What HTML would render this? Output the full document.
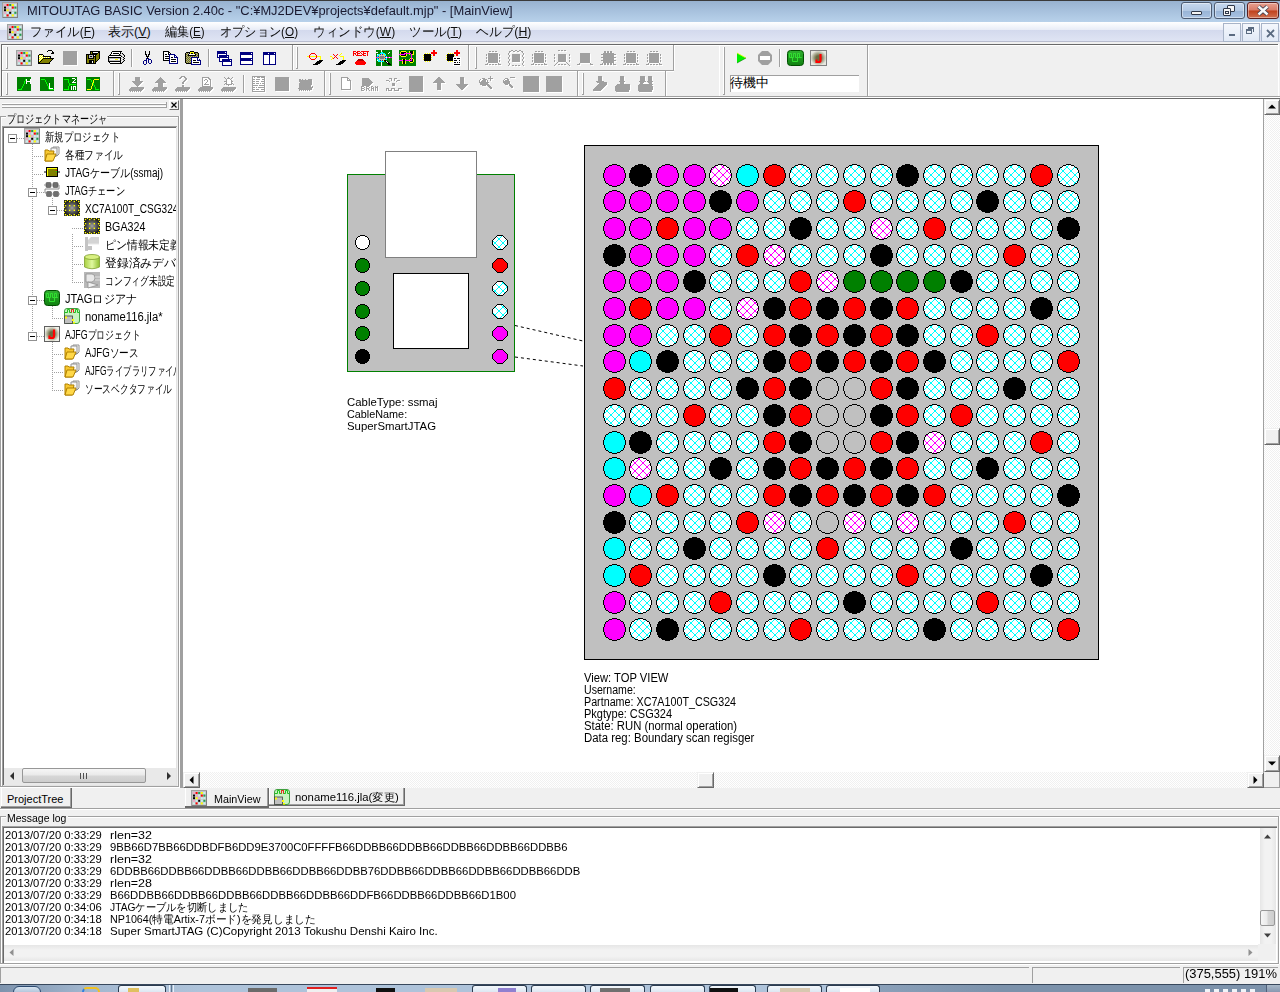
<!DOCTYPE html>
<html><head><meta charset="utf-8">
<style>
*{box-sizing:border-box}
html,body{margin:0;padding:0}
body{width:1280px;height:992px;overflow:hidden;position:relative;background:#f0f0f0;font-family:"Liberation Sans",sans-serif;font-size:12px;color:#000}
.a{position:absolute}
.t{position:absolute;white-space:nowrap}
svg{overflow:visible}
</style></head><body>
<div class="a" style="left:0px;top:0px;width:1280px;height:22px;background:linear-gradient(#96b0ce,#a6c0dc 45%,#b8d1ea)"></div>
<div class="a" style="left:0px;top:0px;width:1280px;height:1px;background:#3a3a3a"></div>
<svg class="a" style="left:2px;top:2px" width="16" height="16" viewBox="0 0 16 16"><rect x="0" y="0" width="16" height="16" fill="#c4c4c4"/><path d="M15.5 0V16M0 15.5H16" stroke="#808080"/><path d="M0.5 0V16M0 0.5H16" stroke="#a0a0a0"/><rect x="2.0" y="2.0" width="2" height="2" fill="#f0a8c8"/><rect x="4.6" y="2.0" width="2" height="2" fill="#ff0000"/><rect x="7.2" y="2.0" width="2" height="2" fill="#20a050"/><rect x="9.8" y="2.0" width="2" height="2" fill="#ffff00"/><rect x="12.4" y="2.0" width="2" height="2" fill="#c8f0f0"/><rect x="2.0" y="4.6" width="2" height="2" fill="#000"/><rect x="4.6" y="4.6" width="2" height="2" fill="#f0a8c8"/><rect x="7.2" y="4.6" width="2" height="2" fill="#c8f0f0"/><rect x="9.8" y="4.6" width="2" height="2" fill="#ff0000"/><rect x="12.4" y="4.6" width="2" height="2" fill="#20a050"/><rect x="2.0" y="7.2" width="2" height="2" fill="#000"/><rect x="4.6" y="7.2" width="2" height="2" fill="#ffff00"/><rect x="7.2" y="7.2" width="2" height="2" fill="#f0a8c8"/><rect x="9.8" y="7.2" width="2" height="2" fill="#c8f0f0"/><rect x="12.4" y="7.2" width="2" height="2" fill="#c8f0f0"/><rect x="2.0" y="9.8" width="2" height="2" fill="#f0a8c8"/><rect x="4.6" y="9.8" width="2" height="2" fill="#c8f0f0"/><rect x="7.2" y="9.8" width="2" height="2" fill="#000"/><rect x="9.8" y="9.8" width="2" height="2" fill="#c8f0f0"/><rect x="12.4" y="9.8" width="2" height="2" fill="#20a050"/><rect x="2.0" y="12.4" width="2" height="2" fill="#c8f0f0"/><rect x="4.6" y="12.4" width="2" height="2" fill="#ff0000"/><rect x="7.2" y="12.4" width="2" height="2" fill="#c8f0f0"/><rect x="9.8" y="12.4" width="2" height="2" fill="#ffff00"/><rect x="12.4" y="12.4" width="2" height="2" fill="#c8f0f0"/></svg>
<div class="t" style="left:27px;top:4.00px;font-size:13px;line-height:13px;color:#1a1a30;transform:scaleX(0.9918);transform-origin:0 0;"><span class="m" id="m0">MITOUJTAG BASIC Version 2.40c - &quot;C:¥MJ2DEV¥projects¥default.mjp&quot; - [MainView]</span></div>
<div class="a" style="left:1181px;top:2px;width:31px;height:17px;border:1px solid #4c5a70;border-radius:3px;background:linear-gradient(#c6d8ee,#b3c9e4 50%,#98b4d6 52%,#a9c2e2);box-shadow:inset 0 0 0 1px rgba(255,255,255,.45)"></div><div class="a" style="left:1191px;top:11px;width:11px;height:4px;background:#f4f4f4;border:1px solid #303848;border-radius:1px"></div>
<div class="a" style="left:1214px;top:2px;width:31px;height:17px;border:1px solid #4c5a70;border-radius:3px;background:linear-gradient(#c6d8ee,#b3c9e4 50%,#98b4d6 52%,#a9c2e2);box-shadow:inset 0 0 0 1px rgba(255,255,255,.45)"></div><div class="a" style="left:1227px;top:5px;width:8px;height:7px;background:#f4f4f4;border:1.5px solid #303848;border-radius:1px"></div><div class="a" style="left:1223px;top:8px;width:8px;height:8px;background:#f4f4f4;border:1.5px solid #303848;border-radius:1px"></div><div class="a" style="left:1225px;top:11px;width:4px;height:3px;border:1px solid #303848"></div>
<div class="a" style="left:1247px;top:2px;width:32px;height:17px;border:1px solid #5a1f1f;border-radius:3px;background:linear-gradient(#e8a090,#d87a66 48%,#c0401c 52%,#d07050);box-shadow:inset 0 0 0 1px rgba(255,255,255,.4)"></div>
<svg class="a" style="left:1256px;top:5px" width="14" height="11" viewBox="0 0 14 11"><path d="M2.5 1.5L11.5 9.5M11.5 1.5L2.5 9.5" stroke="#3a3f50" stroke-width="4.2"/><path d="M2.5 1.5L11.5 9.5M11.5 1.5L2.5 9.5" stroke="#f8f8f8" stroke-width="2.4"/></svg>
<div class="a" style="left:0px;top:22px;width:1280px;height:20px;background:linear-gradient(#ffffff 0%,#e9edf7 38%,#d3d9ed 40%,#e0e5f4 100%)"></div>
<div class="a" style="left:0px;top:41px;width:1280px;height:1px;background:#b9bdcf"></div>
<svg class="a" style="left:7px;top:24px" width="16" height="16" viewBox="0 0 16 16"><rect x="0" y="0" width="16" height="16" fill="#c4c4c4"/><path d="M15.5 0V16M0 15.5H16" stroke="#808080"/><path d="M0.5 0V16M0 0.5H16" stroke="#a0a0a0"/><rect x="2.0" y="2.0" width="2" height="2" fill="#f0a8c8"/><rect x="4.6" y="2.0" width="2" height="2" fill="#ff0000"/><rect x="7.2" y="2.0" width="2" height="2" fill="#20a050"/><rect x="9.8" y="2.0" width="2" height="2" fill="#ffff00"/><rect x="12.4" y="2.0" width="2" height="2" fill="#c8f0f0"/><rect x="2.0" y="4.6" width="2" height="2" fill="#000"/><rect x="4.6" y="4.6" width="2" height="2" fill="#f0a8c8"/><rect x="7.2" y="4.6" width="2" height="2" fill="#c8f0f0"/><rect x="9.8" y="4.6" width="2" height="2" fill="#ff0000"/><rect x="12.4" y="4.6" width="2" height="2" fill="#20a050"/><rect x="2.0" y="7.2" width="2" height="2" fill="#000"/><rect x="4.6" y="7.2" width="2" height="2" fill="#ffff00"/><rect x="7.2" y="7.2" width="2" height="2" fill="#f0a8c8"/><rect x="9.8" y="7.2" width="2" height="2" fill="#c8f0f0"/><rect x="12.4" y="7.2" width="2" height="2" fill="#c8f0f0"/><rect x="2.0" y="9.8" width="2" height="2" fill="#f0a8c8"/><rect x="4.6" y="9.8" width="2" height="2" fill="#c8f0f0"/><rect x="7.2" y="9.8" width="2" height="2" fill="#000"/><rect x="9.8" y="9.8" width="2" height="2" fill="#c8f0f0"/><rect x="12.4" y="9.8" width="2" height="2" fill="#20a050"/><rect x="2.0" y="12.4" width="2" height="2" fill="#c8f0f0"/><rect x="4.6" y="12.4" width="2" height="2" fill="#ff0000"/><rect x="7.2" y="12.4" width="2" height="2" fill="#c8f0f0"/><rect x="9.8" y="12.4" width="2" height="2" fill="#ffff00"/><rect x="12.4" y="12.4" width="2" height="2" fill="#c8f0f0"/></svg>
<div class="t" style="left:30px;top:26.42px;font-size:12.5px;line-height:12.5px;color:#101010;transform:scaleX(0.9559);transform-origin:0 0;"><span class="m" id="m1">ファイル(<u style="text-underline-offset:1px">F</u>)</span></div>
<div class="t" style="left:108px;top:26.42px;font-size:12.5px;line-height:12.5px;color:#101010;transform:scaleX(1.0000);transform-origin:0 0;"><span class="m" id="m2">表示(<u style="text-underline-offset:1px">V</u>)</span></div>
<div class="t" style="left:165px;top:26.42px;font-size:12.5px;line-height:12.5px;color:#101010;transform:scaleX(0.9302);transform-origin:0 0;"><span class="m" id="m3">編集(<u style="text-underline-offset:1px">E</u>)</span></div>
<div class="t" style="left:220px;top:26.42px;font-size:12.5px;line-height:12.5px;color:#101010;transform:scaleX(0.9398);transform-origin:0 0;"><span class="m" id="m4">オプション(<u style="text-underline-offset:1px">O</u>)</span></div>
<div class="t" style="left:313px;top:26.42px;font-size:12.5px;line-height:12.5px;color:#101010;transform:scaleX(0.9647);transform-origin:0 0;"><span class="m" id="m5">ウィンドウ(<u style="text-underline-offset:1px">W</u>)</span></div>
<div class="t" style="left:409px;top:26.42px;font-size:12.5px;line-height:12.5px;color:#101010;transform:scaleX(0.9636);transform-origin:0 0;"><span class="m" id="m6">ツール(<u style="text-underline-offset:1px">T</u>)</span></div>
<div class="t" style="left:476px;top:26.42px;font-size:12.5px;line-height:12.5px;color:#101010;transform:scaleX(0.9821);transform-origin:0 0;"><span class="m" id="m7">ヘルプ(<u style="text-underline-offset:1px">H</u>)</span></div>
<div class="a" style="left:1223px;top:23px;width:18px;height:19px;border:1px solid #a8b4c8;background:linear-gradient(#f4f7fc,#e1e9f6)"></div><div class="a" style="left:1229px;top:34px;width:6px;height:2px;background:#5a6a80"></div>
<div class="a" style="left:1242px;top:23px;width:18px;height:19px;border:1px solid #a8b4c8;background:linear-gradient(#f4f7fc,#e1e9f6)"></div><div class="a" style="left:1246px;top:29px;width:6px;height:5px;border:1px solid #5a6a80;border-top-width:2px"></div><div class="a" style="left:1248px;top:27px;width:6px;height:5px;border-top:2px solid #5a6a80;border-right:1px solid #5a6a80"></div>
<div class="a" style="left:1261px;top:23px;width:18px;height:19px;border:1px solid #a8b4c8;background:linear-gradient(#f4f7fc,#e1e9f6)"></div><svg class="a" style="left:1266px;top:29px" width="9" height="9"><path d="M1 1L8 8M8 1L1 8" stroke="#5a6a80" stroke-width="1.8"/></svg>
<div class="a" style="left:0;top:42px;width:1280px;height:57px;background:#f0f0f0"></div>
<div class="a" style="left:1px;top:44px;width:1277px;height:1px;background:#696969"></div>
<div class="a" style="left:1px;top:44px;width:1px;height:55px;background:#696969"></div>
<div class="a" style="left:2px;top:45px;width:1276px;height:1px;background:#fff"></div>
<div class="a" style="left:2px;top:45px;width:1px;height:52px;background:#fff"></div>
<div class="a" style="left:1278px;top:44px;width:1px;height:54px;background:#fff"></div>
<div class="a" style="left:2px;top:70px;width:672px;height:1px;background:#a0a0a0"></div>
<div class="a" style="left:2px;top:71px;width:672px;height:1px;background:#fff"></div>
<div class="a" style="left:0px;top:96px;width:1280px;height:1px;background:#a0a0a0"></div>
<div class="a" style="left:0px;top:97px;width:1280px;height:1px;background:#fff"></div>
<div class="a" style="left:0px;top:98px;width:1280px;height:1px;background:#696969"></div>
<div class="a" style="left:292px;top:45px;width:1px;height:25px;background:#a0a0a0"></div>
<div class="a" style="left:293px;top:45px;width:1px;height:25px;background:#fff"></div>
<div class="a" style="left:468px;top:45px;width:1px;height:25px;background:#a0a0a0"></div>
<div class="a" style="left:469px;top:45px;width:1px;height:25px;background:#fff"></div>
<div class="a" style="left:673px;top:45px;width:1px;height:25px;background:#a0a0a0"></div>
<div class="a" style="left:674px;top:45px;width:1px;height:25px;background:#fff"></div>
<div class="a" style="left:113px;top:71px;width:1px;height:25px;background:#a0a0a0"></div>
<div class="a" style="left:114px;top:71px;width:1px;height:25px;background:#fff"></div>
<div class="a" style="left:324px;top:71px;width:1px;height:25px;background:#a0a0a0"></div>
<div class="a" style="left:325px;top:71px;width:1px;height:25px;background:#fff"></div>
<div class="a" style="left:577px;top:71px;width:1px;height:25px;background:#a0a0a0"></div>
<div class="a" style="left:578px;top:71px;width:1px;height:25px;background:#fff"></div>
<div class="a" style="left:665px;top:71px;width:1px;height:25px;background:#a0a0a0"></div>
<div class="a" style="left:666px;top:71px;width:1px;height:25px;background:#fff"></div>
<div class="a" style="left:719px;top:45px;width:1px;height:51px;background:#fff"></div>
<div class="a" style="left:867px;top:45px;width:1px;height:51px;background:#a0a0a0"></div>
<div class="a" style="left:868px;top:45px;width:1px;height:51px;background:#fff"></div>
<div class="a" style="left:6px;top:47px;width:1px;height:22px;background:#fff"></div><div class="a" style="left:7px;top:47px;width:1px;height:22px;background:#a0a0a0"></div><div class="a" style="left:6px;top:68px;width:2px;height:1px;background:#a0a0a0"></div>
<div class="a" style="left:296px;top:47px;width:1px;height:22px;background:#fff"></div><div class="a" style="left:297px;top:47px;width:1px;height:22px;background:#a0a0a0"></div><div class="a" style="left:296px;top:68px;width:2px;height:1px;background:#a0a0a0"></div>
<div class="a" style="left:475px;top:47px;width:1px;height:22px;background:#fff"></div><div class="a" style="left:476px;top:47px;width:1px;height:22px;background:#a0a0a0"></div><div class="a" style="left:475px;top:68px;width:2px;height:1px;background:#a0a0a0"></div>
<div class="a" style="left:6px;top:73px;width:1px;height:22px;background:#fff"></div><div class="a" style="left:7px;top:73px;width:1px;height:22px;background:#a0a0a0"></div><div class="a" style="left:6px;top:94px;width:2px;height:1px;background:#a0a0a0"></div>
<div class="a" style="left:118px;top:73px;width:1px;height:22px;background:#fff"></div><div class="a" style="left:119px;top:73px;width:1px;height:22px;background:#a0a0a0"></div><div class="a" style="left:118px;top:94px;width:2px;height:1px;background:#a0a0a0"></div>
<div class="a" style="left:329px;top:73px;width:1px;height:22px;background:#fff"></div><div class="a" style="left:330px;top:73px;width:1px;height:22px;background:#a0a0a0"></div><div class="a" style="left:329px;top:94px;width:2px;height:1px;background:#a0a0a0"></div>
<div class="a" style="left:582px;top:73px;width:1px;height:22px;background:#fff"></div><div class="a" style="left:583px;top:73px;width:1px;height:22px;background:#a0a0a0"></div><div class="a" style="left:582px;top:94px;width:2px;height:1px;background:#a0a0a0"></div>
<div class="a" style="left:723px;top:47px;width:1px;height:48px;background:#fff"></div><div class="a" style="left:724px;top:47px;width:1px;height:48px;background:#a0a0a0"></div><div class="a" style="left:723px;top:94px;width:2px;height:1px;background:#a0a0a0"></div>
<div class="a" style="left:131px;top:49px;width:1px;height:18px;background:#a0a0a0"></div><div class="a" style="left:132px;top:49px;width:1px;height:18px;background:#fff"></div>
<div class="a" style="left:208px;top:49px;width:1px;height:18px;background:#a0a0a0"></div><div class="a" style="left:209px;top:49px;width:1px;height:18px;background:#fff"></div>
<div class="a" style="left:243px;top:75px;width:1px;height:18px;background:#a0a0a0"></div><div class="a" style="left:244px;top:75px;width:1px;height:18px;background:#fff"></div>
<div class="a" style="left:779px;top:49px;width:1px;height:18px;background:#a0a0a0"></div><div class="a" style="left:780px;top:49px;width:1px;height:18px;background:#fff"></div>
<svg class="a" style="left:16px;top:50px" width="16" height="16" viewBox="0 0 16 16"><rect x="0" y="0" width="16" height="16" fill="#c4c4c4"/><path d="M15.5 0V16M0 15.5H16" stroke="#808080"/><path d="M0.5 0V16M0 0.5H16" stroke="#a0a0a0"/><rect x="2.0" y="2.0" width="2" height="2" fill="#f0a8c8"/><rect x="4.6" y="2.0" width="2" height="2" fill="#ff0000"/><rect x="7.2" y="2.0" width="2" height="2" fill="#20a050"/><rect x="9.8" y="2.0" width="2" height="2" fill="#ffff00"/><rect x="12.4" y="2.0" width="2" height="2" fill="#c8f0f0"/><rect x="2.0" y="4.6" width="2" height="2" fill="#000"/><rect x="4.6" y="4.6" width="2" height="2" fill="#f0a8c8"/><rect x="7.2" y="4.6" width="2" height="2" fill="#c8f0f0"/><rect x="9.8" y="4.6" width="2" height="2" fill="#ff0000"/><rect x="12.4" y="4.6" width="2" height="2" fill="#20a050"/><rect x="2.0" y="7.2" width="2" height="2" fill="#000"/><rect x="4.6" y="7.2" width="2" height="2" fill="#ffff00"/><rect x="7.2" y="7.2" width="2" height="2" fill="#f0a8c8"/><rect x="9.8" y="7.2" width="2" height="2" fill="#c8f0f0"/><rect x="12.4" y="7.2" width="2" height="2" fill="#c8f0f0"/><rect x="2.0" y="9.8" width="2" height="2" fill="#f0a8c8"/><rect x="4.6" y="9.8" width="2" height="2" fill="#c8f0f0"/><rect x="7.2" y="9.8" width="2" height="2" fill="#000"/><rect x="9.8" y="9.8" width="2" height="2" fill="#c8f0f0"/><rect x="12.4" y="9.8" width="2" height="2" fill="#20a050"/><rect x="2.0" y="12.4" width="2" height="2" fill="#c8f0f0"/><rect x="4.6" y="12.4" width="2" height="2" fill="#ff0000"/><rect x="7.2" y="12.4" width="2" height="2" fill="#c8f0f0"/><rect x="9.8" y="12.4" width="2" height="2" fill="#ffff00"/><rect x="12.4" y="12.4" width="2" height="2" fill="#c8f0f0"/></svg>
<svg class="a" style="left:732px;top:50px" width="16" height="16" viewBox="0 0 16 16"><path d="M5 3L14 8L5 13Z" fill="#00f000"/><path d="M5 3L14 8" stroke="#e8ff00" stroke-width="0.8"/><path d="M5 13L14 8" stroke="#008000" stroke-width="0.6"/></svg>
<svg class="a" style="left:757px;top:50px" width="16" height="16" viewBox="0 0 16 16"><path d="M5 1H11L15 5V11L11 15H5L1 11V5Z" fill="#a0a0a0"/><rect x="3" y="6" width="10" height="4" fill="#fff"/></svg>
<svg class="a" style="left:787px;top:50px" width="16" height="16" viewBox="0 0 16 16"><defs><linearGradient id="lag" x1="0" y1="0" x2="0" y2="1"><stop offset="0" stop-color="#30b030"/><stop offset="1" stop-color="#108010"/></linearGradient></defs><rect x="0.5" y="0.5" width="16" height="15" rx="3" fill="url(#lag)" stroke="#005000"/><path d="M2.5 7.5V3.5H4.5V7.5H6.5V3.5H8.5V7.5H10.5V3.5H12.5V7.5H14.5M2.5 7.5H5.5V11.5H10.5V7.5H14.5" stroke="#30e030" fill="none" stroke-width="1"/></svg>
<svg class="a" style="left:810px;top:50px" width="16" height="16" viewBox="0 0 16 16"><defs><radialGradient id="jjg"><stop offset="0.3" stop-color="#6a6a40"/><stop offset="1" stop-color="#e8e8e0"/></radialGradient></defs><rect x="0.5" y="0.5" width="16" height="15" fill="url(#jjg)" stroke="#808080"/><path d="M10.5 4V10.5Q10.5 12 8.5 12H6.5V9.5" stroke="#f00" stroke-width="2.2" fill="none"/></svg>
<svg class="a" style="left:140px;top:49px" width="16" height="16" shape-rendering="crispEdges"><rect x="5" y="2" width="1" height="1" fill="#000000"/><rect x="9" y="2" width="1" height="1" fill="#000000"/><rect x="5" y="3" width="1" height="1" fill="#000000"/><rect x="9" y="3" width="1" height="1" fill="#000000"/><rect x="5" y="4" width="1" height="1" fill="#000000"/><rect x="9" y="4" width="1" height="1" fill="#000000"/><rect x="5" y="5" width="2" height="1" fill="#000000"/><rect x="8" y="5" width="2" height="1" fill="#000000"/><rect x="6" y="6" width="1" height="1" fill="#000000"/><rect x="8" y="6" width="1" height="1" fill="#000000"/><rect x="6" y="7" width="3" height="1" fill="#000000"/><rect x="7" y="8" width="1" height="1" fill="#000000"/><rect x="6" y="9" width="1" height="1" fill="#000080"/><rect x="7" y="9" width="1" height="1" fill="#000000"/><rect x="8" y="9" width="1" height="1" fill="#000080"/><rect x="6" y="10" width="1" height="1" fill="#000080"/><rect x="8" y="10" width="3" height="1" fill="#000080"/><rect x="4" y="11" width="3" height="1" fill="#000080"/><rect x="8" y="11" width="1" height="1" fill="#000080"/><rect x="11" y="11" width="1" height="1" fill="#000080"/><rect x="3" y="12" width="1" height="1" fill="#000080"/><rect x="6" y="12" width="1" height="1" fill="#000080"/><rect x="8" y="12" width="1" height="1" fill="#000080"/><rect x="11" y="12" width="1" height="1" fill="#000080"/><rect x="3" y="13" width="1" height="1" fill="#000080"/><rect x="6" y="13" width="1" height="1" fill="#000080"/><rect x="8" y="13" width="1" height="1" fill="#000080"/><rect x="11" y="13" width="1" height="1" fill="#000080"/><rect x="3" y="14" width="1" height="1" fill="#000080"/><rect x="6" y="14" width="1" height="1" fill="#000080"/><rect x="9" y="14" width="2" height="1" fill="#000080"/><rect x="4" y="15" width="2" height="1" fill="#000080"/></svg>
<svg class="a" style="left:161px;top:51px" width="17" height="13" shape-rendering="crispEdges"><rect x="2" y="0" width="6" height="1" fill="#000000"/><rect x="2" y="1" width="1" height="1" fill="#000000"/><rect x="3" y="1" width="4" height="1" fill="#ffffff"/><rect x="7" y="1" width="2" height="1" fill="#000000"/><rect x="2" y="2" width="1" height="1" fill="#000000"/><rect x="3" y="2" width="4" height="1" fill="#ffffff"/><rect x="7" y="2" width="1" height="1" fill="#000000"/><rect x="8" y="2" width="1" height="1" fill="#ffffff"/><rect x="9" y="2" width="1" height="1" fill="#000000"/><rect x="2" y="3" width="1" height="1" fill="#000000"/><rect x="3" y="3" width="1" height="1" fill="#ffffff"/><rect x="4" y="3" width="2" height="1" fill="#000000"/><rect x="6" y="3" width="1" height="1" fill="#ffffff"/><rect x="7" y="3" width="1" height="1" fill="#000000"/><rect x="8" y="3" width="6" height="1" fill="#000080"/><rect x="2" y="4" width="1" height="1" fill="#000000"/><rect x="3" y="4" width="5" height="1" fill="#ffffff"/><rect x="8" y="4" width="1" height="1" fill="#000080"/><rect x="9" y="4" width="4" height="1" fill="#ffffff"/><rect x="13" y="4" width="2" height="1" fill="#000080"/><rect x="2" y="5" width="1" height="1" fill="#000000"/><rect x="3" y="5" width="1" height="1" fill="#ffffff"/><rect x="4" y="5" width="4" height="1" fill="#000000"/><rect x="8" y="5" width="1" height="1" fill="#000080"/><rect x="9" y="5" width="4" height="1" fill="#ffffff"/><rect x="13" y="5" width="1" height="1" fill="#000080"/><rect x="14" y="5" width="1" height="1" fill="#ffffff"/><rect x="15" y="5" width="1" height="1" fill="#000080"/><rect x="2" y="6" width="1" height="1" fill="#000000"/><rect x="3" y="6" width="5" height="1" fill="#ffffff"/><rect x="8" y="6" width="1" height="1" fill="#000080"/><rect x="9" y="6" width="1" height="1" fill="#ffffff"/><rect x="10" y="6" width="2" height="1" fill="#000000"/><rect x="12" y="6" width="1" height="1" fill="#ffffff"/><rect x="13" y="6" width="4" height="1" fill="#000080"/><rect x="2" y="7" width="1" height="1" fill="#000000"/><rect x="3" y="7" width="1" height="1" fill="#ffffff"/><rect x="4" y="7" width="4" height="1" fill="#000000"/><rect x="8" y="7" width="1" height="1" fill="#000080"/><rect x="9" y="7" width="7" height="1" fill="#ffffff"/><rect x="16" y="7" width="1" height="1" fill="#000080"/><rect x="2" y="8" width="1" height="1" fill="#000000"/><rect x="3" y="8" width="5" height="1" fill="#ffffff"/><rect x="8" y="8" width="1" height="1" fill="#000080"/><rect x="9" y="8" width="1" height="1" fill="#ffffff"/><rect x="10" y="8" width="5" height="1" fill="#000000"/><rect x="15" y="8" width="1" height="1" fill="#ffffff"/><rect x="16" y="8" width="1" height="1" fill="#000080"/><rect x="2" y="9" width="6" height="1" fill="#000000"/><rect x="8" y="9" width="1" height="1" fill="#000080"/><rect x="9" y="9" width="7" height="1" fill="#ffffff"/><rect x="16" y="9" width="1" height="1" fill="#000080"/><rect x="8" y="10" width="1" height="1" fill="#000080"/><rect x="9" y="10" width="1" height="1" fill="#ffffff"/><rect x="10" y="10" width="5" height="1" fill="#000000"/><rect x="15" y="10" width="1" height="1" fill="#ffffff"/><rect x="16" y="10" width="1" height="1" fill="#000080"/><rect x="8" y="11" width="1" height="1" fill="#000080"/><rect x="9" y="11" width="7" height="1" fill="#ffffff"/><rect x="16" y="11" width="1" height="1" fill="#000080"/><rect x="8" y="12" width="9" height="1" fill="#000080"/></svg>
<svg class="a" style="left:183px;top:51px" width="18" height="14" shape-rendering="crispEdges"><rect x="7" y="0" width="4" height="1" fill="#000000"/><rect x="3" y="1" width="4" height="1" fill="#000000"/><rect x="7" y="1" width="4" height="1" fill="#ffff00"/><rect x="11" y="1" width="4" height="1" fill="#000000"/><rect x="2" y="2" width="1" height="1" fill="#000000"/><rect x="3" y="2" width="1" height="1" fill="#a0a0a0"/><rect x="4" y="2" width="1" height="1" fill="#808000"/><rect x="5" y="2" width="1" height="1" fill="#c0c0c0"/><rect x="6" y="2" width="1" height="1" fill="#000000"/><rect x="7" y="2" width="1" height="1" fill="#ffff00"/><rect x="8" y="2" width="2" height="1" fill="#000000"/><rect x="10" y="2" width="1" height="1" fill="#ffff00"/><rect x="11" y="2" width="1" height="1" fill="#000000"/><rect x="12" y="2" width="1" height="1" fill="#808000"/><rect x="13" y="2" width="1" height="1" fill="#a0a0a0"/><rect x="14" y="2" width="1" height="1" fill="#808000"/><rect x="15" y="2" width="1" height="1" fill="#000000"/><rect x="2" y="3" width="1" height="1" fill="#000000"/><rect x="3" y="3" width="1" height="1" fill="#808000"/><rect x="4" y="3" width="1" height="1" fill="#a0a0a0"/><rect x="5" y="3" width="1" height="1" fill="#000000"/><rect x="6" y="3" width="6" height="1" fill="#ffffff"/><rect x="12" y="3" width="1" height="1" fill="#000000"/><rect x="13" y="3" width="1" height="1" fill="#808000"/><rect x="14" y="3" width="1" height="1" fill="#a0a0a0"/><rect x="15" y="3" width="1" height="1" fill="#000000"/><rect x="2" y="4" width="1" height="1" fill="#000000"/><rect x="3" y="4" width="1" height="1" fill="#a0a0a0"/><rect x="4" y="4" width="1" height="1" fill="#808000"/><rect x="5" y="4" width="8" height="1" fill="#000000"/><rect x="13" y="4" width="1" height="1" fill="#a0a0a0"/><rect x="14" y="4" width="1" height="1" fill="#808000"/><rect x="15" y="4" width="1" height="1" fill="#000000"/><rect x="2" y="5" width="1" height="1" fill="#000000"/><rect x="3" y="5" width="1" height="1" fill="#808000"/><rect x="4" y="5" width="1" height="1" fill="#a0a0a0"/><rect x="5" y="5" width="1" height="1" fill="#808000"/><rect x="6" y="5" width="1" height="1" fill="#a0a0a0"/><rect x="7" y="5" width="1" height="1" fill="#808000"/><rect x="8" y="5" width="1" height="1" fill="#a0a0a0"/><rect x="9" y="5" width="1" height="1" fill="#808000"/><rect x="10" y="5" width="1" height="1" fill="#a0a0a0"/><rect x="11" y="5" width="1" height="1" fill="#808000"/><rect x="12" y="5" width="1" height="1" fill="#a0a0a0"/><rect x="13" y="5" width="1" height="1" fill="#808000"/><rect x="14" y="5" width="1" height="1" fill="#a0a0a0"/><rect x="15" y="5" width="1" height="1" fill="#000000"/><rect x="2" y="6" width="1" height="1" fill="#000000"/><rect x="3" y="6" width="1" height="1" fill="#a0a0a0"/><rect x="4" y="6" width="1" height="1" fill="#808000"/><rect x="5" y="6" width="1" height="1" fill="#a0a0a0"/><rect x="6" y="6" width="1" height="1" fill="#808000"/><rect x="7" y="6" width="1" height="1" fill="#a0a0a0"/><rect x="8" y="6" width="7" height="1" fill="#000080"/><rect x="15" y="6" width="1" height="1" fill="#000000"/><rect x="2" y="7" width="1" height="1" fill="#000000"/><rect x="3" y="7" width="1" height="1" fill="#808000"/><rect x="4" y="7" width="1" height="1" fill="#a0a0a0"/><rect x="5" y="7" width="1" height="1" fill="#808000"/><rect x="6" y="7" width="1" height="1" fill="#a0a0a0"/><rect x="7" y="7" width="1" height="1" fill="#808000"/><rect x="8" y="7" width="1" height="1" fill="#000080"/><rect x="9" y="7" width="5" height="1" fill="#ffffff"/><rect x="14" y="7" width="1" height="1" fill="#000080"/><rect x="15" y="7" width="1" height="1" fill="#ffffff"/><rect x="2" y="8" width="1" height="1" fill="#000000"/><rect x="3" y="8" width="1" height="1" fill="#a0a0a0"/><rect x="4" y="8" width="1" height="1" fill="#808000"/><rect x="5" y="8" width="1" height="1" fill="#a0a0a0"/><rect x="6" y="8" width="1" height="1" fill="#808000"/><rect x="7" y="8" width="1" height="1" fill="#a0a0a0"/><rect x="8" y="8" width="1" height="1" fill="#000080"/><rect x="9" y="8" width="5" height="1" fill="#ffffff"/><rect x="14" y="8" width="1" height="1" fill="#000080"/><rect x="15" y="8" width="1" height="1" fill="#ffffff"/><rect x="16" y="8" width="1" height="1" fill="#000080"/><rect x="2" y="9" width="1" height="1" fill="#000000"/><rect x="3" y="9" width="1" height="1" fill="#808000"/><rect x="4" y="9" width="1" height="1" fill="#a0a0a0"/><rect x="5" y="9" width="1" height="1" fill="#808000"/><rect x="6" y="9" width="1" height="1" fill="#a0a0a0"/><rect x="7" y="9" width="1" height="1" fill="#808000"/><rect x="8" y="9" width="1" height="1" fill="#000080"/><rect x="9" y="9" width="1" height="1" fill="#ffffff"/><rect x="10" y="9" width="3" height="1" fill="#000000"/><rect x="13" y="9" width="1" height="1" fill="#ffffff"/><rect x="14" y="9" width="4" height="1" fill="#000080"/><rect x="2" y="10" width="1" height="1" fill="#000000"/><rect x="3" y="10" width="1" height="1" fill="#a0a0a0"/><rect x="4" y="10" width="1" height="1" fill="#808000"/><rect x="5" y="10" width="1" height="1" fill="#a0a0a0"/><rect x="6" y="10" width="1" height="1" fill="#808000"/><rect x="7" y="10" width="1" height="1" fill="#a0a0a0"/><rect x="8" y="10" width="1" height="1" fill="#000080"/><rect x="9" y="10" width="8" height="1" fill="#ffffff"/><rect x="17" y="10" width="1" height="1" fill="#000080"/><rect x="2" y="11" width="1" height="1" fill="#000000"/><rect x="3" y="11" width="1" height="1" fill="#808000"/><rect x="4" y="11" width="1" height="1" fill="#a0a0a0"/><rect x="5" y="11" width="1" height="1" fill="#808000"/><rect x="6" y="11" width="1" height="1" fill="#a0a0a0"/><rect x="7" y="11" width="1" height="1" fill="#808000"/><rect x="8" y="11" width="1" height="1" fill="#000080"/><rect x="9" y="11" width="1" height="1" fill="#ffffff"/><rect x="10" y="11" width="6" height="1" fill="#000000"/><rect x="16" y="11" width="1" height="1" fill="#ffffff"/><rect x="17" y="11" width="1" height="1" fill="#000080"/><rect x="3" y="12" width="5" height="1" fill="#000000"/><rect x="8" y="12" width="1" height="1" fill="#000080"/><rect x="9" y="12" width="8" height="1" fill="#ffffff"/><rect x="17" y="12" width="1" height="1" fill="#000080"/><rect x="8" y="13" width="10" height="1" fill="#000080"/></svg>
<svg class="a" style="left:305px;top:52px" width="18" height="13" shape-rendering="crispEdges"><rect x="6" y="1" width="4" height="1" fill="#ff0000"/><rect x="5" y="2" width="1" height="1" fill="#ff0000"/><rect x="10" y="2" width="1" height="1" fill="#ff0000"/><rect x="4" y="3" width="1" height="1" fill="#ff0000"/><rect x="11" y="3" width="1" height="1" fill="#ff0000"/><rect x="2" y="4" width="2" height="1" fill="#ffff00"/><rect x="4" y="4" width="1" height="1" fill="#ff0000"/><rect x="5" y="4" width="6" height="1" fill="#ffff00"/><rect x="11" y="4" width="1" height="1" fill="#ff0000"/><rect x="12" y="4" width="4" height="1" fill="#ffff00"/><rect x="4" y="5" width="1" height="1" fill="#ff0000"/><rect x="11" y="5" width="1" height="1" fill="#ff0000"/><rect x="15" y="5" width="1" height="1" fill="#ffff00"/><rect x="5" y="6" width="1" height="1" fill="#ff0000"/><rect x="10" y="6" width="1" height="1" fill="#ff0000"/><rect x="15" y="6" width="1" height="1" fill="#ffff00"/><rect x="6" y="7" width="4" height="1" fill="#ff0000"/><rect x="15" y="7" width="1" height="1" fill="#ffff00"/><rect x="14" y="8" width="4" height="1" fill="#000000"/><rect x="12" y="9" width="5" height="1" fill="#000000"/><rect x="11" y="10" width="5" height="1" fill="#000000"/><rect x="10" y="11" width="5" height="1" fill="#000000"/><rect x="8" y="12" width="5" height="1" fill="#000000"/></svg>
<svg class="a" style="left:328px;top:52px" width="18" height="13" shape-rendering="crispEdges"><rect x="13" y="1" width="1" height="1" fill="#ffff00"/><rect x="5" y="2" width="1" height="1" fill="#ff0000"/><rect x="9" y="2" width="1" height="1" fill="#ff0000"/><rect x="12" y="2" width="1" height="1" fill="#ffff00"/><rect x="6" y="3" width="1" height="1" fill="#ff0000"/><rect x="8" y="3" width="1" height="1" fill="#ff0000"/><rect x="11" y="3" width="1" height="1" fill="#ffff00"/><rect x="2" y="4" width="2" height="1" fill="#ffff00"/><rect x="7" y="4" width="1" height="1" fill="#ff0000"/><rect x="12" y="4" width="4" height="1" fill="#ffff00"/><rect x="4" y="5" width="1" height="1" fill="#ffff00"/><rect x="6" y="5" width="1" height="1" fill="#ff0000"/><rect x="8" y="5" width="1" height="1" fill="#ff0000"/><rect x="15" y="5" width="1" height="1" fill="#ffff00"/><rect x="4" y="6" width="1" height="1" fill="#ffff00"/><rect x="5" y="6" width="1" height="1" fill="#ff0000"/><rect x="9" y="6" width="1" height="1" fill="#ff0000"/><rect x="15" y="6" width="1" height="1" fill="#ffff00"/><rect x="3" y="7" width="1" height="1" fill="#ffff00"/><rect x="15" y="7" width="1" height="1" fill="#ffff00"/><rect x="14" y="8" width="4" height="1" fill="#000000"/><rect x="12" y="9" width="5" height="1" fill="#000000"/><rect x="11" y="10" width="5" height="1" fill="#000000"/><rect x="10" y="11" width="5" height="1" fill="#000000"/><rect x="8" y="12" width="5" height="1" fill="#000000"/></svg>
<svg class="a" style="left:126px;top:72px" width="21" height="21" shape-rendering="crispEdges"><rect x="10" y="6" width="5" height="1" fill="#ffffff"/><rect x="10" y="7" width="5" height="1" fill="#ffffff"/><rect x="10" y="8" width="5" height="1" fill="#ffffff"/><rect x="10" y="9" width="5" height="1" fill="#ffffff"/><rect x="7" y="10" width="11" height="1" fill="#ffffff"/><rect x="8" y="11" width="9" height="1" fill="#ffffff"/><rect x="9" y="12" width="7" height="1" fill="#ffffff"/><rect x="10" y="13" width="5" height="1" fill="#ffffff"/><rect x="11" y="14" width="3" height="1" fill="#ffffff"/><rect x="12" y="15" width="1" height="1" fill="#ffffff"/><rect x="6" y="16" width="13" height="1" fill="#ffffff"/><rect x="5" y="17" width="14" height="1" fill="#ffffff"/><rect x="4" y="18" width="14" height="1" fill="#ffffff"/><rect x="4" y="19" width="13" height="1" fill="#ffffff"/><rect x="5" y="20" width="1" height="1" fill="#ffffff"/><rect x="7" y="20" width="1" height="1" fill="#ffffff"/><rect x="9" y="20" width="1" height="1" fill="#ffffff"/><rect x="11" y="20" width="1" height="1" fill="#ffffff"/><rect x="13" y="20" width="1" height="1" fill="#ffffff"/><rect x="15" y="20" width="1" height="1" fill="#ffffff"/><rect x="9" y="5" width="5" height="1" fill="#a0a0a0"/><rect x="9" y="6" width="5" height="1" fill="#a0a0a0"/><rect x="9" y="7" width="5" height="1" fill="#a0a0a0"/><rect x="9" y="8" width="5" height="1" fill="#a0a0a0"/><rect x="6" y="9" width="11" height="1" fill="#a0a0a0"/><rect x="7" y="10" width="9" height="1" fill="#a0a0a0"/><rect x="8" y="11" width="7" height="1" fill="#a0a0a0"/><rect x="9" y="12" width="5" height="1" fill="#a0a0a0"/><rect x="10" y="13" width="3" height="1" fill="#a0a0a0"/><rect x="11" y="14" width="1" height="1" fill="#a0a0a0"/><rect x="5" y="15" width="13" height="1" fill="#a0a0a0"/><rect x="4" y="16" width="14" height="1" fill="#a0a0a0"/><rect x="3" y="17" width="14" height="1" fill="#a0a0a0"/><rect x="3" y="18" width="13" height="1" fill="#a0a0a0"/><rect x="4" y="19" width="1" height="1" fill="#a0a0a0"/><rect x="6" y="19" width="1" height="1" fill="#a0a0a0"/><rect x="8" y="19" width="1" height="1" fill="#a0a0a0"/><rect x="10" y="19" width="1" height="1" fill="#a0a0a0"/><rect x="12" y="19" width="1" height="1" fill="#a0a0a0"/><rect x="14" y="19" width="1" height="1" fill="#a0a0a0"/></svg>
<svg class="a" style="left:149px;top:72px" width="21" height="21" shape-rendering="crispEdges"><rect x="12" y="6" width="1" height="1" fill="#ffffff"/><rect x="11" y="7" width="3" height="1" fill="#ffffff"/><rect x="10" y="8" width="5" height="1" fill="#ffffff"/><rect x="9" y="9" width="7" height="1" fill="#ffffff"/><rect x="8" y="10" width="9" height="1" fill="#ffffff"/><rect x="7" y="11" width="11" height="1" fill="#ffffff"/><rect x="10" y="12" width="5" height="1" fill="#ffffff"/><rect x="10" y="13" width="5" height="1" fill="#ffffff"/><rect x="10" y="14" width="5" height="1" fill="#ffffff"/><rect x="10" y="15" width="5" height="1" fill="#ffffff"/><rect x="6" y="16" width="13" height="1" fill="#ffffff"/><rect x="5" y="17" width="14" height="1" fill="#ffffff"/><rect x="4" y="18" width="14" height="1" fill="#ffffff"/><rect x="4" y="19" width="13" height="1" fill="#ffffff"/><rect x="5" y="20" width="1" height="1" fill="#ffffff"/><rect x="7" y="20" width="1" height="1" fill="#ffffff"/><rect x="9" y="20" width="1" height="1" fill="#ffffff"/><rect x="11" y="20" width="1" height="1" fill="#ffffff"/><rect x="13" y="20" width="1" height="1" fill="#ffffff"/><rect x="15" y="20" width="1" height="1" fill="#ffffff"/><rect x="11" y="5" width="1" height="1" fill="#a0a0a0"/><rect x="10" y="6" width="3" height="1" fill="#a0a0a0"/><rect x="9" y="7" width="5" height="1" fill="#a0a0a0"/><rect x="8" y="8" width="7" height="1" fill="#a0a0a0"/><rect x="7" y="9" width="9" height="1" fill="#a0a0a0"/><rect x="6" y="10" width="11" height="1" fill="#a0a0a0"/><rect x="9" y="11" width="5" height="1" fill="#a0a0a0"/><rect x="9" y="12" width="5" height="1" fill="#a0a0a0"/><rect x="9" y="13" width="5" height="1" fill="#a0a0a0"/><rect x="9" y="14" width="5" height="1" fill="#a0a0a0"/><rect x="5" y="15" width="13" height="1" fill="#a0a0a0"/><rect x="4" y="16" width="14" height="1" fill="#a0a0a0"/><rect x="3" y="17" width="14" height="1" fill="#a0a0a0"/><rect x="3" y="18" width="13" height="1" fill="#a0a0a0"/><rect x="4" y="19" width="1" height="1" fill="#a0a0a0"/><rect x="6" y="19" width="1" height="1" fill="#a0a0a0"/><rect x="8" y="19" width="1" height="1" fill="#a0a0a0"/><rect x="10" y="19" width="1" height="1" fill="#a0a0a0"/><rect x="12" y="19" width="1" height="1" fill="#a0a0a0"/><rect x="14" y="19" width="1" height="1" fill="#a0a0a0"/></svg>
<svg class="a" style="left:172px;top:72px" width="21" height="21" shape-rendering="crispEdges"><rect x="10" y="5" width="4" height="1" fill="#ffffff"/><rect x="9" y="6" width="2" height="1" fill="#ffffff"/><rect x="13" y="6" width="2" height="1" fill="#ffffff"/><rect x="8" y="7" width="2" height="1" fill="#ffffff"/><rect x="14" y="7" width="2" height="1" fill="#ffffff"/><rect x="14" y="8" width="2" height="1" fill="#ffffff"/><rect x="13" y="9" width="2" height="1" fill="#ffffff"/><rect x="12" y="10" width="2" height="1" fill="#ffffff"/><rect x="11" y="11" width="2" height="1" fill="#ffffff"/><rect x="11" y="12" width="2" height="1" fill="#ffffff"/><rect x="11" y="14" width="2" height="1" fill="#ffffff"/><rect x="11" y="15" width="2" height="1" fill="#ffffff"/><rect x="6" y="16" width="13" height="1" fill="#ffffff"/><rect x="5" y="17" width="14" height="1" fill="#ffffff"/><rect x="4" y="18" width="14" height="1" fill="#ffffff"/><rect x="4" y="19" width="13" height="1" fill="#ffffff"/><rect x="5" y="20" width="1" height="1" fill="#ffffff"/><rect x="7" y="20" width="1" height="1" fill="#ffffff"/><rect x="9" y="20" width="1" height="1" fill="#ffffff"/><rect x="11" y="20" width="1" height="1" fill="#ffffff"/><rect x="13" y="20" width="1" height="1" fill="#ffffff"/><rect x="15" y="20" width="1" height="1" fill="#ffffff"/><rect x="9" y="4" width="4" height="1" fill="#a0a0a0"/><rect x="8" y="5" width="2" height="1" fill="#a0a0a0"/><rect x="12" y="5" width="2" height="1" fill="#a0a0a0"/><rect x="7" y="6" width="2" height="1" fill="#a0a0a0"/><rect x="13" y="6" width="2" height="1" fill="#a0a0a0"/><rect x="13" y="7" width="2" height="1" fill="#a0a0a0"/><rect x="12" y="8" width="2" height="1" fill="#a0a0a0"/><rect x="11" y="9" width="2" height="1" fill="#a0a0a0"/><rect x="10" y="10" width="2" height="1" fill="#a0a0a0"/><rect x="10" y="11" width="2" height="1" fill="#a0a0a0"/><rect x="10" y="13" width="2" height="1" fill="#a0a0a0"/><rect x="10" y="14" width="2" height="1" fill="#a0a0a0"/><rect x="5" y="15" width="13" height="1" fill="#a0a0a0"/><rect x="4" y="16" width="14" height="1" fill="#a0a0a0"/><rect x="3" y="17" width="14" height="1" fill="#a0a0a0"/><rect x="3" y="18" width="13" height="1" fill="#a0a0a0"/><rect x="4" y="19" width="1" height="1" fill="#a0a0a0"/><rect x="6" y="19" width="1" height="1" fill="#a0a0a0"/><rect x="8" y="19" width="1" height="1" fill="#a0a0a0"/><rect x="10" y="19" width="1" height="1" fill="#a0a0a0"/><rect x="12" y="19" width="1" height="1" fill="#a0a0a0"/><rect x="14" y="19" width="1" height="1" fill="#a0a0a0"/></svg>
<svg class="a" style="left:195px;top:72px" width="21" height="21" shape-rendering="crispEdges"><rect x="8" y="6" width="7" height="1" fill="#ffffff"/><rect x="8" y="7" width="8" height="1" fill="#ffffff"/><rect x="8" y="8" width="9" height="1" fill="#ffffff"/><rect x="8" y="9" width="9" height="1" fill="#ffffff"/><rect x="8" y="10" width="9" height="1" fill="#ffffff"/><rect x="8" y="11" width="9" height="1" fill="#ffffff"/><rect x="8" y="12" width="9" height="1" fill="#ffffff"/><rect x="8" y="13" width="9" height="1" fill="#ffffff"/><rect x="8" y="14" width="9" height="1" fill="#ffffff"/><rect x="8" y="15" width="9" height="1" fill="#ffffff"/><rect x="6" y="16" width="13" height="1" fill="#ffffff"/><rect x="5" y="17" width="14" height="1" fill="#ffffff"/><rect x="4" y="18" width="14" height="1" fill="#ffffff"/><rect x="4" y="19" width="13" height="1" fill="#ffffff"/><rect x="5" y="20" width="1" height="1" fill="#ffffff"/><rect x="7" y="20" width="1" height="1" fill="#ffffff"/><rect x="9" y="20" width="1" height="1" fill="#ffffff"/><rect x="11" y="20" width="1" height="1" fill="#ffffff"/><rect x="13" y="20" width="1" height="1" fill="#ffffff"/><rect x="15" y="20" width="1" height="1" fill="#ffffff"/><rect x="7" y="5" width="7" height="1" fill="#a0a0a0"/><rect x="7" y="6" width="1" height="1" fill="#a0a0a0"/><rect x="8" y="6" width="5" height="1" fill="#ffffff"/><rect x="13" y="6" width="2" height="1" fill="#a0a0a0"/><rect x="7" y="7" width="1" height="1" fill="#a0a0a0"/><rect x="8" y="7" width="2" height="1" fill="#ffffff"/><rect x="10" y="7" width="2" height="1" fill="#a0a0a0"/><rect x="12" y="7" width="2" height="1" fill="#ffffff"/><rect x="14" y="7" width="2" height="1" fill="#a0a0a0"/><rect x="7" y="8" width="1" height="1" fill="#a0a0a0"/><rect x="8" y="8" width="1" height="1" fill="#ffffff"/><rect x="9" y="8" width="1" height="1" fill="#a0a0a0"/><rect x="10" y="8" width="2" height="1" fill="#ffffff"/><rect x="12" y="8" width="1" height="1" fill="#a0a0a0"/><rect x="13" y="8" width="2" height="1" fill="#ffffff"/><rect x="15" y="8" width="1" height="1" fill="#a0a0a0"/><rect x="7" y="9" width="1" height="1" fill="#a0a0a0"/><rect x="8" y="9" width="4" height="1" fill="#ffffff"/><rect x="12" y="9" width="1" height="1" fill="#a0a0a0"/><rect x="13" y="9" width="2" height="1" fill="#ffffff"/><rect x="15" y="9" width="1" height="1" fill="#a0a0a0"/><rect x="7" y="10" width="1" height="1" fill="#a0a0a0"/><rect x="8" y="10" width="3" height="1" fill="#ffffff"/><rect x="11" y="10" width="1" height="1" fill="#a0a0a0"/><rect x="12" y="10" width="3" height="1" fill="#ffffff"/><rect x="15" y="10" width="1" height="1" fill="#a0a0a0"/><rect x="7" y="11" width="1" height="1" fill="#a0a0a0"/><rect x="8" y="11" width="2" height="1" fill="#ffffff"/><rect x="10" y="11" width="1" height="1" fill="#a0a0a0"/><rect x="11" y="11" width="4" height="1" fill="#ffffff"/><rect x="15" y="11" width="1" height="1" fill="#a0a0a0"/><rect x="7" y="12" width="1" height="1" fill="#a0a0a0"/><rect x="8" y="12" width="1" height="1" fill="#ffffff"/><rect x="9" y="12" width="5" height="1" fill="#a0a0a0"/><rect x="14" y="12" width="1" height="1" fill="#ffffff"/><rect x="15" y="12" width="1" height="1" fill="#a0a0a0"/><rect x="7" y="13" width="1" height="1" fill="#a0a0a0"/><rect x="8" y="13" width="7" height="1" fill="#ffffff"/><rect x="15" y="13" width="1" height="1" fill="#a0a0a0"/><rect x="7" y="14" width="9" height="1" fill="#a0a0a0"/><rect x="5" y="15" width="13" height="1" fill="#a0a0a0"/><rect x="4" y="16" width="14" height="1" fill="#a0a0a0"/><rect x="3" y="17" width="14" height="1" fill="#a0a0a0"/><rect x="3" y="18" width="13" height="1" fill="#a0a0a0"/><rect x="4" y="19" width="1" height="1" fill="#a0a0a0"/><rect x="6" y="19" width="1" height="1" fill="#a0a0a0"/><rect x="8" y="19" width="1" height="1" fill="#a0a0a0"/><rect x="10" y="19" width="1" height="1" fill="#a0a0a0"/><rect x="12" y="19" width="1" height="1" fill="#a0a0a0"/><rect x="14" y="19" width="1" height="1" fill="#a0a0a0"/></svg>
<svg class="a" style="left:218px;top:72px" width="21" height="21" shape-rendering="crispEdges"><rect x="7" y="6" width="1" height="1" fill="#ffffff"/><rect x="11" y="6" width="1" height="1" fill="#ffffff"/><rect x="15" y="6" width="1" height="1" fill="#ffffff"/><rect x="8" y="7" width="1" height="1" fill="#ffffff"/><rect x="10" y="7" width="3" height="1" fill="#ffffff"/><rect x="14" y="7" width="1" height="1" fill="#ffffff"/><rect x="9" y="8" width="5" height="1" fill="#ffffff"/><rect x="9" y="9" width="6" height="1" fill="#ffffff"/><rect x="7" y="10" width="9" height="1" fill="#ffffff"/><rect x="9" y="11" width="6" height="1" fill="#ffffff"/><rect x="8" y="12" width="8" height="1" fill="#ffffff"/><rect x="7" y="13" width="1" height="1" fill="#ffffff"/><rect x="9" y="13" width="6" height="1" fill="#ffffff"/><rect x="16" y="13" width="1" height="1" fill="#ffffff"/><rect x="11" y="14" width="1" height="1" fill="#ffffff"/><rect x="6" y="16" width="13" height="1" fill="#ffffff"/><rect x="5" y="17" width="14" height="1" fill="#ffffff"/><rect x="4" y="18" width="14" height="1" fill="#ffffff"/><rect x="4" y="19" width="13" height="1" fill="#ffffff"/><rect x="5" y="20" width="1" height="1" fill="#ffffff"/><rect x="7" y="20" width="1" height="1" fill="#ffffff"/><rect x="9" y="20" width="1" height="1" fill="#ffffff"/><rect x="11" y="20" width="1" height="1" fill="#ffffff"/><rect x="13" y="20" width="1" height="1" fill="#ffffff"/><rect x="15" y="20" width="1" height="1" fill="#ffffff"/><rect x="6" y="5" width="1" height="1" fill="#a0a0a0"/><rect x="10" y="5" width="1" height="1" fill="#a0a0a0"/><rect x="14" y="5" width="1" height="1" fill="#a0a0a0"/><rect x="7" y="6" width="1" height="1" fill="#a0a0a0"/><rect x="9" y="6" width="3" height="1" fill="#a0a0a0"/><rect x="13" y="6" width="1" height="1" fill="#a0a0a0"/><rect x="8" y="7" width="1" height="1" fill="#a0a0a0"/><rect x="9" y="7" width="3" height="1" fill="#ffffff"/><rect x="12" y="7" width="1" height="1" fill="#a0a0a0"/><rect x="8" y="8" width="1" height="1" fill="#a0a0a0"/><rect x="9" y="8" width="4" height="1" fill="#ffffff"/><rect x="13" y="8" width="1" height="1" fill="#a0a0a0"/><rect x="6" y="9" width="3" height="1" fill="#a0a0a0"/><rect x="9" y="9" width="4" height="1" fill="#ffffff"/><rect x="13" y="9" width="2" height="1" fill="#a0a0a0"/><rect x="8" y="10" width="1" height="1" fill="#a0a0a0"/><rect x="9" y="10" width="4" height="1" fill="#ffffff"/><rect x="13" y="10" width="1" height="1" fill="#a0a0a0"/><rect x="7" y="11" width="2" height="1" fill="#a0a0a0"/><rect x="9" y="11" width="4" height="1" fill="#ffffff"/><rect x="13" y="11" width="2" height="1" fill="#a0a0a0"/><rect x="6" y="12" width="1" height="1" fill="#a0a0a0"/><rect x="8" y="12" width="6" height="1" fill="#a0a0a0"/><rect x="15" y="12" width="1" height="1" fill="#a0a0a0"/><rect x="10" y="13" width="1" height="1" fill="#a0a0a0"/><rect x="5" y="15" width="13" height="1" fill="#a0a0a0"/><rect x="4" y="16" width="14" height="1" fill="#a0a0a0"/><rect x="3" y="17" width="14" height="1" fill="#a0a0a0"/><rect x="3" y="18" width="13" height="1" fill="#a0a0a0"/><rect x="4" y="19" width="1" height="1" fill="#a0a0a0"/><rect x="6" y="19" width="1" height="1" fill="#a0a0a0"/><rect x="8" y="19" width="1" height="1" fill="#a0a0a0"/><rect x="10" y="19" width="1" height="1" fill="#a0a0a0"/><rect x="12" y="19" width="1" height="1" fill="#a0a0a0"/><rect x="14" y="19" width="1" height="1" fill="#a0a0a0"/></svg>
<svg class="a" style="left:252px;top:76px" width="14" height="17" shape-rendering="crispEdges"><rect x="1" y="1" width="13" height="1" fill="#ffffff"/><rect x="1" y="2" width="13" height="1" fill="#ffffff"/><rect x="1" y="3" width="13" height="1" fill="#ffffff"/><rect x="1" y="4" width="13" height="1" fill="#ffffff"/><rect x="1" y="5" width="13" height="1" fill="#ffffff"/><rect x="1" y="6" width="13" height="1" fill="#ffffff"/><rect x="1" y="7" width="13" height="1" fill="#ffffff"/><rect x="1" y="8" width="13" height="1" fill="#ffffff"/><rect x="1" y="9" width="13" height="1" fill="#ffffff"/><rect x="1" y="10" width="13" height="1" fill="#ffffff"/><rect x="1" y="11" width="13" height="1" fill="#ffffff"/><rect x="1" y="12" width="13" height="1" fill="#ffffff"/><rect x="1" y="13" width="13" height="1" fill="#ffffff"/><rect x="1" y="14" width="13" height="1" fill="#ffffff"/><rect x="1" y="15" width="13" height="1" fill="#ffffff"/><rect x="1" y="16" width="13" height="1" fill="#ffffff"/><rect x="0" y="0" width="13" height="1" fill="#a0a0a0"/><rect x="0" y="1" width="1" height="1" fill="#a0a0a0"/><rect x="1" y="1" width="1" height="1" fill="#ffffff"/><rect x="2" y="1" width="1" height="1" fill="#a0a0a0"/><rect x="3" y="1" width="2" height="1" fill="#ffffff"/><rect x="5" y="1" width="3" height="1" fill="#a0a0a0"/><rect x="8" y="1" width="1" height="1" fill="#ffffff"/><rect x="9" y="1" width="4" height="1" fill="#a0a0a0"/><rect x="0" y="2" width="1" height="1" fill="#a0a0a0"/><rect x="1" y="2" width="11" height="1" fill="#ffffff"/><rect x="12" y="2" width="1" height="1" fill="#a0a0a0"/><rect x="0" y="3" width="3" height="1" fill="#a0a0a0"/><rect x="3" y="3" width="1" height="1" fill="#ffffff"/><rect x="4" y="3" width="4" height="1" fill="#a0a0a0"/><rect x="8" y="3" width="2" height="1" fill="#ffffff"/><rect x="10" y="3" width="3" height="1" fill="#a0a0a0"/><rect x="0" y="4" width="1" height="1" fill="#a0a0a0"/><rect x="1" y="4" width="11" height="1" fill="#ffffff"/><rect x="12" y="4" width="1" height="1" fill="#a0a0a0"/><rect x="0" y="5" width="3" height="1" fill="#a0a0a0"/><rect x="3" y="5" width="1" height="1" fill="#ffffff"/><rect x="4" y="5" width="3" height="1" fill="#a0a0a0"/><rect x="7" y="5" width="2" height="1" fill="#ffffff"/><rect x="9" y="5" width="4" height="1" fill="#a0a0a0"/><rect x="0" y="6" width="1" height="1" fill="#a0a0a0"/><rect x="1" y="6" width="11" height="1" fill="#ffffff"/><rect x="12" y="6" width="1" height="1" fill="#a0a0a0"/><rect x="0" y="7" width="3" height="1" fill="#a0a0a0"/><rect x="3" y="7" width="1" height="1" fill="#ffffff"/><rect x="4" y="7" width="3" height="1" fill="#a0a0a0"/><rect x="7" y="7" width="1" height="1" fill="#ffffff"/><rect x="8" y="7" width="1" height="1" fill="#a0a0a0"/><rect x="9" y="7" width="1" height="1" fill="#ffffff"/><rect x="10" y="7" width="3" height="1" fill="#a0a0a0"/><rect x="0" y="8" width="1" height="1" fill="#a0a0a0"/><rect x="1" y="8" width="11" height="1" fill="#ffffff"/><rect x="12" y="8" width="1" height="1" fill="#a0a0a0"/><rect x="0" y="9" width="6" height="1" fill="#a0a0a0"/><rect x="6" y="9" width="1" height="1" fill="#ffffff"/><rect x="7" y="9" width="6" height="1" fill="#a0a0a0"/><rect x="0" y="10" width="1" height="1" fill="#a0a0a0"/><rect x="1" y="10" width="11" height="1" fill="#ffffff"/><rect x="12" y="10" width="1" height="1" fill="#a0a0a0"/><rect x="0" y="11" width="3" height="1" fill="#a0a0a0"/><rect x="3" y="11" width="1" height="1" fill="#ffffff"/><rect x="4" y="11" width="1" height="1" fill="#a0a0a0"/><rect x="5" y="11" width="1" height="1" fill="#ffffff"/><rect x="6" y="11" width="7" height="1" fill="#a0a0a0"/><rect x="0" y="12" width="1" height="1" fill="#a0a0a0"/><rect x="1" y="12" width="11" height="1" fill="#ffffff"/><rect x="12" y="12" width="1" height="1" fill="#a0a0a0"/><rect x="0" y="13" width="3" height="1" fill="#a0a0a0"/><rect x="3" y="13" width="1" height="1" fill="#ffffff"/><rect x="4" y="13" width="3" height="1" fill="#a0a0a0"/><rect x="7" y="13" width="2" height="1" fill="#ffffff"/><rect x="9" y="13" width="4" height="1" fill="#a0a0a0"/><rect x="0" y="14" width="1" height="1" fill="#a0a0a0"/><rect x="1" y="14" width="11" height="1" fill="#ffffff"/><rect x="12" y="14" width="1" height="1" fill="#a0a0a0"/><rect x="0" y="15" width="13" height="1" fill="#a0a0a0"/></svg>
<svg class="a" style="left:298px;top:79px" width="17" height="13" shape-rendering="crispEdges"><rect x="2" y="1" width="2" height="1" fill="#ffffff"/><rect x="5" y="1" width="1" height="1" fill="#ffffff"/><rect x="8" y="1" width="1" height="1" fill="#ffffff"/><rect x="11" y="1" width="4" height="1" fill="#ffffff"/><rect x="2" y="2" width="13" height="1" fill="#ffffff"/><rect x="2" y="3" width="13" height="1" fill="#ffffff"/><rect x="3" y="4" width="12" height="1" fill="#ffffff"/><rect x="2" y="5" width="13" height="1" fill="#ffffff"/><rect x="2" y="6" width="13" height="1" fill="#ffffff"/><rect x="2" y="7" width="12" height="1" fill="#ffffff"/><rect x="2" y="8" width="12" height="1" fill="#ffffff"/><rect x="15" y="8" width="1" height="1" fill="#ffffff"/><rect x="2" y="9" width="14" height="1" fill="#ffffff"/><rect x="1" y="10" width="14" height="1" fill="#ffffff"/><rect x="2" y="11" width="13" height="1" fill="#ffffff"/><rect x="2" y="12" width="1" height="1" fill="#ffffff"/><rect x="4" y="12" width="1" height="1" fill="#ffffff"/><rect x="6" y="12" width="1" height="1" fill="#ffffff"/><rect x="8" y="12" width="1" height="1" fill="#ffffff"/><rect x="10" y="12" width="1" height="1" fill="#ffffff"/><rect x="12" y="12" width="1" height="1" fill="#ffffff"/><rect x="1" y="0" width="2" height="1" fill="#a0a0a0"/><rect x="4" y="0" width="1" height="1" fill="#a0a0a0"/><rect x="7" y="0" width="1" height="1" fill="#a0a0a0"/><rect x="10" y="0" width="4" height="1" fill="#a0a0a0"/><rect x="1" y="1" width="13" height="1" fill="#a0a0a0"/><rect x="1" y="2" width="13" height="1" fill="#a0a0a0"/><rect x="2" y="3" width="12" height="1" fill="#a0a0a0"/><rect x="1" y="4" width="13" height="1" fill="#a0a0a0"/><rect x="1" y="5" width="13" height="1" fill="#a0a0a0"/><rect x="1" y="6" width="12" height="1" fill="#a0a0a0"/><rect x="1" y="7" width="12" height="1" fill="#a0a0a0"/><rect x="14" y="7" width="1" height="1" fill="#a0a0a0"/><rect x="1" y="8" width="14" height="1" fill="#a0a0a0"/><rect x="0" y="9" width="14" height="1" fill="#a0a0a0"/><rect x="1" y="10" width="13" height="1" fill="#a0a0a0"/><rect x="1" y="11" width="1" height="1" fill="#a0a0a0"/><rect x="3" y="11" width="1" height="1" fill="#a0a0a0"/><rect x="5" y="11" width="1" height="1" fill="#a0a0a0"/><rect x="7" y="11" width="1" height="1" fill="#a0a0a0"/><rect x="9" y="11" width="1" height="1" fill="#a0a0a0"/><rect x="11" y="11" width="1" height="1" fill="#a0a0a0"/></svg>
<svg class="a" style="left:341px;top:77px" width="12" height="14" shape-rendering="crispEdges"><rect x="1" y="1" width="7" height="1" fill="#ffffff"/><rect x="1" y="2" width="8" height="1" fill="#ffffff"/><rect x="1" y="3" width="9" height="1" fill="#ffffff"/><rect x="1" y="4" width="10" height="1" fill="#ffffff"/><rect x="1" y="5" width="10" height="1" fill="#ffffff"/><rect x="1" y="6" width="10" height="1" fill="#ffffff"/><rect x="1" y="7" width="10" height="1" fill="#ffffff"/><rect x="1" y="8" width="10" height="1" fill="#ffffff"/><rect x="1" y="9" width="10" height="1" fill="#ffffff"/><rect x="1" y="10" width="10" height="1" fill="#ffffff"/><rect x="1" y="11" width="10" height="1" fill="#ffffff"/><rect x="1" y="12" width="10" height="1" fill="#ffffff"/><rect x="1" y="13" width="10" height="1" fill="#ffffff"/><rect x="0" y="0" width="7" height="1" fill="#a0a0a0"/><rect x="0" y="1" width="1" height="1" fill="#a0a0a0"/><rect x="1" y="1" width="5" height="1" fill="#ffffff"/><rect x="6" y="1" width="2" height="1" fill="#a0a0a0"/><rect x="0" y="2" width="1" height="1" fill="#a0a0a0"/><rect x="1" y="2" width="5" height="1" fill="#ffffff"/><rect x="6" y="2" width="1" height="1" fill="#a0a0a0"/><rect x="7" y="2" width="1" height="1" fill="#ffffff"/><rect x="8" y="2" width="1" height="1" fill="#a0a0a0"/><rect x="0" y="3" width="1" height="1" fill="#a0a0a0"/><rect x="1" y="3" width="5" height="1" fill="#ffffff"/><rect x="6" y="3" width="4" height="1" fill="#a0a0a0"/><rect x="0" y="4" width="1" height="1" fill="#a0a0a0"/><rect x="1" y="4" width="8" height="1" fill="#ffffff"/><rect x="9" y="4" width="1" height="1" fill="#a0a0a0"/><rect x="0" y="5" width="1" height="1" fill="#a0a0a0"/><rect x="1" y="5" width="8" height="1" fill="#ffffff"/><rect x="9" y="5" width="1" height="1" fill="#a0a0a0"/><rect x="0" y="6" width="1" height="1" fill="#a0a0a0"/><rect x="1" y="6" width="8" height="1" fill="#ffffff"/><rect x="9" y="6" width="1" height="1" fill="#a0a0a0"/><rect x="0" y="7" width="1" height="1" fill="#a0a0a0"/><rect x="1" y="7" width="8" height="1" fill="#ffffff"/><rect x="9" y="7" width="1" height="1" fill="#a0a0a0"/><rect x="0" y="8" width="1" height="1" fill="#a0a0a0"/><rect x="1" y="8" width="8" height="1" fill="#ffffff"/><rect x="9" y="8" width="1" height="1" fill="#a0a0a0"/><rect x="0" y="9" width="1" height="1" fill="#a0a0a0"/><rect x="1" y="9" width="8" height="1" fill="#ffffff"/><rect x="9" y="9" width="1" height="1" fill="#a0a0a0"/><rect x="0" y="10" width="1" height="1" fill="#a0a0a0"/><rect x="1" y="10" width="8" height="1" fill="#ffffff"/><rect x="9" y="10" width="1" height="1" fill="#a0a0a0"/><rect x="0" y="11" width="1" height="1" fill="#a0a0a0"/><rect x="1" y="11" width="8" height="1" fill="#ffffff"/><rect x="9" y="11" width="1" height="1" fill="#a0a0a0"/><rect x="0" y="12" width="10" height="1" fill="#a0a0a0"/></svg>
<svg class="a" style="left:361px;top:78px" width="18" height="14" shape-rendering="crispEdges"><rect x="2" y="1" width="7" height="1" fill="#ffffff"/><rect x="2" y="2" width="8" height="1" fill="#ffffff"/><rect x="2" y="3" width="9" height="1" fill="#ffffff"/><rect x="2" y="4" width="10" height="1" fill="#ffffff"/><rect x="2" y="5" width="11" height="1" fill="#ffffff"/><rect x="2" y="6" width="10" height="1" fill="#ffffff"/><rect x="2" y="7" width="9" height="1" fill="#ffffff"/><rect x="2" y="8" width="8" height="1" fill="#ffffff"/><rect x="1" y="9" width="3" height="1" fill="#ffffff"/><rect x="6" y="9" width="3" height="1" fill="#ffffff"/><rect x="11" y="9" width="2" height="1" fill="#ffffff"/><rect x="15" y="9" width="1" height="1" fill="#ffffff"/><rect x="17" y="9" width="1" height="1" fill="#ffffff"/><rect x="1" y="10" width="1" height="1" fill="#ffffff"/><rect x="4" y="10" width="1" height="1" fill="#ffffff"/><rect x="6" y="10" width="1" height="1" fill="#ffffff"/><rect x="9" y="10" width="1" height="1" fill="#ffffff"/><rect x="11" y="10" width="1" height="1" fill="#ffffff"/><rect x="13" y="10" width="1" height="1" fill="#ffffff"/><rect x="15" y="10" width="3" height="1" fill="#ffffff"/><rect x="1" y="11" width="3" height="1" fill="#ffffff"/><rect x="6" y="11" width="3" height="1" fill="#ffffff"/><rect x="11" y="11" width="3" height="1" fill="#ffffff"/><rect x="15" y="11" width="1" height="1" fill="#ffffff"/><rect x="17" y="11" width="1" height="1" fill="#ffffff"/><rect x="1" y="12" width="1" height="1" fill="#ffffff"/><rect x="4" y="12" width="1" height="1" fill="#ffffff"/><rect x="6" y="12" width="1" height="1" fill="#ffffff"/><rect x="8" y="12" width="1" height="1" fill="#ffffff"/><rect x="11" y="12" width="1" height="1" fill="#ffffff"/><rect x="13" y="12" width="1" height="1" fill="#ffffff"/><rect x="15" y="12" width="1" height="1" fill="#ffffff"/><rect x="17" y="12" width="1" height="1" fill="#ffffff"/><rect x="1" y="13" width="3" height="1" fill="#ffffff"/><rect x="6" y="13" width="1" height="1" fill="#ffffff"/><rect x="9" y="13" width="1" height="1" fill="#ffffff"/><rect x="11" y="13" width="1" height="1" fill="#ffffff"/><rect x="13" y="13" width="1" height="1" fill="#ffffff"/><rect x="15" y="13" width="1" height="1" fill="#ffffff"/><rect x="17" y="13" width="1" height="1" fill="#ffffff"/><rect x="1" y="0" width="7" height="1" fill="#a0a0a0"/><rect x="1" y="1" width="8" height="1" fill="#a0a0a0"/><rect x="1" y="2" width="9" height="1" fill="#a0a0a0"/><rect x="1" y="3" width="10" height="1" fill="#a0a0a0"/><rect x="1" y="4" width="11" height="1" fill="#a0a0a0"/><rect x="1" y="5" width="10" height="1" fill="#a0a0a0"/><rect x="1" y="6" width="9" height="1" fill="#a0a0a0"/><rect x="1" y="7" width="8" height="1" fill="#a0a0a0"/><rect x="0" y="8" width="3" height="1" fill="#a0a0a0"/><rect x="5" y="8" width="3" height="1" fill="#a0a0a0"/><rect x="10" y="8" width="2" height="1" fill="#a0a0a0"/><rect x="14" y="8" width="1" height="1" fill="#a0a0a0"/><rect x="16" y="8" width="1" height="1" fill="#a0a0a0"/><rect x="0" y="9" width="1" height="1" fill="#a0a0a0"/><rect x="3" y="9" width="1" height="1" fill="#a0a0a0"/><rect x="5" y="9" width="1" height="1" fill="#a0a0a0"/><rect x="8" y="9" width="1" height="1" fill="#a0a0a0"/><rect x="10" y="9" width="1" height="1" fill="#a0a0a0"/><rect x="12" y="9" width="1" height="1" fill="#a0a0a0"/><rect x="14" y="9" width="3" height="1" fill="#a0a0a0"/><rect x="0" y="10" width="3" height="1" fill="#a0a0a0"/><rect x="5" y="10" width="3" height="1" fill="#a0a0a0"/><rect x="10" y="10" width="3" height="1" fill="#a0a0a0"/><rect x="14" y="10" width="1" height="1" fill="#a0a0a0"/><rect x="16" y="10" width="1" height="1" fill="#a0a0a0"/><rect x="0" y="11" width="1" height="1" fill="#a0a0a0"/><rect x="3" y="11" width="1" height="1" fill="#a0a0a0"/><rect x="5" y="11" width="1" height="1" fill="#a0a0a0"/><rect x="7" y="11" width="1" height="1" fill="#a0a0a0"/><rect x="10" y="11" width="1" height="1" fill="#a0a0a0"/><rect x="12" y="11" width="1" height="1" fill="#a0a0a0"/><rect x="14" y="11" width="1" height="1" fill="#a0a0a0"/><rect x="16" y="11" width="1" height="1" fill="#a0a0a0"/><rect x="0" y="12" width="3" height="1" fill="#a0a0a0"/><rect x="5" y="12" width="1" height="1" fill="#a0a0a0"/><rect x="8" y="12" width="1" height="1" fill="#a0a0a0"/><rect x="10" y="12" width="1" height="1" fill="#a0a0a0"/><rect x="12" y="12" width="1" height="1" fill="#a0a0a0"/><rect x="14" y="12" width="1" height="1" fill="#a0a0a0"/><rect x="16" y="12" width="1" height="1" fill="#a0a0a0"/></svg>
<svg class="a" style="left:386px;top:78px" width="17" height="14" shape-rendering="crispEdges"><rect x="4" y="1" width="3" height="1" fill="#ffffff"/><rect x="9" y="1" width="3" height="1" fill="#ffffff"/><rect x="6" y="2" width="1" height="1" fill="#ffffff"/><rect x="9" y="2" width="1" height="1" fill="#ffffff"/><rect x="1" y="3" width="3" height="1" fill="#ffffff"/><rect x="6" y="3" width="1" height="1" fill="#ffffff"/><rect x="9" y="3" width="1" height="1" fill="#ffffff"/><rect x="12" y="3" width="3" height="1" fill="#ffffff"/><rect x="4" y="4" width="1" height="1" fill="#ffffff"/><rect x="11" y="4" width="1" height="1" fill="#ffffff"/><rect x="7" y="6" width="3" height="1" fill="#ffffff"/><rect x="7" y="7" width="3" height="1" fill="#ffffff"/><rect x="7" y="8" width="3" height="1" fill="#ffffff"/><rect x="1" y="11" width="3" height="1" fill="#ffffff"/><rect x="6" y="11" width="4" height="1" fill="#ffffff"/><rect x="13" y="11" width="4" height="1" fill="#ffffff"/><rect x="1" y="12" width="1" height="1" fill="#ffffff"/><rect x="3" y="12" width="1" height="1" fill="#ffffff"/><rect x="6" y="12" width="1" height="1" fill="#ffffff"/><rect x="9" y="12" width="1" height="1" fill="#ffffff"/><rect x="13" y="12" width="1" height="1" fill="#ffffff"/><rect x="1" y="13" width="1" height="1" fill="#ffffff"/><rect x="3" y="13" width="4" height="1" fill="#ffffff"/><rect x="9" y="13" width="5" height="1" fill="#ffffff"/><rect x="3" y="0" width="3" height="1" fill="#a0a0a0"/><rect x="8" y="0" width="3" height="1" fill="#a0a0a0"/><rect x="5" y="1" width="1" height="1" fill="#a0a0a0"/><rect x="8" y="1" width="1" height="1" fill="#a0a0a0"/><rect x="0" y="2" width="3" height="1" fill="#a0a0a0"/><rect x="5" y="2" width="1" height="1" fill="#a0a0a0"/><rect x="8" y="2" width="1" height="1" fill="#a0a0a0"/><rect x="11" y="2" width="3" height="1" fill="#a0a0a0"/><rect x="3" y="3" width="1" height="1" fill="#a0a0a0"/><rect x="10" y="3" width="1" height="1" fill="#a0a0a0"/><rect x="6" y="5" width="3" height="1" fill="#a0a0a0"/><rect x="6" y="6" width="3" height="1" fill="#a0a0a0"/><rect x="6" y="7" width="3" height="1" fill="#a0a0a0"/><rect x="0" y="10" width="3" height="1" fill="#a0a0a0"/><rect x="5" y="10" width="4" height="1" fill="#a0a0a0"/><rect x="12" y="10" width="4" height="1" fill="#a0a0a0"/><rect x="0" y="11" width="1" height="1" fill="#a0a0a0"/><rect x="2" y="11" width="1" height="1" fill="#a0a0a0"/><rect x="5" y="11" width="1" height="1" fill="#a0a0a0"/><rect x="8" y="11" width="1" height="1" fill="#a0a0a0"/><rect x="12" y="11" width="1" height="1" fill="#a0a0a0"/><rect x="0" y="12" width="1" height="1" fill="#a0a0a0"/><rect x="2" y="12" width="4" height="1" fill="#a0a0a0"/><rect x="8" y="12" width="5" height="1" fill="#a0a0a0"/></svg>
<div class="a" style="left:409px;top:76px;width:14px;height:16px;background:#a0a0a0;box-shadow:1px 1px 0 #fff"></div>
<div class="a" style="left:523px;top:76px;width:16px;height:16px;background:#a0a0a0;box-shadow:1px 1px 0 #fff"></div>
<div class="a" style="left:546px;top:76px;width:16px;height:16px;background:#a0a0a0;box-shadow:1px 1px 0 #fff"></div>
<div class="a" style="left:63px;top:51px;width:14px;height:14px;background:#a0a0a0;box-shadow:1px 1px 0 #fff"></div>
<div class="a" style="left:275px;top:77px;width:14px;height:14px;background:#a0a0a0;box-shadow:1px 1px 0 #fff"></div>
<svg class="a" style="left:433px;top:77px" width="13" height="14" shape-rendering="crispEdges"><rect x="6" y="1" width="2" height="1" fill="#ffffff"/><rect x="5" y="2" width="4" height="1" fill="#ffffff"/><rect x="4" y="3" width="6" height="1" fill="#ffffff"/><rect x="3" y="4" width="8" height="1" fill="#ffffff"/><rect x="2" y="5" width="10" height="1" fill="#ffffff"/><rect x="1" y="6" width="12" height="1" fill="#ffffff"/><rect x="5" y="7" width="4" height="1" fill="#ffffff"/><rect x="5" y="8" width="4" height="1" fill="#ffffff"/><rect x="5" y="9" width="4" height="1" fill="#ffffff"/><rect x="5" y="10" width="4" height="1" fill="#ffffff"/><rect x="5" y="11" width="4" height="1" fill="#ffffff"/><rect x="5" y="12" width="4" height="1" fill="#ffffff"/><rect x="5" y="13" width="4" height="1" fill="#ffffff"/><rect x="5" y="0" width="2" height="1" fill="#a0a0a0"/><rect x="4" y="1" width="4" height="1" fill="#a0a0a0"/><rect x="3" y="2" width="6" height="1" fill="#a0a0a0"/><rect x="2" y="3" width="8" height="1" fill="#a0a0a0"/><rect x="1" y="4" width="10" height="1" fill="#a0a0a0"/><rect x="0" y="5" width="12" height="1" fill="#a0a0a0"/><rect x="4" y="6" width="4" height="1" fill="#a0a0a0"/><rect x="4" y="7" width="4" height="1" fill="#a0a0a0"/><rect x="4" y="8" width="4" height="1" fill="#a0a0a0"/><rect x="4" y="9" width="4" height="1" fill="#a0a0a0"/><rect x="4" y="10" width="4" height="1" fill="#a0a0a0"/><rect x="4" y="11" width="4" height="1" fill="#a0a0a0"/><rect x="4" y="12" width="4" height="1" fill="#a0a0a0"/></svg>
<svg class="a" style="left:456px;top:77px" width="13" height="14" shape-rendering="crispEdges"><rect x="5" y="1" width="4" height="1" fill="#ffffff"/><rect x="5" y="2" width="4" height="1" fill="#ffffff"/><rect x="5" y="3" width="4" height="1" fill="#ffffff"/><rect x="5" y="4" width="4" height="1" fill="#ffffff"/><rect x="5" y="5" width="4" height="1" fill="#ffffff"/><rect x="5" y="6" width="4" height="1" fill="#ffffff"/><rect x="5" y="7" width="4" height="1" fill="#ffffff"/><rect x="1" y="8" width="12" height="1" fill="#ffffff"/><rect x="2" y="9" width="10" height="1" fill="#ffffff"/><rect x="3" y="10" width="8" height="1" fill="#ffffff"/><rect x="4" y="11" width="6" height="1" fill="#ffffff"/><rect x="5" y="12" width="4" height="1" fill="#ffffff"/><rect x="6" y="13" width="2" height="1" fill="#ffffff"/><rect x="4" y="0" width="4" height="1" fill="#a0a0a0"/><rect x="4" y="1" width="4" height="1" fill="#a0a0a0"/><rect x="4" y="2" width="4" height="1" fill="#a0a0a0"/><rect x="4" y="3" width="4" height="1" fill="#a0a0a0"/><rect x="4" y="4" width="4" height="1" fill="#a0a0a0"/><rect x="4" y="5" width="4" height="1" fill="#a0a0a0"/><rect x="4" y="6" width="4" height="1" fill="#a0a0a0"/><rect x="0" y="7" width="12" height="1" fill="#a0a0a0"/><rect x="1" y="8" width="10" height="1" fill="#a0a0a0"/><rect x="2" y="9" width="8" height="1" fill="#a0a0a0"/><rect x="3" y="10" width="6" height="1" fill="#a0a0a0"/><rect x="4" y="11" width="4" height="1" fill="#a0a0a0"/><rect x="5" y="12" width="2" height="1" fill="#a0a0a0"/></svg>
<svg class="a" style="left:478px;top:76px" width="17" height="14" shape-rendering="crispEdges"><rect x="13" y="1" width="1" height="1" fill="#ffffff"/><rect x="13" y="2" width="1" height="1" fill="#ffffff"/><rect x="5" y="3" width="3" height="1" fill="#ffffff"/><rect x="11" y="3" width="5" height="1" fill="#ffffff"/><rect x="3" y="4" width="7" height="1" fill="#ffffff"/><rect x="13" y="4" width="1" height="1" fill="#ffffff"/><rect x="2" y="5" width="9" height="1" fill="#ffffff"/><rect x="13" y="5" width="1" height="1" fill="#ffffff"/><rect x="2" y="6" width="9" height="1" fill="#ffffff"/><rect x="2" y="7" width="10" height="1" fill="#ffffff"/><rect x="3" y="8" width="8" height="1" fill="#ffffff"/><rect x="3" y="9" width="9" height="1" fill="#ffffff"/><rect x="5" y="10" width="4" height="1" fill="#ffffff"/><rect x="10" y="10" width="3" height="1" fill="#ffffff"/><rect x="11" y="11" width="3" height="1" fill="#ffffff"/><rect x="12" y="12" width="3" height="1" fill="#ffffff"/><rect x="13" y="13" width="2" height="1" fill="#ffffff"/><rect x="12" y="0" width="1" height="1" fill="#a0a0a0"/><rect x="12" y="1" width="1" height="1" fill="#a0a0a0"/><rect x="4" y="2" width="3" height="1" fill="#a0a0a0"/><rect x="10" y="2" width="5" height="1" fill="#a0a0a0"/><rect x="2" y="3" width="1" height="1" fill="#a0a0a0"/><rect x="3" y="3" width="2" height="1" fill="#ffffff"/><rect x="5" y="3" width="4" height="1" fill="#a0a0a0"/><rect x="12" y="3" width="1" height="1" fill="#a0a0a0"/><rect x="1" y="4" width="1" height="1" fill="#a0a0a0"/><rect x="2" y="4" width="2" height="1" fill="#ffffff"/><rect x="4" y="4" width="4" height="1" fill="#a0a0a0"/><rect x="8" y="4" width="1" height="1" fill="#ffffff"/><rect x="9" y="4" width="1" height="1" fill="#a0a0a0"/><rect x="12" y="4" width="1" height="1" fill="#a0a0a0"/><rect x="1" y="5" width="1" height="1" fill="#a0a0a0"/><rect x="2" y="5" width="1" height="1" fill="#ffffff"/><rect x="3" y="5" width="5" height="1" fill="#a0a0a0"/><rect x="8" y="5" width="1" height="1" fill="#ffffff"/><rect x="9" y="5" width="1" height="1" fill="#a0a0a0"/><rect x="1" y="6" width="10" height="1" fill="#a0a0a0"/><rect x="2" y="7" width="8" height="1" fill="#a0a0a0"/><rect x="2" y="8" width="9" height="1" fill="#a0a0a0"/><rect x="4" y="9" width="4" height="1" fill="#a0a0a0"/><rect x="9" y="9" width="3" height="1" fill="#a0a0a0"/><rect x="10" y="10" width="3" height="1" fill="#a0a0a0"/><rect x="11" y="11" width="3" height="1" fill="#a0a0a0"/><rect x="12" y="12" width="2" height="1" fill="#a0a0a0"/></svg>
<svg class="a" style="left:502px;top:77px" width="15" height="12" shape-rendering="crispEdges"><rect x="9" y="1" width="5" height="1" fill="#ffffff"/><rect x="4" y="2" width="3" height="1" fill="#ffffff"/><rect x="3" y="3" width="5" height="1" fill="#ffffff"/><rect x="2" y="4" width="6" height="1" fill="#ffffff"/><rect x="2" y="5" width="7" height="1" fill="#ffffff"/><rect x="2" y="6" width="7" height="1" fill="#ffffff"/><rect x="3" y="7" width="6" height="1" fill="#ffffff"/><rect x="4" y="8" width="3" height="1" fill="#ffffff"/><rect x="8" y="8" width="2" height="1" fill="#ffffff"/><rect x="8" y="9" width="3" height="1" fill="#ffffff"/><rect x="9" y="10" width="3" height="1" fill="#ffffff"/><rect x="10" y="11" width="2" height="1" fill="#ffffff"/><rect x="8" y="0" width="5" height="1" fill="#a0a0a0"/><rect x="3" y="1" width="3" height="1" fill="#a0a0a0"/><rect x="2" y="2" width="1" height="1" fill="#a0a0a0"/><rect x="3" y="2" width="2" height="1" fill="#ffffff"/><rect x="5" y="2" width="2" height="1" fill="#a0a0a0"/><rect x="1" y="3" width="1" height="1" fill="#a0a0a0"/><rect x="2" y="3" width="1" height="1" fill="#ffffff"/><rect x="3" y="3" width="4" height="1" fill="#a0a0a0"/><rect x="1" y="4" width="7" height="1" fill="#a0a0a0"/><rect x="1" y="5" width="7" height="1" fill="#a0a0a0"/><rect x="2" y="6" width="6" height="1" fill="#a0a0a0"/><rect x="3" y="7" width="3" height="1" fill="#a0a0a0"/><rect x="7" y="7" width="2" height="1" fill="#a0a0a0"/><rect x="7" y="8" width="3" height="1" fill="#a0a0a0"/><rect x="8" y="9" width="3" height="1" fill="#a0a0a0"/><rect x="9" y="10" width="2" height="1" fill="#a0a0a0"/></svg>
<svg class="a" style="left:592px;top:76px" width="17" height="16" shape-rendering="crispEdges"><rect x="7" y="1" width="4" height="1" fill="#ffffff"/><rect x="7" y="2" width="4" height="1" fill="#ffffff"/><rect x="7" y="3" width="4" height="1" fill="#ffffff"/><rect x="7" y="4" width="4" height="1" fill="#ffffff"/><rect x="7" y="5" width="4" height="1" fill="#ffffff"/><rect x="5" y="6" width="8" height="1" fill="#ffffff"/><rect x="6" y="7" width="10" height="1" fill="#ffffff"/><rect x="8" y="8" width="8" height="1" fill="#ffffff"/><rect x="7" y="9" width="9" height="1" fill="#ffffff"/><rect x="6" y="10" width="9" height="1" fill="#ffffff"/><rect x="5" y="11" width="9" height="1" fill="#ffffff"/><rect x="4" y="12" width="9" height="1" fill="#ffffff"/><rect x="3" y="13" width="9" height="1" fill="#ffffff"/><rect x="2" y="14" width="9" height="1" fill="#ffffff"/><rect x="2" y="15" width="8" height="1" fill="#ffffff"/><rect x="6" y="0" width="4" height="1" fill="#a0a0a0"/><rect x="6" y="1" width="4" height="1" fill="#a0a0a0"/><rect x="6" y="2" width="4" height="1" fill="#a0a0a0"/><rect x="6" y="3" width="4" height="1" fill="#a0a0a0"/><rect x="6" y="4" width="4" height="1" fill="#a0a0a0"/><rect x="4" y="5" width="8" height="1" fill="#a0a0a0"/><rect x="5" y="6" width="10" height="1" fill="#a0a0a0"/><rect x="7" y="7" width="8" height="1" fill="#a0a0a0"/><rect x="6" y="8" width="9" height="1" fill="#a0a0a0"/><rect x="5" y="9" width="9" height="1" fill="#a0a0a0"/><rect x="4" y="10" width="9" height="1" fill="#a0a0a0"/><rect x="3" y="11" width="9" height="1" fill="#a0a0a0"/><rect x="2" y="12" width="9" height="1" fill="#a0a0a0"/><rect x="1" y="13" width="9" height="1" fill="#a0a0a0"/><rect x="1" y="14" width="8" height="1" fill="#a0a0a0"/></svg>
<svg class="a" style="left:615px;top:76px" width="16" height="17" shape-rendering="crispEdges"><rect x="6" y="1" width="4" height="1" fill="#ffffff"/><rect x="6" y="2" width="4" height="1" fill="#ffffff"/><rect x="6" y="3" width="4" height="1" fill="#ffffff"/><rect x="6" y="4" width="4" height="1" fill="#ffffff"/><rect x="6" y="5" width="4" height="1" fill="#ffffff"/><rect x="5" y="6" width="6" height="1" fill="#ffffff"/><rect x="6" y="7" width="4" height="1" fill="#ffffff"/><rect x="6" y="8" width="4" height="1" fill="#ffffff"/><rect x="3" y="9" width="13" height="1" fill="#ffffff"/><rect x="2" y="10" width="14" height="1" fill="#ffffff"/><rect x="1" y="11" width="15" height="1" fill="#ffffff"/><rect x="1" y="12" width="15" height="1" fill="#ffffff"/><rect x="1" y="13" width="15" height="1" fill="#ffffff"/><rect x="1" y="14" width="15" height="1" fill="#ffffff"/><rect x="1" y="15" width="14" height="1" fill="#ffffff"/><rect x="2" y="16" width="13" height="1" fill="#ffffff"/><rect x="5" y="0" width="4" height="1" fill="#a0a0a0"/><rect x="5" y="1" width="4" height="1" fill="#a0a0a0"/><rect x="5" y="2" width="4" height="1" fill="#a0a0a0"/><rect x="5" y="3" width="4" height="1" fill="#a0a0a0"/><rect x="5" y="4" width="4" height="1" fill="#a0a0a0"/><rect x="4" y="5" width="6" height="1" fill="#a0a0a0"/><rect x="5" y="6" width="4" height="1" fill="#a0a0a0"/><rect x="5" y="7" width="4" height="1" fill="#a0a0a0"/><rect x="2" y="8" width="13" height="1" fill="#a0a0a0"/><rect x="1" y="9" width="14" height="1" fill="#a0a0a0"/><rect x="0" y="10" width="15" height="1" fill="#a0a0a0"/><rect x="0" y="11" width="15" height="1" fill="#a0a0a0"/><rect x="0" y="12" width="15" height="1" fill="#a0a0a0"/><rect x="0" y="13" width="15" height="1" fill="#a0a0a0"/><rect x="0" y="14" width="14" height="1" fill="#a0a0a0"/><rect x="1" y="15" width="13" height="1" fill="#a0a0a0"/></svg>
<svg class="a" style="left:638px;top:76px" width="16" height="17" shape-rendering="crispEdges"><rect x="3" y="1" width="5" height="1" fill="#ffffff"/><rect x="11" y="1" width="4" height="1" fill="#ffffff"/><rect x="3" y="2" width="5" height="1" fill="#ffffff"/><rect x="11" y="2" width="4" height="1" fill="#ffffff"/><rect x="3" y="3" width="5" height="1" fill="#ffffff"/><rect x="11" y="3" width="4" height="1" fill="#ffffff"/><rect x="3" y="4" width="5" height="1" fill="#ffffff"/><rect x="11" y="4" width="4" height="1" fill="#ffffff"/><rect x="3" y="5" width="5" height="1" fill="#ffffff"/><rect x="11" y="5" width="4" height="1" fill="#ffffff"/><rect x="2" y="6" width="7" height="1" fill="#ffffff"/><rect x="10" y="6" width="6" height="1" fill="#ffffff"/><rect x="3" y="7" width="4" height="1" fill="#ffffff"/><rect x="9" y="7" width="1" height="1" fill="#ffffff"/><rect x="11" y="7" width="4" height="1" fill="#ffffff"/><rect x="3" y="8" width="3" height="1" fill="#ffffff"/><rect x="7" y="8" width="4" height="1" fill="#ffffff"/><rect x="12" y="8" width="3" height="1" fill="#ffffff"/><rect x="2" y="9" width="14" height="1" fill="#ffffff"/><rect x="1" y="10" width="14" height="1" fill="#ffffff"/><rect x="1" y="11" width="15" height="1" fill="#ffffff"/><rect x="1" y="12" width="15" height="1" fill="#ffffff"/><rect x="1" y="13" width="15" height="1" fill="#ffffff"/><rect x="1" y="14" width="15" height="1" fill="#ffffff"/><rect x="1" y="15" width="14" height="1" fill="#ffffff"/><rect x="2" y="16" width="13" height="1" fill="#ffffff"/><rect x="2" y="0" width="5" height="1" fill="#a0a0a0"/><rect x="10" y="0" width="4" height="1" fill="#a0a0a0"/><rect x="2" y="1" width="5" height="1" fill="#a0a0a0"/><rect x="10" y="1" width="4" height="1" fill="#a0a0a0"/><rect x="2" y="2" width="5" height="1" fill="#a0a0a0"/><rect x="10" y="2" width="4" height="1" fill="#a0a0a0"/><rect x="2" y="3" width="5" height="1" fill="#a0a0a0"/><rect x="10" y="3" width="4" height="1" fill="#a0a0a0"/><rect x="2" y="4" width="5" height="1" fill="#a0a0a0"/><rect x="10" y="4" width="4" height="1" fill="#a0a0a0"/><rect x="1" y="5" width="7" height="1" fill="#a0a0a0"/><rect x="9" y="5" width="6" height="1" fill="#a0a0a0"/><rect x="2" y="6" width="4" height="1" fill="#a0a0a0"/><rect x="8" y="6" width="1" height="1" fill="#ffffff"/><rect x="10" y="6" width="4" height="1" fill="#a0a0a0"/><rect x="2" y="7" width="3" height="1" fill="#a0a0a0"/><rect x="6" y="7" width="4" height="1" fill="#ffffff"/><rect x="11" y="7" width="3" height="1" fill="#a0a0a0"/><rect x="1" y="8" width="14" height="1" fill="#a0a0a0"/><rect x="0" y="9" width="14" height="1" fill="#a0a0a0"/><rect x="0" y="10" width="15" height="1" fill="#a0a0a0"/><rect x="0" y="11" width="15" height="1" fill="#a0a0a0"/><rect x="0" y="12" width="15" height="1" fill="#a0a0a0"/><rect x="0" y="13" width="15" height="1" fill="#a0a0a0"/><rect x="0" y="14" width="14" height="1" fill="#a0a0a0"/><rect x="1" y="15" width="13" height="1" fill="#a0a0a0"/></svg>
<svg class="a" style="left:17px;top:77px" width="14" height="14" shape-rendering="crispEdges"><rect x="0" y="0" width="14" height="1" fill="#008000"/><rect x="0" y="1" width="14" height="1" fill="#008000"/><rect x="0" y="2" width="8" height="1" fill="#008000"/><rect x="8" y="2" width="1" height="1" fill="#00ff00"/><rect x="9" y="2" width="1" height="1" fill="#ffffff"/><rect x="10" y="2" width="3" height="1" fill="#008000"/><rect x="13" y="2" width="1" height="1" fill="#ffffff"/><rect x="0" y="3" width="8" height="1" fill="#008000"/><rect x="8" y="3" width="1" height="1" fill="#00ff00"/><rect x="9" y="3" width="1" height="1" fill="#ffffff"/><rect x="10" y="3" width="3" height="1" fill="#008000"/><rect x="13" y="3" width="1" height="1" fill="#ffffff"/><rect x="0" y="4" width="7" height="1" fill="#008000"/><rect x="7" y="4" width="1" height="1" fill="#00ff00"/><rect x="8" y="4" width="1" height="1" fill="#008000"/><rect x="9" y="4" width="5" height="1" fill="#ffffff"/><rect x="0" y="5" width="7" height="1" fill="#008000"/><rect x="7" y="5" width="1" height="1" fill="#00ff00"/><rect x="8" y="5" width="1" height="1" fill="#008000"/><rect x="9" y="5" width="1" height="1" fill="#ffffff"/><rect x="10" y="5" width="3" height="1" fill="#008000"/><rect x="13" y="5" width="1" height="1" fill="#ffffff"/><rect x="0" y="6" width="7" height="1" fill="#008000"/><rect x="7" y="6" width="1" height="1" fill="#00ff00"/><rect x="8" y="6" width="1" height="1" fill="#008000"/><rect x="9" y="6" width="1" height="1" fill="#ffffff"/><rect x="10" y="6" width="3" height="1" fill="#008000"/><rect x="13" y="6" width="1" height="1" fill="#ffffff"/><rect x="0" y="7" width="6" height="1" fill="#008000"/><rect x="6" y="7" width="1" height="1" fill="#00ff00"/><rect x="7" y="7" width="7" height="1" fill="#008000"/><rect x="0" y="8" width="6" height="1" fill="#008000"/><rect x="6" y="8" width="1" height="1" fill="#00ff00"/><rect x="7" y="8" width="7" height="1" fill="#008000"/><rect x="0" y="9" width="5" height="1" fill="#008000"/><rect x="5" y="9" width="1" height="1" fill="#00ff00"/><rect x="6" y="9" width="8" height="1" fill="#008000"/><rect x="0" y="10" width="5" height="1" fill="#008000"/><rect x="5" y="10" width="1" height="1" fill="#00ff00"/><rect x="6" y="10" width="8" height="1" fill="#008000"/><rect x="0" y="11" width="4" height="1" fill="#008000"/><rect x="4" y="11" width="1" height="1" fill="#00ff00"/><rect x="5" y="11" width="9" height="1" fill="#008000"/><rect x="0" y="12" width="1" height="1" fill="#008000"/><rect x="1" y="12" width="4" height="1" fill="#00ff00"/><rect x="5" y="12" width="9" height="1" fill="#008000"/><rect x="0" y="13" width="14" height="1" fill="#008000"/></svg>
<svg class="a" style="left:40px;top:77px" width="14" height="14" shape-rendering="crispEdges"><rect x="0" y="0" width="14" height="1" fill="#008000"/><rect x="0" y="1" width="14" height="1" fill="#008000"/><rect x="0" y="2" width="1" height="1" fill="#008000"/><rect x="1" y="2" width="4" height="1" fill="#00ff00"/><rect x="5" y="2" width="9" height="1" fill="#008000"/><rect x="0" y="3" width="5" height="1" fill="#008000"/><rect x="5" y="3" width="1" height="1" fill="#00ff00"/><rect x="6" y="3" width="8" height="1" fill="#008000"/><rect x="0" y="4" width="5" height="1" fill="#008000"/><rect x="5" y="4" width="1" height="1" fill="#00ff00"/><rect x="6" y="4" width="8" height="1" fill="#008000"/><rect x="0" y="5" width="6" height="1" fill="#008000"/><rect x="6" y="5" width="1" height="1" fill="#00ff00"/><rect x="7" y="5" width="7" height="1" fill="#008000"/><rect x="0" y="6" width="6" height="1" fill="#008000"/><rect x="6" y="6" width="1" height="1" fill="#00ff00"/><rect x="7" y="6" width="2" height="1" fill="#008000"/><rect x="9" y="6" width="1" height="1" fill="#ffffff"/><rect x="10" y="6" width="4" height="1" fill="#008000"/><rect x="0" y="7" width="7" height="1" fill="#008000"/><rect x="7" y="7" width="1" height="1" fill="#00ff00"/><rect x="8" y="7" width="1" height="1" fill="#008000"/><rect x="9" y="7" width="1" height="1" fill="#ffffff"/><rect x="10" y="7" width="4" height="1" fill="#008000"/><rect x="0" y="8" width="7" height="1" fill="#008000"/><rect x="7" y="8" width="1" height="1" fill="#00ff00"/><rect x="8" y="8" width="1" height="1" fill="#008000"/><rect x="9" y="8" width="1" height="1" fill="#ffffff"/><rect x="10" y="8" width="4" height="1" fill="#008000"/><rect x="0" y="9" width="8" height="1" fill="#008000"/><rect x="8" y="9" width="1" height="1" fill="#00ff00"/><rect x="9" y="9" width="1" height="1" fill="#ffffff"/><rect x="10" y="9" width="4" height="1" fill="#008000"/><rect x="0" y="10" width="8" height="1" fill="#008000"/><rect x="8" y="10" width="1" height="1" fill="#00ff00"/><rect x="9" y="10" width="1" height="1" fill="#ffffff"/><rect x="10" y="10" width="4" height="1" fill="#008000"/><rect x="0" y="11" width="8" height="1" fill="#008000"/><rect x="8" y="11" width="1" height="1" fill="#00ff00"/><rect x="9" y="11" width="4" height="1" fill="#ffffff"/><rect x="13" y="11" width="1" height="1" fill="#008000"/><rect x="0" y="12" width="9" height="1" fill="#008000"/><rect x="9" y="12" width="5" height="1" fill="#00ff00"/><rect x="0" y="13" width="14" height="1" fill="#008000"/></svg>
<svg class="a" style="left:63px;top:77px" width="14" height="14" shape-rendering="crispEdges"><rect x="0" y="0" width="14" height="1" fill="#008000"/><rect x="0" y="1" width="9" height="1" fill="#008000"/><rect x="9" y="1" width="3" height="1" fill="#ffffff"/><rect x="12" y="1" width="2" height="1" fill="#008000"/><rect x="0" y="2" width="1" height="1" fill="#008000"/><rect x="1" y="2" width="5" height="1" fill="#00ff00"/><rect x="6" y="2" width="6" height="1" fill="#008000"/><rect x="12" y="2" width="1" height="1" fill="#ffffff"/><rect x="13" y="2" width="1" height="1" fill="#008000"/><rect x="0" y="3" width="5" height="1" fill="#008000"/><rect x="5" y="3" width="1" height="1" fill="#00ff00"/><rect x="6" y="3" width="5" height="1" fill="#008000"/><rect x="11" y="3" width="1" height="1" fill="#ffffff"/><rect x="12" y="3" width="2" height="1" fill="#008000"/><rect x="0" y="4" width="5" height="1" fill="#008000"/><rect x="5" y="4" width="1" height="1" fill="#00ff00"/><rect x="6" y="4" width="4" height="1" fill="#008000"/><rect x="10" y="4" width="1" height="1" fill="#ffffff"/><rect x="11" y="4" width="3" height="1" fill="#008000"/><rect x="0" y="5" width="5" height="1" fill="#008000"/><rect x="5" y="5" width="1" height="1" fill="#00ff00"/><rect x="6" y="5" width="3" height="1" fill="#008000"/><rect x="9" y="5" width="4" height="1" fill="#ffffff"/><rect x="13" y="5" width="1" height="1" fill="#008000"/><rect x="0" y="6" width="6" height="1" fill="#008000"/><rect x="6" y="6" width="1" height="1" fill="#00ff00"/><rect x="7" y="6" width="7" height="1" fill="#008000"/><rect x="0" y="7" width="6" height="1" fill="#008000"/><rect x="6" y="7" width="7" height="1" fill="#00ff00"/><rect x="13" y="7" width="1" height="1" fill="#008000"/><rect x="0" y="8" width="6" height="1" fill="#008000"/><rect x="6" y="8" width="1" height="1" fill="#00ff00"/><rect x="7" y="8" width="7" height="1" fill="#008000"/><rect x="0" y="9" width="5" height="1" fill="#008000"/><rect x="5" y="9" width="1" height="1" fill="#00ff00"/><rect x="6" y="9" width="2" height="1" fill="#008000"/><rect x="8" y="9" width="1" height="1" fill="#ffffff"/><rect x="9" y="9" width="1" height="1" fill="#008000"/><rect x="10" y="9" width="3" height="1" fill="#ffffff"/><rect x="13" y="9" width="1" height="1" fill="#008000"/><rect x="0" y="10" width="5" height="1" fill="#008000"/><rect x="5" y="10" width="1" height="1" fill="#00ff00"/><rect x="6" y="10" width="2" height="1" fill="#008000"/><rect x="8" y="10" width="1" height="1" fill="#ffffff"/><rect x="9" y="10" width="1" height="1" fill="#008000"/><rect x="10" y="10" width="1" height="1" fill="#ffffff"/><rect x="11" y="10" width="1" height="1" fill="#008000"/><rect x="12" y="10" width="1" height="1" fill="#ffffff"/><rect x="13" y="10" width="1" height="1" fill="#008000"/><rect x="0" y="11" width="5" height="1" fill="#008000"/><rect x="5" y="11" width="1" height="1" fill="#00ff00"/><rect x="6" y="11" width="2" height="1" fill="#008000"/><rect x="8" y="11" width="1" height="1" fill="#ffffff"/><rect x="9" y="11" width="1" height="1" fill="#008000"/><rect x="10" y="11" width="1" height="1" fill="#ffffff"/><rect x="11" y="11" width="1" height="1" fill="#008000"/><rect x="12" y="11" width="1" height="1" fill="#ffffff"/><rect x="13" y="11" width="1" height="1" fill="#008000"/><rect x="0" y="12" width="1" height="1" fill="#008000"/><rect x="1" y="12" width="5" height="1" fill="#00ff00"/><rect x="6" y="12" width="2" height="1" fill="#008000"/><rect x="8" y="12" width="1" height="1" fill="#ffffff"/><rect x="9" y="12" width="1" height="1" fill="#008000"/><rect x="10" y="12" width="1" height="1" fill="#ffffff"/><rect x="11" y="12" width="1" height="1" fill="#008000"/><rect x="12" y="12" width="1" height="1" fill="#ffffff"/><rect x="13" y="12" width="1" height="1" fill="#008000"/><rect x="0" y="13" width="14" height="1" fill="#008000"/></svg>
<svg class="a" style="left:86px;top:77px" width="14" height="14" shape-rendering="crispEdges"><rect x="0" y="0" width="14" height="1" fill="#008000"/><rect x="0" y="1" width="14" height="1" fill="#008000"/><rect x="0" y="2" width="1" height="1" fill="#008000"/><rect x="1" y="2" width="4" height="1" fill="#00ff00"/><rect x="5" y="2" width="3" height="1" fill="#008000"/><rect x="8" y="2" width="5" height="1" fill="#ffff00"/><rect x="13" y="2" width="1" height="1" fill="#008000"/><rect x="0" y="3" width="5" height="1" fill="#008000"/><rect x="5" y="3" width="1" height="1" fill="#00ff00"/><rect x="6" y="3" width="1" height="1" fill="#008000"/><rect x="7" y="3" width="1" height="1" fill="#ffff00"/><rect x="8" y="3" width="6" height="1" fill="#008000"/><rect x="0" y="4" width="5" height="1" fill="#008000"/><rect x="5" y="4" width="1" height="1" fill="#00ff00"/><rect x="6" y="4" width="1" height="1" fill="#008000"/><rect x="7" y="4" width="1" height="1" fill="#ffff00"/><rect x="8" y="4" width="6" height="1" fill="#008000"/><rect x="0" y="5" width="6" height="1" fill="#008000"/><rect x="6" y="5" width="1" height="1" fill="#00ff00"/><rect x="7" y="5" width="1" height="1" fill="#ffff00"/><rect x="8" y="5" width="6" height="1" fill="#008000"/><rect x="0" y="6" width="6" height="1" fill="#008000"/><rect x="6" y="6" width="1" height="1" fill="#ffff00"/><rect x="7" y="6" width="1" height="1" fill="#00ff00"/><rect x="8" y="6" width="6" height="1" fill="#008000"/><rect x="0" y="7" width="6" height="1" fill="#008000"/><rect x="6" y="7" width="1" height="1" fill="#ffff00"/><rect x="7" y="7" width="1" height="1" fill="#00ff00"/><rect x="8" y="7" width="6" height="1" fill="#008000"/><rect x="0" y="8" width="6" height="1" fill="#008000"/><rect x="6" y="8" width="1" height="1" fill="#ffff00"/><rect x="7" y="8" width="1" height="1" fill="#008000"/><rect x="8" y="8" width="1" height="1" fill="#00ff00"/><rect x="9" y="8" width="5" height="1" fill="#008000"/><rect x="0" y="9" width="5" height="1" fill="#008000"/><rect x="5" y="9" width="1" height="1" fill="#ffff00"/><rect x="6" y="9" width="2" height="1" fill="#008000"/><rect x="8" y="9" width="1" height="1" fill="#00ff00"/><rect x="9" y="9" width="5" height="1" fill="#008000"/><rect x="0" y="10" width="5" height="1" fill="#008000"/><rect x="5" y="10" width="1" height="1" fill="#ffff00"/><rect x="6" y="10" width="3" height="1" fill="#008000"/><rect x="9" y="10" width="1" height="1" fill="#00ff00"/><rect x="10" y="10" width="4" height="1" fill="#008000"/><rect x="0" y="11" width="5" height="1" fill="#008000"/><rect x="5" y="11" width="1" height="1" fill="#ffff00"/><rect x="6" y="11" width="3" height="1" fill="#008000"/><rect x="9" y="11" width="1" height="1" fill="#00ff00"/><rect x="10" y="11" width="4" height="1" fill="#008000"/><rect x="0" y="12" width="1" height="1" fill="#008000"/><rect x="1" y="12" width="4" height="1" fill="#ffff00"/><rect x="5" y="12" width="4" height="1" fill="#008000"/><rect x="9" y="12" width="4" height="1" fill="#00ff00"/><rect x="13" y="12" width="1" height="1" fill="#008000"/><rect x="0" y="13" width="14" height="1" fill="#008000"/></svg>
<svg class="a" style="left:38px;top:50px" width="16" height="14" shape-rendering="crispEdges"><rect x="10" y="0" width="4" height="1" fill="#000000"/><rect x="9" y="1" width="1" height="1" fill="#000000"/><rect x="14" y="1" width="1" height="1" fill="#000000"/><rect x="14" y="2" width="2" height="1" fill="#000000"/><rect x="13" y="3" width="3" height="1" fill="#000000"/><rect x="1" y="4" width="4" height="1" fill="#000000"/><rect x="0" y="5" width="1" height="1" fill="#000000"/><rect x="1" y="5" width="1" height="1" fill="#ffff00"/><rect x="2" y="5" width="1" height="1" fill="#ffffff"/><rect x="3" y="5" width="1" height="1" fill="#ffff00"/><rect x="4" y="5" width="1" height="1" fill="#ffffff"/><rect x="5" y="5" width="1" height="1" fill="#000000"/><rect x="0" y="6" width="1" height="1" fill="#000000"/><rect x="1" y="6" width="1" height="1" fill="#ffffff"/><rect x="2" y="6" width="1" height="1" fill="#ffff00"/><rect x="3" y="6" width="1" height="1" fill="#ffffff"/><rect x="4" y="6" width="1" height="1" fill="#ffff00"/><rect x="5" y="6" width="8" height="1" fill="#000000"/><rect x="0" y="7" width="1" height="1" fill="#000000"/><rect x="1" y="7" width="1" height="1" fill="#ffff00"/><rect x="2" y="7" width="1" height="1" fill="#ffffff"/><rect x="3" y="7" width="1" height="1" fill="#ffff00"/><rect x="4" y="7" width="1" height="1" fill="#ffffff"/><rect x="5" y="7" width="1" height="1" fill="#ffff00"/><rect x="6" y="7" width="1" height="1" fill="#ffffff"/><rect x="7" y="7" width="1" height="1" fill="#ffff00"/><rect x="8" y="7" width="1" height="1" fill="#ffffff"/><rect x="9" y="7" width="1" height="1" fill="#ffff00"/><rect x="10" y="7" width="1" height="1" fill="#ffffff"/><rect x="11" y="7" width="1" height="1" fill="#ffff00"/><rect x="12" y="7" width="1" height="1" fill="#000000"/><rect x="0" y="8" width="1" height="1" fill="#000000"/><rect x="1" y="8" width="1" height="1" fill="#ffffff"/><rect x="2" y="8" width="1" height="1" fill="#ffff00"/><rect x="3" y="8" width="1" height="1" fill="#ffffff"/><rect x="4" y="8" width="1" height="1" fill="#ffff00"/><rect x="5" y="8" width="11" height="1" fill="#000000"/><rect x="0" y="9" width="1" height="1" fill="#000000"/><rect x="1" y="9" width="1" height="1" fill="#ffff00"/><rect x="2" y="9" width="1" height="1" fill="#ffffff"/><rect x="3" y="9" width="1" height="1" fill="#ffff00"/><rect x="4" y="9" width="1" height="1" fill="#000000"/><rect x="5" y="9" width="9" height="1" fill="#808000"/><rect x="14" y="9" width="1" height="1" fill="#000000"/><rect x="0" y="10" width="1" height="1" fill="#000000"/><rect x="1" y="10" width="1" height="1" fill="#ffffff"/><rect x="2" y="10" width="1" height="1" fill="#ffff00"/><rect x="3" y="10" width="1" height="1" fill="#000000"/><rect x="4" y="10" width="9" height="1" fill="#808000"/><rect x="13" y="10" width="1" height="1" fill="#000000"/><rect x="0" y="11" width="1" height="1" fill="#000000"/><rect x="1" y="11" width="1" height="1" fill="#ffff00"/><rect x="2" y="11" width="1" height="1" fill="#000000"/><rect x="3" y="11" width="9" height="1" fill="#808000"/><rect x="12" y="11" width="1" height="1" fill="#000000"/><rect x="0" y="12" width="2" height="1" fill="#000000"/><rect x="2" y="12" width="9" height="1" fill="#808000"/><rect x="11" y="12" width="1" height="1" fill="#000000"/><rect x="0" y="13" width="12" height="1" fill="#000000"/></svg>
<svg class="a" style="left:86px;top:51px" width="14" height="13" shape-rendering="crispEdges"><rect x="4" y="0" width="10" height="1" fill="#000000"/><rect x="4" y="1" width="1" height="1" fill="#000000"/><rect x="5" y="1" width="1" height="1" fill="#808000"/><rect x="6" y="1" width="1" height="1" fill="#000000"/><rect x="7" y="1" width="5" height="1" fill="#ffffff"/><rect x="12" y="1" width="2" height="1" fill="#000000"/><rect x="4" y="2" width="1" height="1" fill="#000000"/><rect x="5" y="2" width="1" height="1" fill="#808000"/><rect x="6" y="2" width="6" height="1" fill="#000000"/><rect x="12" y="2" width="1" height="1" fill="#808000"/><rect x="13" y="2" width="1" height="1" fill="#000000"/><rect x="0" y="3" width="11" height="1" fill="#000000"/><rect x="11" y="3" width="2" height="1" fill="#808000"/><rect x="13" y="3" width="1" height="1" fill="#000000"/><rect x="0" y="4" width="1" height="1" fill="#000000"/><rect x="1" y="4" width="1" height="1" fill="#808000"/><rect x="2" y="4" width="1" height="1" fill="#000000"/><rect x="3" y="4" width="4" height="1" fill="#c0c0c0"/><rect x="7" y="4" width="1" height="1" fill="#000000"/><rect x="8" y="4" width="1" height="1" fill="#ffffff"/><rect x="9" y="4" width="1" height="1" fill="#000000"/><rect x="10" y="4" width="3" height="1" fill="#808000"/><rect x="13" y="4" width="1" height="1" fill="#000000"/><rect x="0" y="5" width="1" height="1" fill="#000000"/><rect x="1" y="5" width="1" height="1" fill="#808000"/><rect x="2" y="5" width="1" height="1" fill="#000000"/><rect x="3" y="5" width="1" height="1" fill="#c0c0c0"/><rect x="4" y="5" width="2" height="1" fill="#000000"/><rect x="6" y="5" width="1" height="1" fill="#c0c0c0"/><rect x="7" y="5" width="3" height="1" fill="#000000"/><rect x="10" y="5" width="3" height="1" fill="#808000"/><rect x="13" y="5" width="1" height="1" fill="#000000"/><rect x="0" y="6" width="1" height="1" fill="#000000"/><rect x="1" y="6" width="1" height="1" fill="#808000"/><rect x="2" y="6" width="1" height="1" fill="#000000"/><rect x="3" y="6" width="4" height="1" fill="#c0c0c0"/><rect x="7" y="6" width="1" height="1" fill="#000000"/><rect x="8" y="6" width="1" height="1" fill="#808000"/><rect x="9" y="6" width="1" height="1" fill="#000000"/><rect x="10" y="6" width="3" height="1" fill="#808000"/><rect x="13" y="6" width="1" height="1" fill="#000000"/><rect x="0" y="7" width="1" height="1" fill="#000000"/><rect x="1" y="7" width="1" height="1" fill="#808000"/><rect x="2" y="7" width="6" height="1" fill="#000000"/><rect x="8" y="7" width="1" height="1" fill="#808000"/><rect x="9" y="7" width="1" height="1" fill="#000000"/><rect x="10" y="7" width="3" height="1" fill="#808000"/><rect x="13" y="7" width="1" height="1" fill="#000000"/><rect x="0" y="8" width="1" height="1" fill="#000000"/><rect x="1" y="8" width="8" height="1" fill="#808000"/><rect x="9" y="8" width="1" height="1" fill="#000000"/><rect x="10" y="8" width="2" height="1" fill="#808000"/><rect x="12" y="8" width="1" height="1" fill="#000000"/><rect x="0" y="9" width="1" height="1" fill="#000000"/><rect x="1" y="9" width="2" height="1" fill="#808000"/><rect x="3" y="9" width="5" height="1" fill="#000000"/><rect x="8" y="9" width="1" height="1" fill="#808000"/><rect x="9" y="9" width="1" height="1" fill="#000000"/><rect x="10" y="9" width="1" height="1" fill="#808000"/><rect x="11" y="9" width="1" height="1" fill="#000000"/><rect x="0" y="10" width="1" height="1" fill="#000000"/><rect x="1" y="10" width="2" height="1" fill="#808000"/><rect x="3" y="10" width="3" height="1" fill="#000000"/><rect x="6" y="10" width="1" height="1" fill="#ffffff"/><rect x="7" y="10" width="1" height="1" fill="#000000"/><rect x="8" y="10" width="1" height="1" fill="#808000"/><rect x="9" y="10" width="2" height="1" fill="#000000"/><rect x="0" y="11" width="1" height="1" fill="#000000"/><rect x="1" y="11" width="2" height="1" fill="#808000"/><rect x="3" y="11" width="3" height="1" fill="#000000"/><rect x="6" y="11" width="1" height="1" fill="#ffffff"/><rect x="7" y="11" width="1" height="1" fill="#000000"/><rect x="8" y="11" width="1" height="1" fill="#808000"/><rect x="9" y="11" width="1" height="1" fill="#000000"/><rect x="0" y="12" width="10" height="1" fill="#000000"/></svg>
<svg class="a" style="left:108px;top:51px" width="17" height="13" shape-rendering="crispEdges"><rect x="4" y="0" width="10" height="1" fill="#000000"/><rect x="3" y="1" width="1" height="1" fill="#000000"/><rect x="4" y="1" width="8" height="1" fill="#ffffff"/><rect x="12" y="1" width="1" height="1" fill="#000000"/><rect x="3" y="2" width="1" height="1" fill="#000000"/><rect x="4" y="2" width="1" height="1" fill="#ffffff"/><rect x="5" y="2" width="6" height="1" fill="#000000"/><rect x="11" y="2" width="1" height="1" fill="#ffffff"/><rect x="12" y="2" width="1" height="1" fill="#000000"/><rect x="13" y="2" width="1" height="1" fill="#c0c0c0"/><rect x="14" y="2" width="1" height="1" fill="#000000"/><rect x="2" y="3" width="1" height="1" fill="#000000"/><rect x="3" y="3" width="8" height="1" fill="#ffffff"/><rect x="11" y="3" width="1" height="1" fill="#000000"/><rect x="12" y="3" width="1" height="1" fill="#c0c0c0"/><rect x="13" y="3" width="1" height="1" fill="#ffffff"/><rect x="14" y="3" width="1" height="1" fill="#c0c0c0"/><rect x="15" y="3" width="1" height="1" fill="#000000"/><rect x="1" y="4" width="12" height="1" fill="#000000"/><rect x="13" y="4" width="1" height="1" fill="#c0c0c0"/><rect x="14" y="4" width="1" height="1" fill="#ffffff"/><rect x="15" y="4" width="1" height="1" fill="#c0c0c0"/><rect x="16" y="4" width="1" height="1" fill="#000000"/><rect x="0" y="5" width="1" height="1" fill="#000000"/><rect x="1" y="5" width="12" height="1" fill="#ffffff"/><rect x="13" y="5" width="1" height="1" fill="#000000"/><rect x="14" y="5" width="1" height="1" fill="#c0c0c0"/><rect x="15" y="5" width="1" height="1" fill="#ffffff"/><rect x="16" y="5" width="1" height="1" fill="#000000"/><rect x="0" y="6" width="13" height="1" fill="#000000"/><rect x="13" y="6" width="1" height="1" fill="#ffffff"/><rect x="14" y="6" width="1" height="1" fill="#c0c0c0"/><rect x="15" y="6" width="1" height="1" fill="#000000"/><rect x="0" y="7" width="1" height="1" fill="#000000"/><rect x="1" y="7" width="11" height="1" fill="#c0c0c0"/><rect x="12" y="7" width="1" height="1" fill="#000000"/><rect x="13" y="7" width="1" height="1" fill="#c0c0c0"/><rect x="14" y="7" width="1" height="1" fill="#ffffff"/><rect x="15" y="7" width="1" height="1" fill="#c0c0c0"/><rect x="16" y="7" width="1" height="1" fill="#000000"/><rect x="0" y="8" width="1" height="1" fill="#000000"/><rect x="1" y="8" width="1" height="1" fill="#c0c0c0"/><rect x="2" y="8" width="5" height="1" fill="#ffffff"/><rect x="7" y="8" width="3" height="1" fill="#ffff00"/><rect x="10" y="8" width="2" height="1" fill="#ffffff"/><rect x="12" y="8" width="1" height="1" fill="#000000"/><rect x="13" y="8" width="1" height="1" fill="#ffffff"/><rect x="14" y="8" width="1" height="1" fill="#c0c0c0"/><rect x="15" y="8" width="1" height="1" fill="#000000"/><rect x="0" y="9" width="1" height="1" fill="#000000"/><rect x="1" y="9" width="11" height="1" fill="#c0c0c0"/><rect x="12" y="9" width="1" height="1" fill="#000000"/><rect x="13" y="9" width="1" height="1" fill="#c0c0c0"/><rect x="14" y="9" width="1" height="1" fill="#ffffff"/><rect x="15" y="9" width="1" height="1" fill="#c0c0c0"/><rect x="16" y="9" width="1" height="1" fill="#000000"/><rect x="0" y="10" width="13" height="1" fill="#000000"/><rect x="13" y="10" width="1" height="1" fill="#ffffff"/><rect x="14" y="10" width="1" height="1" fill="#c0c0c0"/><rect x="15" y="10" width="1" height="1" fill="#000000"/><rect x="1" y="11" width="1" height="1" fill="#000000"/><rect x="2" y="11" width="10" height="1" fill="#ffffff"/><rect x="12" y="11" width="1" height="1" fill="#000000"/><rect x="13" y="11" width="1" height="1" fill="#c0c0c0"/><rect x="14" y="11" width="1" height="1" fill="#000000"/><rect x="2" y="12" width="12" height="1" fill="#000000"/></svg>
<svg class="a" style="left:376px;top:50px" width="16" height="16" shape-rendering="crispEdges"><rect x="0" y="0" width="5" height="1" fill="#008000"/><rect x="5" y="0" width="1" height="1" fill="#ffffff"/><rect x="6" y="0" width="10" height="1" fill="#008000"/><rect x="0" y="1" width="5" height="1" fill="#008000"/><rect x="5" y="1" width="1" height="1" fill="#ffffff"/><rect x="6" y="1" width="10" height="1" fill="#008000"/><rect x="0" y="2" width="2" height="1" fill="#ffffff"/><rect x="2" y="2" width="3" height="1" fill="#008000"/><rect x="5" y="2" width="2" height="1" fill="#00ffff"/><rect x="7" y="2" width="6" height="1" fill="#008000"/><rect x="13" y="2" width="1" height="1" fill="#ffffff"/><rect x="14" y="2" width="2" height="1" fill="#008000"/><rect x="0" y="3" width="4" height="1" fill="#008000"/><rect x="4" y="3" width="5" height="1" fill="#00ffff"/><rect x="9" y="3" width="3" height="1" fill="#008000"/><rect x="12" y="3" width="1" height="1" fill="#ffffff"/><rect x="13" y="3" width="3" height="1" fill="#008000"/><rect x="0" y="4" width="1" height="1" fill="#008000"/><rect x="1" y="4" width="1" height="1" fill="#ffffff"/><rect x="2" y="4" width="2" height="1" fill="#00ffff"/><rect x="4" y="4" width="1" height="1" fill="#0000ff"/><rect x="5" y="4" width="1" height="1" fill="#ffff00"/><rect x="6" y="4" width="1" height="1" fill="#0000ff"/><rect x="7" y="4" width="1" height="1" fill="#ffff00"/><rect x="8" y="4" width="2" height="1" fill="#00ffff"/><rect x="10" y="4" width="6" height="1" fill="#008000"/><rect x="0" y="5" width="1" height="1" fill="#008000"/><rect x="1" y="5" width="2" height="1" fill="#00ffff"/><rect x="3" y="5" width="1" height="1" fill="#ffff00"/><rect x="4" y="5" width="4" height="1" fill="#c0c0c0"/><rect x="8" y="5" width="1" height="1" fill="#ffff00"/><rect x="9" y="5" width="1" height="1" fill="#00ffff"/><rect x="10" y="5" width="6" height="1" fill="#008000"/><rect x="0" y="6" width="1" height="1" fill="#008000"/><rect x="1" y="6" width="1" height="1" fill="#00ffff"/><rect x="2" y="6" width="1" height="1" fill="#0000ff"/><rect x="3" y="6" width="1" height="1" fill="#c0c0c0"/><rect x="4" y="6" width="4" height="1" fill="#808080"/><rect x="8" y="6" width="1" height="1" fill="#c0c0c0"/><rect x="9" y="6" width="1" height="1" fill="#0000ff"/><rect x="10" y="6" width="1" height="1" fill="#00ffff"/><rect x="11" y="6" width="5" height="1" fill="#008000"/><rect x="0" y="7" width="2" height="1" fill="#ff00ff"/><rect x="2" y="7" width="1" height="1" fill="#ffff00"/><rect x="3" y="7" width="6" height="1" fill="#808080"/><rect x="9" y="7" width="1" height="1" fill="#ffff00"/><rect x="10" y="7" width="1" height="1" fill="#ffffff"/><rect x="11" y="7" width="2" height="1" fill="#ff00ff"/><rect x="13" y="7" width="1" height="1" fill="#ffffff"/><rect x="14" y="7" width="2" height="1" fill="#ff00ff"/><rect x="0" y="8" width="1" height="1" fill="#008000"/><rect x="1" y="8" width="1" height="1" fill="#00ffff"/><rect x="2" y="8" width="1" height="1" fill="#0000ff"/><rect x="3" y="8" width="1" height="1" fill="#c0c0c0"/><rect x="4" y="8" width="4" height="1" fill="#808080"/><rect x="8" y="8" width="1" height="1" fill="#c0c0c0"/><rect x="9" y="8" width="1" height="1" fill="#0000ff"/><rect x="10" y="8" width="1" height="1" fill="#00ffff"/><rect x="11" y="8" width="5" height="1" fill="#008000"/><rect x="0" y="9" width="1" height="1" fill="#008000"/><rect x="1" y="9" width="2" height="1" fill="#00ffff"/><rect x="3" y="9" width="1" height="1" fill="#ffff00"/><rect x="4" y="9" width="4" height="1" fill="#c0c0c0"/><rect x="8" y="9" width="1" height="1" fill="#ffff00"/><rect x="9" y="9" width="2" height="1" fill="#00ffff"/><rect x="11" y="9" width="5" height="1" fill="#008000"/><rect x="0" y="10" width="1" height="1" fill="#008000"/><rect x="1" y="10" width="1" height="1" fill="#ffffff"/><rect x="2" y="10" width="2" height="1" fill="#00ffff"/><rect x="4" y="10" width="1" height="1" fill="#0000ff"/><rect x="5" y="10" width="1" height="1" fill="#ffff00"/><rect x="6" y="10" width="1" height="1" fill="#0000ff"/><rect x="7" y="10" width="1" height="1" fill="#ffff00"/><rect x="8" y="10" width="2" height="1" fill="#000000"/><rect x="10" y="10" width="6" height="1" fill="#008000"/><rect x="0" y="11" width="2" height="1" fill="#008000"/><rect x="2" y="11" width="6" height="1" fill="#00ffff"/><rect x="8" y="11" width="1" height="1" fill="#008000"/><rect x="9" y="11" width="1" height="1" fill="#000000"/><rect x="10" y="11" width="1" height="1" fill="#ffffff"/><rect x="11" y="11" width="1" height="1" fill="#000000"/><rect x="12" y="11" width="4" height="1" fill="#008000"/><rect x="0" y="12" width="5" height="1" fill="#008000"/><rect x="5" y="12" width="1" height="1" fill="#ffffff"/><rect x="6" y="12" width="4" height="1" fill="#008000"/><rect x="10" y="12" width="1" height="1" fill="#000000"/><rect x="11" y="12" width="1" height="1" fill="#ffffff"/><rect x="12" y="12" width="1" height="1" fill="#000000"/><rect x="13" y="12" width="3" height="1" fill="#008000"/><rect x="0" y="13" width="5" height="1" fill="#008000"/><rect x="5" y="13" width="1" height="1" fill="#ffffff"/><rect x="6" y="13" width="5" height="1" fill="#008000"/><rect x="11" y="13" width="3" height="1" fill="#000000"/><rect x="14" y="13" width="2" height="1" fill="#008000"/><rect x="0" y="14" width="5" height="1" fill="#008000"/><rect x="5" y="14" width="1" height="1" fill="#ffffff"/><rect x="6" y="14" width="6" height="1" fill="#008000"/><rect x="12" y="14" width="3" height="1" fill="#000000"/><rect x="15" y="14" width="1" height="1" fill="#008000"/><rect x="0" y="15" width="5" height="1" fill="#008000"/><rect x="5" y="15" width="1" height="1" fill="#ffffff"/><rect x="6" y="15" width="10" height="1" fill="#008000"/></svg>
<svg class="a" style="left:399px;top:50px" width="17" height="16" shape-rendering="crispEdges"><rect x="0" y="0" width="17" height="1" fill="#008000"/><rect x="0" y="1" width="2" height="1" fill="#008000"/><rect x="2" y="1" width="5" height="1" fill="#ffff00"/><rect x="7" y="1" width="3" height="1" fill="#008000"/><rect x="10" y="1" width="1" height="1" fill="#ffff00"/><rect x="11" y="1" width="3" height="1" fill="#000000"/><rect x="14" y="1" width="1" height="1" fill="#ffff00"/><rect x="15" y="1" width="2" height="1" fill="#008000"/><rect x="0" y="2" width="1" height="1" fill="#008000"/><rect x="1" y="2" width="1" height="1" fill="#ffff00"/><rect x="2" y="2" width="5" height="1" fill="#000000"/><rect x="7" y="2" width="1" height="1" fill="#ffff00"/><rect x="8" y="2" width="2" height="1" fill="#008000"/><rect x="10" y="2" width="1" height="1" fill="#ffff00"/><rect x="11" y="2" width="3" height="1" fill="#000000"/><rect x="14" y="2" width="1" height="1" fill="#ffff00"/><rect x="15" y="2" width="2" height="1" fill="#008000"/><rect x="0" y="3" width="1" height="1" fill="#008000"/><rect x="1" y="3" width="1" height="1" fill="#ffff00"/><rect x="2" y="3" width="3" height="1" fill="#000000"/><rect x="5" y="3" width="7" height="1" fill="#ff00ff"/><rect x="12" y="3" width="2" height="1" fill="#000000"/><rect x="14" y="3" width="1" height="1" fill="#ffff00"/><rect x="15" y="3" width="2" height="1" fill="#008000"/><rect x="0" y="4" width="6" height="1" fill="#ff00ff"/><rect x="6" y="4" width="1" height="1" fill="#000000"/><rect x="7" y="4" width="1" height="1" fill="#ffff00"/><rect x="8" y="4" width="2" height="1" fill="#008000"/><rect x="10" y="4" width="1" height="1" fill="#ffff00"/><rect x="11" y="4" width="1" height="1" fill="#008000"/><rect x="12" y="4" width="1" height="1" fill="#ff00ff"/><rect x="13" y="4" width="2" height="1" fill="#ffff00"/><rect x="15" y="4" width="2" height="1" fill="#008000"/><rect x="0" y="5" width="1" height="1" fill="#008000"/><rect x="1" y="5" width="1" height="1" fill="#ffff00"/><rect x="2" y="5" width="5" height="1" fill="#000000"/><rect x="7" y="5" width="1" height="1" fill="#ffff00"/><rect x="8" y="5" width="4" height="1" fill="#008000"/><rect x="12" y="5" width="1" height="1" fill="#ff00ff"/><rect x="13" y="5" width="4" height="1" fill="#008000"/><rect x="0" y="6" width="2" height="1" fill="#008000"/><rect x="2" y="6" width="5" height="1" fill="#ffff00"/><rect x="7" y="6" width="5" height="1" fill="#008000"/><rect x="12" y="6" width="1" height="1" fill="#ff00ff"/><rect x="13" y="6" width="4" height="1" fill="#008000"/><rect x="0" y="7" width="12" height="1" fill="#008000"/><rect x="12" y="7" width="1" height="1" fill="#ff00ff"/><rect x="13" y="7" width="4" height="1" fill="#008000"/><rect x="0" y="8" width="11" height="1" fill="#008000"/><rect x="11" y="8" width="1" height="1" fill="#ffff00"/><rect x="12" y="8" width="1" height="1" fill="#ff00ff"/><rect x="13" y="8" width="1" height="1" fill="#ffff00"/><rect x="14" y="8" width="3" height="1" fill="#008000"/><rect x="0" y="9" width="3" height="1" fill="#008000"/><rect x="3" y="9" width="1" height="1" fill="#ffff00"/><rect x="4" y="9" width="2" height="1" fill="#000000"/><rect x="6" y="9" width="1" height="1" fill="#ffff00"/><rect x="7" y="9" width="3" height="1" fill="#008000"/><rect x="10" y="9" width="1" height="1" fill="#ffff00"/><rect x="11" y="9" width="1" height="1" fill="#000000"/><rect x="12" y="9" width="1" height="1" fill="#ff00ff"/><rect x="13" y="9" width="1" height="1" fill="#000000"/><rect x="14" y="9" width="1" height="1" fill="#ffff00"/><rect x="15" y="9" width="2" height="1" fill="#008000"/><rect x="0" y="10" width="4" height="1" fill="#ff00ff"/><rect x="4" y="10" width="2" height="1" fill="#000000"/><rect x="6" y="10" width="7" height="1" fill="#ff00ff"/><rect x="13" y="10" width="1" height="1" fill="#000000"/><rect x="14" y="10" width="1" height="1" fill="#ffff00"/><rect x="15" y="10" width="2" height="1" fill="#008000"/><rect x="0" y="11" width="3" height="1" fill="#008000"/><rect x="3" y="11" width="1" height="1" fill="#ffff00"/><rect x="4" y="11" width="2" height="1" fill="#000000"/><rect x="6" y="11" width="1" height="1" fill="#ffff00"/><rect x="7" y="11" width="3" height="1" fill="#008000"/><rect x="10" y="11" width="1" height="1" fill="#ffff00"/><rect x="11" y="11" width="3" height="1" fill="#000000"/><rect x="14" y="11" width="1" height="1" fill="#ffff00"/><rect x="15" y="11" width="2" height="1" fill="#008000"/><rect x="0" y="12" width="3" height="1" fill="#008000"/><rect x="3" y="12" width="1" height="1" fill="#ffff00"/><rect x="4" y="12" width="2" height="1" fill="#000000"/><rect x="6" y="12" width="1" height="1" fill="#ffff00"/><rect x="7" y="12" width="4" height="1" fill="#008000"/><rect x="11" y="12" width="3" height="1" fill="#ffff00"/><rect x="14" y="12" width="3" height="1" fill="#008000"/><rect x="0" y="13" width="3" height="1" fill="#008000"/><rect x="3" y="13" width="1" height="1" fill="#ffff00"/><rect x="4" y="13" width="2" height="1" fill="#000000"/><rect x="6" y="13" width="1" height="1" fill="#ffff00"/><rect x="7" y="13" width="10" height="1" fill="#008000"/><rect x="0" y="14" width="17" height="1" fill="#008000"/><rect x="0" y="15" width="17" height="1" fill="#008000"/></svg>
<svg class="a" style="left:423px;top:50px" width="14" height="12" shape-rendering="crispEdges"><rect x="10" y="0" width="2" height="1" fill="#ff0000"/><rect x="10" y="1" width="2" height="1" fill="#ff0000"/><rect x="8" y="2" width="6" height="1" fill="#ff0000"/><rect x="2" y="3" width="1" height="1" fill="#ffff00"/><rect x="4" y="3" width="1" height="1" fill="#ffff00"/><rect x="6" y="3" width="1" height="1" fill="#ffff00"/><rect x="8" y="3" width="6" height="1" fill="#ff0000"/><rect x="1" y="4" width="7" height="1" fill="#000000"/><rect x="10" y="4" width="2" height="1" fill="#ff0000"/><rect x="0" y="5" width="1" height="1" fill="#ffff00"/><rect x="1" y="5" width="7" height="1" fill="#000000"/><rect x="8" y="5" width="1" height="1" fill="#ffff00"/><rect x="10" y="5" width="2" height="1" fill="#ff0000"/><rect x="1" y="6" width="7" height="1" fill="#000000"/><rect x="0" y="7" width="1" height="1" fill="#ffff00"/><rect x="1" y="7" width="7" height="1" fill="#000000"/><rect x="8" y="7" width="1" height="1" fill="#ffff00"/><rect x="1" y="8" width="7" height="1" fill="#000000"/><rect x="0" y="9" width="1" height="1" fill="#ffff00"/><rect x="1" y="9" width="7" height="1" fill="#000000"/><rect x="8" y="9" width="1" height="1" fill="#ffff00"/><rect x="1" y="10" width="7" height="1" fill="#000000"/><rect x="2" y="11" width="1" height="1" fill="#ffff00"/><rect x="4" y="11" width="1" height="1" fill="#ffff00"/><rect x="6" y="11" width="1" height="1" fill="#ffff00"/></svg>
<svg class="a" style="left:446px;top:50px" width="16" height="16" shape-rendering="crispEdges"><rect x="10" y="0" width="2" height="1" fill="#ff0000"/><rect x="10" y="1" width="2" height="1" fill="#ff0000"/><rect x="8" y="2" width="6" height="1" fill="#ff0000"/><rect x="2" y="3" width="1" height="1" fill="#ffff00"/><rect x="4" y="3" width="1" height="1" fill="#ffff00"/><rect x="6" y="3" width="1" height="1" fill="#ffff00"/><rect x="8" y="3" width="6" height="1" fill="#ff0000"/><rect x="1" y="4" width="7" height="1" fill="#000000"/><rect x="10" y="4" width="2" height="1" fill="#ff0000"/><rect x="0" y="5" width="1" height="1" fill="#ffff00"/><rect x="1" y="5" width="7" height="1" fill="#000000"/><rect x="8" y="5" width="1" height="1" fill="#ffff00"/><rect x="10" y="5" width="2" height="1" fill="#ff0000"/><rect x="1" y="6" width="7" height="1" fill="#000000"/><rect x="0" y="7" width="1" height="1" fill="#ffff00"/><rect x="1" y="7" width="6" height="1" fill="#000000"/><rect x="7" y="7" width="8" height="1" fill="#ffffff"/><rect x="1" y="8" width="6" height="1" fill="#000000"/><rect x="7" y="8" width="1" height="1" fill="#ffffff"/><rect x="8" y="8" width="2" height="1" fill="#000000"/><rect x="10" y="8" width="1" height="1" fill="#ffffff"/><rect x="11" y="8" width="3" height="1" fill="#000000"/><rect x="14" y="8" width="1" height="1" fill="#ffffff"/><rect x="0" y="9" width="1" height="1" fill="#ffff00"/><rect x="1" y="9" width="6" height="1" fill="#000000"/><rect x="7" y="9" width="8" height="1" fill="#ffffff"/><rect x="1" y="10" width="6" height="1" fill="#000000"/><rect x="7" y="10" width="1" height="1" fill="#ffffff"/><rect x="8" y="10" width="3" height="1" fill="#000000"/><rect x="11" y="10" width="2" height="1" fill="#ffffff"/><rect x="13" y="10" width="1" height="1" fill="#000000"/><rect x="14" y="10" width="1" height="1" fill="#ffffff"/><rect x="2" y="11" width="1" height="1" fill="#ffff00"/><rect x="4" y="11" width="1" height="1" fill="#ffff00"/><rect x="6" y="11" width="1" height="1" fill="#ffff00"/><rect x="7" y="11" width="8" height="1" fill="#ffffff"/><rect x="7" y="12" width="1" height="1" fill="#ffffff"/><rect x="8" y="12" width="2" height="1" fill="#000000"/><rect x="10" y="12" width="1" height="1" fill="#ffffff"/><rect x="11" y="12" width="1" height="1" fill="#000000"/><rect x="12" y="12" width="1" height="1" fill="#ffffff"/><rect x="13" y="12" width="1" height="1" fill="#000000"/><rect x="14" y="12" width="1" height="1" fill="#ffffff"/><rect x="7" y="13" width="8" height="1" fill="#ffffff"/><rect x="7" y="14" width="1" height="1" fill="#ffffff"/><rect x="8" y="14" width="6" height="1" fill="#000000"/><rect x="14" y="14" width="1" height="1" fill="#ffffff"/><rect x="7" y="15" width="8" height="1" fill="#ffffff"/></svg>
<svg class="a" style="left:353px;top:51px" width="16" height="14" shape-rendering="crispEdges"><rect x="0" y="0" width="3" height="1" fill="#ff0000"/><rect x="4" y="0" width="3" height="1" fill="#ff0000"/><rect x="8" y="0" width="8" height="1" fill="#ff0000"/><rect x="0" y="1" width="1" height="1" fill="#ff0000"/><rect x="3" y="1" width="2" height="1" fill="#ff0000"/><rect x="7" y="1" width="1" height="1" fill="#ff0000"/><rect x="10" y="1" width="1" height="1" fill="#ff0000"/><rect x="14" y="1" width="1" height="1" fill="#ff0000"/><rect x="0" y="2" width="3" height="1" fill="#ff0000"/><rect x="4" y="2" width="3" height="1" fill="#ff0000"/><rect x="8" y="2" width="1" height="1" fill="#ff0000"/><rect x="10" y="2" width="3" height="1" fill="#ff0000"/><rect x="14" y="2" width="1" height="1" fill="#ff0000"/><rect x="0" y="3" width="1" height="1" fill="#ff0000"/><rect x="2" y="3" width="1" height="1" fill="#ff0000"/><rect x="4" y="3" width="1" height="1" fill="#ff0000"/><rect x="9" y="3" width="2" height="1" fill="#ff0000"/><rect x="14" y="3" width="1" height="1" fill="#ff0000"/><rect x="0" y="4" width="1" height="1" fill="#ff0000"/><rect x="3" y="4" width="6" height="1" fill="#ff0000"/><rect x="10" y="4" width="3" height="1" fill="#ff0000"/><rect x="14" y="4" width="1" height="1" fill="#ff0000"/><rect x="5" y="8" width="5" height="1" fill="#b00000"/><rect x="4" y="9" width="7" height="1" fill="#b00000"/><rect x="3" y="10" width="9" height="1" fill="#ff0000"/><rect x="2" y="11" width="11" height="1" fill="#ff0000"/><rect x="2" y="12" width="11" height="1" fill="#ff0000"/><rect x="3" y="13" width="9" height="1" fill="#ff0000"/></svg>
<svg class="a" style="left:485px;top:50px" width="17" height="16" shape-rendering="crispEdges"><rect x="5" y="2" width="2" height="1" fill="#ffffff"/><rect x="8" y="2" width="2" height="1" fill="#ffffff"/><rect x="11" y="2" width="2" height="1" fill="#ffffff"/><rect x="4" y="4" width="10" height="1" fill="#ffffff"/><rect x="2" y="5" width="1" height="1" fill="#ffffff"/><rect x="4" y="5" width="10" height="1" fill="#ffffff"/><rect x="15" y="5" width="1" height="1" fill="#ffffff"/><rect x="2" y="6" width="1" height="1" fill="#ffffff"/><rect x="4" y="6" width="10" height="1" fill="#ffffff"/><rect x="15" y="6" width="1" height="1" fill="#ffffff"/><rect x="4" y="7" width="10" height="1" fill="#ffffff"/><rect x="2" y="8" width="1" height="1" fill="#ffffff"/><rect x="4" y="8" width="10" height="1" fill="#ffffff"/><rect x="15" y="8" width="1" height="1" fill="#ffffff"/><rect x="2" y="9" width="1" height="1" fill="#ffffff"/><rect x="4" y="9" width="10" height="1" fill="#ffffff"/><rect x="15" y="9" width="1" height="1" fill="#ffffff"/><rect x="4" y="10" width="10" height="1" fill="#ffffff"/><rect x="2" y="11" width="1" height="1" fill="#ffffff"/><rect x="4" y="11" width="10" height="1" fill="#ffffff"/><rect x="15" y="11" width="1" height="1" fill="#ffffff"/><rect x="2" y="12" width="1" height="1" fill="#ffffff"/><rect x="4" y="12" width="10" height="1" fill="#ffffff"/><rect x="15" y="12" width="1" height="1" fill="#ffffff"/><rect x="4" y="13" width="10" height="1" fill="#ffffff"/><rect x="3" y="14" width="1" height="1" fill="#ffffff"/><rect x="14" y="14" width="1" height="1" fill="#ffffff"/><rect x="1" y="15" width="3" height="1" fill="#ffffff"/><rect x="5" y="15" width="2" height="1" fill="#ffffff"/><rect x="8" y="15" width="2" height="1" fill="#ffffff"/><rect x="11" y="15" width="2" height="1" fill="#ffffff"/><rect x="14" y="15" width="3" height="1" fill="#ffffff"/><rect x="4" y="1" width="2" height="1" fill="#a0a0a0"/><rect x="7" y="1" width="2" height="1" fill="#a0a0a0"/><rect x="10" y="1" width="2" height="1" fill="#a0a0a0"/><rect x="3" y="3" width="10" height="1" fill="#a0a0a0"/><rect x="1" y="4" width="1" height="1" fill="#a0a0a0"/><rect x="3" y="4" width="10" height="1" fill="#a0a0a0"/><rect x="14" y="4" width="1" height="1" fill="#a0a0a0"/><rect x="1" y="5" width="1" height="1" fill="#a0a0a0"/><rect x="3" y="5" width="10" height="1" fill="#a0a0a0"/><rect x="14" y="5" width="1" height="1" fill="#a0a0a0"/><rect x="3" y="6" width="10" height="1" fill="#a0a0a0"/><rect x="1" y="7" width="1" height="1" fill="#a0a0a0"/><rect x="3" y="7" width="10" height="1" fill="#a0a0a0"/><rect x="14" y="7" width="1" height="1" fill="#a0a0a0"/><rect x="1" y="8" width="1" height="1" fill="#a0a0a0"/><rect x="3" y="8" width="10" height="1" fill="#a0a0a0"/><rect x="14" y="8" width="1" height="1" fill="#a0a0a0"/><rect x="3" y="9" width="10" height="1" fill="#a0a0a0"/><rect x="1" y="10" width="1" height="1" fill="#a0a0a0"/><rect x="3" y="10" width="10" height="1" fill="#a0a0a0"/><rect x="14" y="10" width="1" height="1" fill="#a0a0a0"/><rect x="1" y="11" width="1" height="1" fill="#a0a0a0"/><rect x="3" y="11" width="10" height="1" fill="#a0a0a0"/><rect x="14" y="11" width="1" height="1" fill="#a0a0a0"/><rect x="3" y="12" width="10" height="1" fill="#a0a0a0"/><rect x="2" y="13" width="1" height="1" fill="#a0a0a0"/><rect x="13" y="13" width="1" height="1" fill="#a0a0a0"/><rect x="0" y="14" width="3" height="1" fill="#a0a0a0"/><rect x="4" y="14" width="2" height="1" fill="#a0a0a0"/><rect x="7" y="14" width="2" height="1" fill="#a0a0a0"/><rect x="10" y="14" width="2" height="1" fill="#a0a0a0"/><rect x="13" y="14" width="3" height="1" fill="#a0a0a0"/></svg>
<svg class="a" style="left:508px;top:50px" width="17" height="17" shape-rendering="crispEdges"><rect x="4" y="1" width="2" height="1" fill="#ffffff"/><rect x="8" y="1" width="2" height="1" fill="#ffffff"/><rect x="12" y="1" width="2" height="1" fill="#ffffff"/><rect x="2" y="2" width="2" height="1" fill="#ffffff"/><rect x="6" y="2" width="2" height="1" fill="#ffffff"/><rect x="10" y="2" width="2" height="1" fill="#ffffff"/><rect x="14" y="2" width="2" height="1" fill="#ffffff"/><rect x="2" y="3" width="1" height="1" fill="#ffffff"/><rect x="15" y="3" width="1" height="1" fill="#ffffff"/><rect x="1" y="4" width="1" height="1" fill="#ffffff"/><rect x="16" y="4" width="1" height="1" fill="#ffffff"/><rect x="1" y="5" width="1" height="1" fill="#ffffff"/><rect x="5" y="5" width="8" height="1" fill="#ffffff"/><rect x="16" y="5" width="1" height="1" fill="#ffffff"/><rect x="2" y="6" width="1" height="1" fill="#ffffff"/><rect x="5" y="6" width="8" height="1" fill="#ffffff"/><rect x="15" y="6" width="1" height="1" fill="#ffffff"/><rect x="2" y="7" width="1" height="1" fill="#ffffff"/><rect x="5" y="7" width="8" height="1" fill="#ffffff"/><rect x="15" y="7" width="1" height="1" fill="#ffffff"/><rect x="1" y="8" width="1" height="1" fill="#ffffff"/><rect x="5" y="8" width="8" height="1" fill="#ffffff"/><rect x="16" y="8" width="1" height="1" fill="#ffffff"/><rect x="1" y="9" width="1" height="1" fill="#ffffff"/><rect x="5" y="9" width="8" height="1" fill="#ffffff"/><rect x="16" y="9" width="1" height="1" fill="#ffffff"/><rect x="2" y="10" width="1" height="1" fill="#ffffff"/><rect x="5" y="10" width="8" height="1" fill="#ffffff"/><rect x="15" y="10" width="1" height="1" fill="#ffffff"/><rect x="2" y="11" width="1" height="1" fill="#ffffff"/><rect x="5" y="11" width="8" height="1" fill="#ffffff"/><rect x="15" y="11" width="1" height="1" fill="#ffffff"/><rect x="1" y="12" width="1" height="1" fill="#ffffff"/><rect x="5" y="12" width="8" height="1" fill="#ffffff"/><rect x="16" y="12" width="1" height="1" fill="#ffffff"/><rect x="1" y="13" width="1" height="1" fill="#ffffff"/><rect x="16" y="13" width="1" height="1" fill="#ffffff"/><rect x="2" y="14" width="1" height="1" fill="#ffffff"/><rect x="15" y="14" width="1" height="1" fill="#ffffff"/><rect x="2" y="15" width="1" height="1" fill="#ffffff"/><rect x="15" y="15" width="1" height="1" fill="#ffffff"/><rect x="1" y="16" width="1" height="1" fill="#ffffff"/><rect x="5" y="16" width="2" height="1" fill="#ffffff"/><rect x="8" y="16" width="2" height="1" fill="#ffffff"/><rect x="11" y="16" width="2" height="1" fill="#ffffff"/><rect x="16" y="16" width="1" height="1" fill="#ffffff"/><rect x="3" y="0" width="2" height="1" fill="#a0a0a0"/><rect x="7" y="0" width="2" height="1" fill="#a0a0a0"/><rect x="11" y="0" width="2" height="1" fill="#a0a0a0"/><rect x="1" y="1" width="2" height="1" fill="#a0a0a0"/><rect x="5" y="1" width="2" height="1" fill="#a0a0a0"/><rect x="9" y="1" width="2" height="1" fill="#a0a0a0"/><rect x="13" y="1" width="2" height="1" fill="#a0a0a0"/><rect x="1" y="2" width="1" height="1" fill="#a0a0a0"/><rect x="14" y="2" width="1" height="1" fill="#a0a0a0"/><rect x="0" y="3" width="1" height="1" fill="#a0a0a0"/><rect x="15" y="3" width="1" height="1" fill="#a0a0a0"/><rect x="0" y="4" width="1" height="1" fill="#a0a0a0"/><rect x="4" y="4" width="8" height="1" fill="#a0a0a0"/><rect x="15" y="4" width="1" height="1" fill="#a0a0a0"/><rect x="1" y="5" width="1" height="1" fill="#a0a0a0"/><rect x="4" y="5" width="8" height="1" fill="#a0a0a0"/><rect x="14" y="5" width="1" height="1" fill="#a0a0a0"/><rect x="1" y="6" width="1" height="1" fill="#a0a0a0"/><rect x="4" y="6" width="8" height="1" fill="#a0a0a0"/><rect x="14" y="6" width="1" height="1" fill="#a0a0a0"/><rect x="0" y="7" width="1" height="1" fill="#a0a0a0"/><rect x="4" y="7" width="8" height="1" fill="#a0a0a0"/><rect x="15" y="7" width="1" height="1" fill="#a0a0a0"/><rect x="0" y="8" width="1" height="1" fill="#a0a0a0"/><rect x="4" y="8" width="8" height="1" fill="#a0a0a0"/><rect x="15" y="8" width="1" height="1" fill="#a0a0a0"/><rect x="1" y="9" width="1" height="1" fill="#a0a0a0"/><rect x="4" y="9" width="8" height="1" fill="#a0a0a0"/><rect x="14" y="9" width="1" height="1" fill="#a0a0a0"/><rect x="1" y="10" width="1" height="1" fill="#a0a0a0"/><rect x="4" y="10" width="8" height="1" fill="#a0a0a0"/><rect x="14" y="10" width="1" height="1" fill="#a0a0a0"/><rect x="0" y="11" width="1" height="1" fill="#a0a0a0"/><rect x="4" y="11" width="8" height="1" fill="#a0a0a0"/><rect x="15" y="11" width="1" height="1" fill="#a0a0a0"/><rect x="0" y="12" width="1" height="1" fill="#a0a0a0"/><rect x="15" y="12" width="1" height="1" fill="#a0a0a0"/><rect x="1" y="13" width="1" height="1" fill="#a0a0a0"/><rect x="14" y="13" width="1" height="1" fill="#a0a0a0"/><rect x="1" y="14" width="1" height="1" fill="#a0a0a0"/><rect x="14" y="14" width="1" height="1" fill="#a0a0a0"/><rect x="0" y="15" width="1" height="1" fill="#a0a0a0"/><rect x="4" y="15" width="2" height="1" fill="#a0a0a0"/><rect x="7" y="15" width="2" height="1" fill="#a0a0a0"/><rect x="10" y="15" width="2" height="1" fill="#a0a0a0"/><rect x="15" y="15" width="1" height="1" fill="#a0a0a0"/></svg>
<svg class="a" style="left:531px;top:50px" width="17" height="16" shape-rendering="crispEdges"><rect x="5" y="2" width="2" height="1" fill="#ffffff"/><rect x="8" y="2" width="2" height="1" fill="#ffffff"/><rect x="11" y="2" width="2" height="1" fill="#ffffff"/><rect x="4" y="4" width="10" height="1" fill="#ffffff"/><rect x="2" y="5" width="1" height="1" fill="#ffffff"/><rect x="4" y="5" width="10" height="1" fill="#ffffff"/><rect x="15" y="5" width="1" height="1" fill="#ffffff"/><rect x="2" y="6" width="1" height="1" fill="#ffffff"/><rect x="4" y="6" width="10" height="1" fill="#ffffff"/><rect x="15" y="6" width="1" height="1" fill="#ffffff"/><rect x="4" y="7" width="10" height="1" fill="#ffffff"/><rect x="2" y="8" width="1" height="1" fill="#ffffff"/><rect x="4" y="8" width="10" height="1" fill="#ffffff"/><rect x="15" y="8" width="1" height="1" fill="#ffffff"/><rect x="2" y="9" width="1" height="1" fill="#ffffff"/><rect x="4" y="9" width="10" height="1" fill="#ffffff"/><rect x="15" y="9" width="1" height="1" fill="#ffffff"/><rect x="4" y="10" width="10" height="1" fill="#ffffff"/><rect x="2" y="11" width="1" height="1" fill="#ffffff"/><rect x="4" y="11" width="10" height="1" fill="#ffffff"/><rect x="15" y="11" width="1" height="1" fill="#ffffff"/><rect x="2" y="12" width="1" height="1" fill="#ffffff"/><rect x="4" y="12" width="10" height="1" fill="#ffffff"/><rect x="15" y="12" width="1" height="1" fill="#ffffff"/><rect x="4" y="13" width="10" height="1" fill="#ffffff"/><rect x="3" y="14" width="1" height="1" fill="#ffffff"/><rect x="14" y="14" width="1" height="1" fill="#ffffff"/><rect x="1" y="15" width="3" height="1" fill="#ffffff"/><rect x="5" y="15" width="2" height="1" fill="#ffffff"/><rect x="8" y="15" width="2" height="1" fill="#ffffff"/><rect x="11" y="15" width="2" height="1" fill="#ffffff"/><rect x="14" y="15" width="3" height="1" fill="#ffffff"/><rect x="4" y="1" width="2" height="1" fill="#a0a0a0"/><rect x="7" y="1" width="2" height="1" fill="#a0a0a0"/><rect x="10" y="1" width="2" height="1" fill="#a0a0a0"/><rect x="3" y="3" width="10" height="1" fill="#a0a0a0"/><rect x="1" y="4" width="1" height="1" fill="#a0a0a0"/><rect x="3" y="4" width="10" height="1" fill="#a0a0a0"/><rect x="14" y="4" width="1" height="1" fill="#a0a0a0"/><rect x="1" y="5" width="1" height="1" fill="#a0a0a0"/><rect x="3" y="5" width="10" height="1" fill="#a0a0a0"/><rect x="14" y="5" width="1" height="1" fill="#a0a0a0"/><rect x="3" y="6" width="10" height="1" fill="#a0a0a0"/><rect x="1" y="7" width="1" height="1" fill="#a0a0a0"/><rect x="3" y="7" width="10" height="1" fill="#a0a0a0"/><rect x="14" y="7" width="1" height="1" fill="#a0a0a0"/><rect x="1" y="8" width="1" height="1" fill="#a0a0a0"/><rect x="3" y="8" width="10" height="1" fill="#a0a0a0"/><rect x="14" y="8" width="1" height="1" fill="#a0a0a0"/><rect x="3" y="9" width="10" height="1" fill="#a0a0a0"/><rect x="1" y="10" width="1" height="1" fill="#a0a0a0"/><rect x="3" y="10" width="10" height="1" fill="#a0a0a0"/><rect x="14" y="10" width="1" height="1" fill="#a0a0a0"/><rect x="1" y="11" width="1" height="1" fill="#a0a0a0"/><rect x="3" y="11" width="10" height="1" fill="#a0a0a0"/><rect x="14" y="11" width="1" height="1" fill="#a0a0a0"/><rect x="3" y="12" width="10" height="1" fill="#a0a0a0"/><rect x="2" y="13" width="1" height="1" fill="#a0a0a0"/><rect x="13" y="13" width="1" height="1" fill="#a0a0a0"/><rect x="0" y="14" width="3" height="1" fill="#a0a0a0"/><rect x="4" y="14" width="2" height="1" fill="#a0a0a0"/><rect x="7" y="14" width="2" height="1" fill="#a0a0a0"/><rect x="10" y="14" width="2" height="1" fill="#a0a0a0"/><rect x="13" y="14" width="3" height="1" fill="#a0a0a0"/></svg>
<svg class="a" style="left:554px;top:50px" width="17" height="17" shape-rendering="crispEdges"><rect x="5" y="1" width="2" height="1" fill="#ffffff"/><rect x="8" y="1" width="2" height="1" fill="#ffffff"/><rect x="11" y="1" width="2" height="1" fill="#ffffff"/><rect x="1" y="5" width="1" height="1" fill="#ffffff"/><rect x="5" y="5" width="8" height="1" fill="#ffffff"/><rect x="16" y="5" width="1" height="1" fill="#ffffff"/><rect x="1" y="6" width="1" height="1" fill="#ffffff"/><rect x="5" y="6" width="8" height="1" fill="#ffffff"/><rect x="16" y="6" width="1" height="1" fill="#ffffff"/><rect x="5" y="7" width="8" height="1" fill="#ffffff"/><rect x="1" y="8" width="1" height="1" fill="#ffffff"/><rect x="5" y="8" width="8" height="1" fill="#ffffff"/><rect x="16" y="8" width="1" height="1" fill="#ffffff"/><rect x="1" y="9" width="1" height="1" fill="#ffffff"/><rect x="5" y="9" width="8" height="1" fill="#ffffff"/><rect x="16" y="9" width="1" height="1" fill="#ffffff"/><rect x="5" y="10" width="8" height="1" fill="#ffffff"/><rect x="1" y="11" width="1" height="1" fill="#ffffff"/><rect x="5" y="11" width="8" height="1" fill="#ffffff"/><rect x="16" y="11" width="1" height="1" fill="#ffffff"/><rect x="1" y="12" width="1" height="1" fill="#ffffff"/><rect x="5" y="12" width="8" height="1" fill="#ffffff"/><rect x="16" y="12" width="1" height="1" fill="#ffffff"/><rect x="4" y="13" width="1" height="1" fill="#ffffff"/><rect x="13" y="13" width="1" height="1" fill="#ffffff"/><rect x="3" y="14" width="1" height="1" fill="#ffffff"/><rect x="14" y="14" width="1" height="1" fill="#ffffff"/><rect x="2" y="15" width="1" height="1" fill="#ffffff"/><rect x="5" y="15" width="2" height="1" fill="#ffffff"/><rect x="8" y="15" width="2" height="1" fill="#ffffff"/><rect x="11" y="15" width="2" height="1" fill="#ffffff"/><rect x="15" y="15" width="1" height="1" fill="#ffffff"/><rect x="1" y="16" width="1" height="1" fill="#ffffff"/><rect x="16" y="16" width="1" height="1" fill="#ffffff"/><rect x="4" y="0" width="2" height="1" fill="#a0a0a0"/><rect x="7" y="0" width="2" height="1" fill="#a0a0a0"/><rect x="10" y="0" width="2" height="1" fill="#a0a0a0"/><rect x="0" y="4" width="1" height="1" fill="#a0a0a0"/><rect x="4" y="4" width="8" height="1" fill="#a0a0a0"/><rect x="15" y="4" width="1" height="1" fill="#a0a0a0"/><rect x="0" y="5" width="1" height="1" fill="#a0a0a0"/><rect x="4" y="5" width="8" height="1" fill="#a0a0a0"/><rect x="15" y="5" width="1" height="1" fill="#a0a0a0"/><rect x="4" y="6" width="8" height="1" fill="#a0a0a0"/><rect x="0" y="7" width="1" height="1" fill="#a0a0a0"/><rect x="4" y="7" width="8" height="1" fill="#a0a0a0"/><rect x="15" y="7" width="1" height="1" fill="#a0a0a0"/><rect x="0" y="8" width="1" height="1" fill="#a0a0a0"/><rect x="4" y="8" width="8" height="1" fill="#a0a0a0"/><rect x="15" y="8" width="1" height="1" fill="#a0a0a0"/><rect x="4" y="9" width="8" height="1" fill="#a0a0a0"/><rect x="0" y="10" width="1" height="1" fill="#a0a0a0"/><rect x="4" y="10" width="8" height="1" fill="#a0a0a0"/><rect x="15" y="10" width="1" height="1" fill="#a0a0a0"/><rect x="0" y="11" width="1" height="1" fill="#a0a0a0"/><rect x="4" y="11" width="8" height="1" fill="#a0a0a0"/><rect x="15" y="11" width="1" height="1" fill="#a0a0a0"/><rect x="3" y="12" width="1" height="1" fill="#a0a0a0"/><rect x="12" y="12" width="1" height="1" fill="#a0a0a0"/><rect x="2" y="13" width="1" height="1" fill="#a0a0a0"/><rect x="13" y="13" width="1" height="1" fill="#a0a0a0"/><rect x="1" y="14" width="1" height="1" fill="#a0a0a0"/><rect x="4" y="14" width="2" height="1" fill="#a0a0a0"/><rect x="7" y="14" width="2" height="1" fill="#a0a0a0"/><rect x="10" y="14" width="2" height="1" fill="#a0a0a0"/><rect x="14" y="14" width="1" height="1" fill="#a0a0a0"/><rect x="0" y="15" width="1" height="1" fill="#a0a0a0"/><rect x="15" y="15" width="1" height="1" fill="#a0a0a0"/></svg>
<svg class="a" style="left:577px;top:50px" width="17" height="16" shape-rendering="crispEdges"><rect x="4" y="4" width="10" height="1" fill="#ffffff"/><rect x="4" y="5" width="10" height="1" fill="#ffffff"/><rect x="4" y="6" width="10" height="1" fill="#ffffff"/><rect x="4" y="7" width="10" height="1" fill="#ffffff"/><rect x="4" y="8" width="10" height="1" fill="#ffffff"/><rect x="4" y="9" width="10" height="1" fill="#ffffff"/><rect x="4" y="10" width="10" height="1" fill="#ffffff"/><rect x="4" y="11" width="10" height="1" fill="#ffffff"/><rect x="4" y="12" width="10" height="1" fill="#ffffff"/><rect x="4" y="13" width="10" height="1" fill="#ffffff"/><rect x="3" y="14" width="1" height="1" fill="#ffffff"/><rect x="14" y="14" width="1" height="1" fill="#ffffff"/><rect x="1" y="15" width="3" height="1" fill="#ffffff"/><rect x="14" y="15" width="3" height="1" fill="#ffffff"/><rect x="3" y="3" width="10" height="1" fill="#a0a0a0"/><rect x="3" y="4" width="10" height="1" fill="#a0a0a0"/><rect x="3" y="5" width="10" height="1" fill="#a0a0a0"/><rect x="3" y="6" width="10" height="1" fill="#a0a0a0"/><rect x="3" y="7" width="10" height="1" fill="#a0a0a0"/><rect x="3" y="8" width="10" height="1" fill="#a0a0a0"/><rect x="3" y="9" width="10" height="1" fill="#a0a0a0"/><rect x="3" y="10" width="10" height="1" fill="#a0a0a0"/><rect x="3" y="11" width="10" height="1" fill="#a0a0a0"/><rect x="3" y="12" width="10" height="1" fill="#a0a0a0"/><rect x="2" y="13" width="1" height="1" fill="#a0a0a0"/><rect x="13" y="13" width="1" height="1" fill="#a0a0a0"/><rect x="0" y="14" width="3" height="1" fill="#a0a0a0"/><rect x="13" y="14" width="3" height="1" fill="#a0a0a0"/></svg>
<svg class="a" style="left:600px;top:50px" width="17" height="16" shape-rendering="crispEdges"><rect x="5" y="2" width="2" height="1" fill="#ffffff"/><rect x="8" y="2" width="2" height="1" fill="#ffffff"/><rect x="11" y="2" width="2" height="1" fill="#ffffff"/><rect x="5" y="3" width="2" height="1" fill="#ffffff"/><rect x="8" y="3" width="2" height="1" fill="#ffffff"/><rect x="11" y="3" width="2" height="1" fill="#ffffff"/><rect x="4" y="4" width="11" height="1" fill="#ffffff"/><rect x="2" y="5" width="15" height="1" fill="#ffffff"/><rect x="4" y="6" width="11" height="1" fill="#ffffff"/><rect x="4" y="7" width="11" height="1" fill="#ffffff"/><rect x="2" y="8" width="15" height="1" fill="#ffffff"/><rect x="4" y="9" width="11" height="1" fill="#ffffff"/><rect x="4" y="10" width="11" height="1" fill="#ffffff"/><rect x="2" y="11" width="15" height="1" fill="#ffffff"/><rect x="4" y="12" width="11" height="1" fill="#ffffff"/><rect x="4" y="13" width="11" height="1" fill="#ffffff"/><rect x="3" y="14" width="1" height="1" fill="#ffffff"/><rect x="5" y="14" width="2" height="1" fill="#ffffff"/><rect x="8" y="14" width="2" height="1" fill="#ffffff"/><rect x="11" y="14" width="2" height="1" fill="#ffffff"/><rect x="14" y="14" width="1" height="1" fill="#ffffff"/><rect x="1" y="15" width="3" height="1" fill="#ffffff"/><rect x="5" y="15" width="2" height="1" fill="#ffffff"/><rect x="8" y="15" width="2" height="1" fill="#ffffff"/><rect x="11" y="15" width="2" height="1" fill="#ffffff"/><rect x="14" y="15" width="3" height="1" fill="#ffffff"/><rect x="4" y="1" width="2" height="1" fill="#a0a0a0"/><rect x="7" y="1" width="2" height="1" fill="#a0a0a0"/><rect x="10" y="1" width="2" height="1" fill="#a0a0a0"/><rect x="4" y="2" width="2" height="1" fill="#a0a0a0"/><rect x="7" y="2" width="2" height="1" fill="#a0a0a0"/><rect x="10" y="2" width="2" height="1" fill="#a0a0a0"/><rect x="3" y="3" width="11" height="1" fill="#a0a0a0"/><rect x="1" y="4" width="15" height="1" fill="#a0a0a0"/><rect x="3" y="5" width="11" height="1" fill="#a0a0a0"/><rect x="3" y="6" width="11" height="1" fill="#a0a0a0"/><rect x="1" y="7" width="15" height="1" fill="#a0a0a0"/><rect x="3" y="8" width="11" height="1" fill="#a0a0a0"/><rect x="3" y="9" width="11" height="1" fill="#a0a0a0"/><rect x="1" y="10" width="15" height="1" fill="#a0a0a0"/><rect x="3" y="11" width="11" height="1" fill="#a0a0a0"/><rect x="3" y="12" width="11" height="1" fill="#a0a0a0"/><rect x="2" y="13" width="1" height="1" fill="#a0a0a0"/><rect x="4" y="13" width="2" height="1" fill="#a0a0a0"/><rect x="7" y="13" width="2" height="1" fill="#a0a0a0"/><rect x="10" y="13" width="2" height="1" fill="#a0a0a0"/><rect x="13" y="13" width="1" height="1" fill="#a0a0a0"/><rect x="0" y="14" width="3" height="1" fill="#a0a0a0"/><rect x="4" y="14" width="2" height="1" fill="#a0a0a0"/><rect x="7" y="14" width="2" height="1" fill="#a0a0a0"/><rect x="10" y="14" width="2" height="1" fill="#a0a0a0"/><rect x="13" y="14" width="3" height="1" fill="#a0a0a0"/></svg>
<svg class="a" style="left:623px;top:50px" width="17" height="16" shape-rendering="crispEdges"><rect x="5" y="2" width="2" height="1" fill="#ffffff"/><rect x="8" y="2" width="2" height="1" fill="#ffffff"/><rect x="11" y="2" width="2" height="1" fill="#ffffff"/><rect x="4" y="4" width="10" height="1" fill="#ffffff"/><rect x="2" y="5" width="1" height="1" fill="#ffffff"/><rect x="4" y="5" width="10" height="1" fill="#ffffff"/><rect x="15" y="5" width="1" height="1" fill="#ffffff"/><rect x="2" y="6" width="1" height="1" fill="#ffffff"/><rect x="4" y="6" width="10" height="1" fill="#ffffff"/><rect x="15" y="6" width="1" height="1" fill="#ffffff"/><rect x="4" y="7" width="10" height="1" fill="#ffffff"/><rect x="2" y="8" width="1" height="1" fill="#ffffff"/><rect x="4" y="8" width="10" height="1" fill="#ffffff"/><rect x="15" y="8" width="1" height="1" fill="#ffffff"/><rect x="2" y="9" width="1" height="1" fill="#ffffff"/><rect x="4" y="9" width="10" height="1" fill="#ffffff"/><rect x="15" y="9" width="1" height="1" fill="#ffffff"/><rect x="4" y="10" width="10" height="1" fill="#ffffff"/><rect x="2" y="11" width="1" height="1" fill="#ffffff"/><rect x="4" y="11" width="10" height="1" fill="#ffffff"/><rect x="15" y="11" width="1" height="1" fill="#ffffff"/><rect x="2" y="12" width="1" height="1" fill="#ffffff"/><rect x="4" y="12" width="10" height="1" fill="#ffffff"/><rect x="15" y="12" width="1" height="1" fill="#ffffff"/><rect x="4" y="13" width="10" height="1" fill="#ffffff"/><rect x="3" y="14" width="1" height="1" fill="#ffffff"/><rect x="14" y="14" width="1" height="1" fill="#ffffff"/><rect x="1" y="15" width="3" height="1" fill="#ffffff"/><rect x="5" y="15" width="2" height="1" fill="#ffffff"/><rect x="8" y="15" width="2" height="1" fill="#ffffff"/><rect x="11" y="15" width="2" height="1" fill="#ffffff"/><rect x="14" y="15" width="3" height="1" fill="#ffffff"/><rect x="4" y="1" width="2" height="1" fill="#a0a0a0"/><rect x="7" y="1" width="2" height="1" fill="#a0a0a0"/><rect x="10" y="1" width="2" height="1" fill="#a0a0a0"/><rect x="3" y="3" width="10" height="1" fill="#a0a0a0"/><rect x="1" y="4" width="1" height="1" fill="#a0a0a0"/><rect x="3" y="4" width="10" height="1" fill="#a0a0a0"/><rect x="14" y="4" width="1" height="1" fill="#a0a0a0"/><rect x="1" y="5" width="1" height="1" fill="#a0a0a0"/><rect x="3" y="5" width="10" height="1" fill="#a0a0a0"/><rect x="14" y="5" width="1" height="1" fill="#a0a0a0"/><rect x="3" y="6" width="10" height="1" fill="#a0a0a0"/><rect x="1" y="7" width="1" height="1" fill="#a0a0a0"/><rect x="3" y="7" width="10" height="1" fill="#a0a0a0"/><rect x="14" y="7" width="1" height="1" fill="#a0a0a0"/><rect x="1" y="8" width="1" height="1" fill="#a0a0a0"/><rect x="3" y="8" width="10" height="1" fill="#a0a0a0"/><rect x="14" y="8" width="1" height="1" fill="#a0a0a0"/><rect x="3" y="9" width="10" height="1" fill="#a0a0a0"/><rect x="1" y="10" width="1" height="1" fill="#a0a0a0"/><rect x="3" y="10" width="10" height="1" fill="#a0a0a0"/><rect x="14" y="10" width="1" height="1" fill="#a0a0a0"/><rect x="1" y="11" width="1" height="1" fill="#a0a0a0"/><rect x="3" y="11" width="10" height="1" fill="#a0a0a0"/><rect x="14" y="11" width="1" height="1" fill="#a0a0a0"/><rect x="3" y="12" width="10" height="1" fill="#a0a0a0"/><rect x="2" y="13" width="1" height="1" fill="#a0a0a0"/><rect x="13" y="13" width="1" height="1" fill="#a0a0a0"/><rect x="0" y="14" width="3" height="1" fill="#a0a0a0"/><rect x="4" y="14" width="2" height="1" fill="#a0a0a0"/><rect x="7" y="14" width="2" height="1" fill="#a0a0a0"/><rect x="10" y="14" width="2" height="1" fill="#a0a0a0"/><rect x="13" y="14" width="3" height="1" fill="#a0a0a0"/></svg>
<svg class="a" style="left:646px;top:50px" width="17" height="16" shape-rendering="crispEdges"><rect x="5" y="2" width="2" height="1" fill="#ffffff"/><rect x="8" y="2" width="2" height="1" fill="#ffffff"/><rect x="11" y="2" width="2" height="1" fill="#ffffff"/><rect x="4" y="4" width="10" height="1" fill="#ffffff"/><rect x="2" y="5" width="1" height="1" fill="#ffffff"/><rect x="4" y="5" width="10" height="1" fill="#ffffff"/><rect x="15" y="5" width="1" height="1" fill="#ffffff"/><rect x="2" y="6" width="1" height="1" fill="#ffffff"/><rect x="4" y="6" width="10" height="1" fill="#ffffff"/><rect x="15" y="6" width="1" height="1" fill="#ffffff"/><rect x="4" y="7" width="10" height="1" fill="#ffffff"/><rect x="2" y="8" width="1" height="1" fill="#ffffff"/><rect x="4" y="8" width="10" height="1" fill="#ffffff"/><rect x="15" y="8" width="1" height="1" fill="#ffffff"/><rect x="2" y="9" width="1" height="1" fill="#ffffff"/><rect x="4" y="9" width="10" height="1" fill="#ffffff"/><rect x="15" y="9" width="1" height="1" fill="#ffffff"/><rect x="4" y="10" width="10" height="1" fill="#ffffff"/><rect x="2" y="11" width="1" height="1" fill="#ffffff"/><rect x="4" y="11" width="10" height="1" fill="#ffffff"/><rect x="15" y="11" width="1" height="1" fill="#ffffff"/><rect x="2" y="12" width="1" height="1" fill="#ffffff"/><rect x="4" y="12" width="10" height="1" fill="#ffffff"/><rect x="15" y="12" width="1" height="1" fill="#ffffff"/><rect x="4" y="13" width="10" height="1" fill="#ffffff"/><rect x="3" y="14" width="1" height="1" fill="#ffffff"/><rect x="14" y="14" width="1" height="1" fill="#ffffff"/><rect x="1" y="15" width="3" height="1" fill="#ffffff"/><rect x="5" y="15" width="2" height="1" fill="#ffffff"/><rect x="8" y="15" width="2" height="1" fill="#ffffff"/><rect x="11" y="15" width="2" height="1" fill="#ffffff"/><rect x="14" y="15" width="3" height="1" fill="#ffffff"/><rect x="4" y="1" width="2" height="1" fill="#a0a0a0"/><rect x="7" y="1" width="2" height="1" fill="#a0a0a0"/><rect x="10" y="1" width="2" height="1" fill="#a0a0a0"/><rect x="3" y="3" width="10" height="1" fill="#a0a0a0"/><rect x="1" y="4" width="1" height="1" fill="#a0a0a0"/><rect x="3" y="4" width="10" height="1" fill="#a0a0a0"/><rect x="14" y="4" width="1" height="1" fill="#a0a0a0"/><rect x="1" y="5" width="1" height="1" fill="#a0a0a0"/><rect x="3" y="5" width="10" height="1" fill="#a0a0a0"/><rect x="14" y="5" width="1" height="1" fill="#a0a0a0"/><rect x="3" y="6" width="10" height="1" fill="#a0a0a0"/><rect x="1" y="7" width="1" height="1" fill="#a0a0a0"/><rect x="3" y="7" width="10" height="1" fill="#a0a0a0"/><rect x="14" y="7" width="1" height="1" fill="#a0a0a0"/><rect x="1" y="8" width="1" height="1" fill="#a0a0a0"/><rect x="3" y="8" width="10" height="1" fill="#a0a0a0"/><rect x="14" y="8" width="1" height="1" fill="#a0a0a0"/><rect x="3" y="9" width="10" height="1" fill="#a0a0a0"/><rect x="1" y="10" width="1" height="1" fill="#a0a0a0"/><rect x="3" y="10" width="10" height="1" fill="#a0a0a0"/><rect x="14" y="10" width="1" height="1" fill="#a0a0a0"/><rect x="1" y="11" width="1" height="1" fill="#a0a0a0"/><rect x="3" y="11" width="10" height="1" fill="#a0a0a0"/><rect x="14" y="11" width="1" height="1" fill="#a0a0a0"/><rect x="3" y="12" width="10" height="1" fill="#a0a0a0"/><rect x="2" y="13" width="1" height="1" fill="#a0a0a0"/><rect x="13" y="13" width="1" height="1" fill="#a0a0a0"/><rect x="0" y="14" width="3" height="1" fill="#a0a0a0"/><rect x="4" y="14" width="2" height="1" fill="#a0a0a0"/><rect x="7" y="14" width="2" height="1" fill="#a0a0a0"/><rect x="10" y="14" width="2" height="1" fill="#a0a0a0"/><rect x="13" y="14" width="3" height="1" fill="#a0a0a0"/></svg>
<svg class="a" style="left:214px;top:48px" width="18" height="18" shape-rendering="crispEdges"><rect x="3" y="3" width="10" height="1" fill="#000080"/><rect x="3" y="4" width="8" height="1" fill="#000080"/><rect x="11" y="4" width="1" height="1" fill="#ffffff"/><rect x="12" y="4" width="1" height="1" fill="#000080"/><rect x="3" y="5" width="10" height="1" fill="#000080"/><rect x="3" y="6" width="1" height="1" fill="#000080"/><rect x="4" y="6" width="8" height="1" fill="#ffffff"/><rect x="12" y="6" width="1" height="1" fill="#000080"/><rect x="3" y="7" width="1" height="1" fill="#000080"/><rect x="4" y="7" width="1" height="1" fill="#ffffff"/><rect x="5" y="7" width="10" height="1" fill="#000080"/><rect x="3" y="8" width="1" height="1" fill="#000080"/><rect x="4" y="8" width="1" height="1" fill="#ffffff"/><rect x="5" y="8" width="8" height="1" fill="#000080"/><rect x="13" y="8" width="1" height="1" fill="#ffffff"/><rect x="14" y="8" width="1" height="1" fill="#000080"/><rect x="3" y="9" width="12" height="1" fill="#000080"/><rect x="5" y="10" width="1" height="1" fill="#000080"/><rect x="6" y="10" width="8" height="1" fill="#ffffff"/><rect x="14" y="10" width="1" height="1" fill="#000080"/><rect x="5" y="11" width="1" height="1" fill="#000080"/><rect x="6" y="11" width="2" height="1" fill="#ffffff"/><rect x="8" y="11" width="10" height="1" fill="#000080"/><rect x="5" y="12" width="1" height="1" fill="#000080"/><rect x="6" y="12" width="2" height="1" fill="#ffffff"/><rect x="8" y="12" width="8" height="1" fill="#000080"/><rect x="16" y="12" width="1" height="1" fill="#ffffff"/><rect x="17" y="12" width="1" height="1" fill="#000080"/><rect x="5" y="13" width="13" height="1" fill="#000080"/><rect x="8" y="14" width="1" height="1" fill="#000080"/><rect x="9" y="14" width="8" height="1" fill="#ffffff"/><rect x="17" y="14" width="1" height="1" fill="#000080"/><rect x="8" y="15" width="1" height="1" fill="#000080"/><rect x="9" y="15" width="8" height="1" fill="#ffffff"/><rect x="17" y="15" width="1" height="1" fill="#000080"/><rect x="8" y="16" width="1" height="1" fill="#000080"/><rect x="9" y="16" width="8" height="1" fill="#ffffff"/><rect x="17" y="16" width="1" height="1" fill="#000080"/><rect x="8" y="17" width="10" height="1" fill="#000080"/></svg>
<svg class="a" style="left:240px;top:52px" width="13" height="13" shape-rendering="crispEdges"><rect x="0" y="0" width="13" height="1" fill="#000080"/><rect x="0" y="1" width="11" height="1" fill="#000080"/><rect x="11" y="1" width="1" height="1" fill="#ffffff"/><rect x="12" y="1" width="1" height="1" fill="#000080"/><rect x="0" y="2" width="13" height="1" fill="#000080"/><rect x="0" y="3" width="1" height="1" fill="#000080"/><rect x="1" y="3" width="11" height="1" fill="#ffffff"/><rect x="12" y="3" width="1" height="1" fill="#000080"/><rect x="0" y="4" width="1" height="1" fill="#000080"/><rect x="1" y="4" width="11" height="1" fill="#ffffff"/><rect x="12" y="4" width="1" height="1" fill="#000080"/><rect x="0" y="5" width="1" height="1" fill="#000080"/><rect x="1" y="5" width="11" height="1" fill="#ffffff"/><rect x="12" y="5" width="1" height="1" fill="#000080"/><rect x="0" y="6" width="13" height="1" fill="#000080"/><rect x="0" y="7" width="11" height="1" fill="#000080"/><rect x="11" y="7" width="1" height="1" fill="#ffffff"/><rect x="12" y="7" width="1" height="1" fill="#000080"/><rect x="0" y="8" width="13" height="1" fill="#000080"/><rect x="0" y="9" width="1" height="1" fill="#000080"/><rect x="1" y="9" width="11" height="1" fill="#ffffff"/><rect x="12" y="9" width="1" height="1" fill="#000080"/><rect x="0" y="10" width="1" height="1" fill="#000080"/><rect x="1" y="10" width="11" height="1" fill="#ffffff"/><rect x="12" y="10" width="1" height="1" fill="#000080"/><rect x="0" y="11" width="1" height="1" fill="#000080"/><rect x="1" y="11" width="11" height="1" fill="#ffffff"/><rect x="12" y="11" width="1" height="1" fill="#000080"/><rect x="0" y="12" width="13" height="1" fill="#000080"/></svg>
<svg class="a" style="left:263px;top:52px" width="13" height="13" shape-rendering="crispEdges"><rect x="0" y="0" width="13" height="1" fill="#000080"/><rect x="0" y="1" width="5" height="1" fill="#000080"/><rect x="5" y="1" width="1" height="1" fill="#ffffff"/><rect x="6" y="1" width="5" height="1" fill="#000080"/><rect x="11" y="1" width="1" height="1" fill="#ffffff"/><rect x="12" y="1" width="1" height="1" fill="#000080"/><rect x="0" y="2" width="13" height="1" fill="#000080"/><rect x="0" y="3" width="1" height="1" fill="#000080"/><rect x="1" y="3" width="5" height="1" fill="#ffffff"/><rect x="6" y="3" width="1" height="1" fill="#000080"/><rect x="7" y="3" width="5" height="1" fill="#ffffff"/><rect x="12" y="3" width="1" height="1" fill="#000080"/><rect x="0" y="4" width="1" height="1" fill="#000080"/><rect x="1" y="4" width="5" height="1" fill="#ffffff"/><rect x="6" y="4" width="1" height="1" fill="#000080"/><rect x="7" y="4" width="5" height="1" fill="#ffffff"/><rect x="12" y="4" width="1" height="1" fill="#000080"/><rect x="0" y="5" width="1" height="1" fill="#000080"/><rect x="1" y="5" width="5" height="1" fill="#ffffff"/><rect x="6" y="5" width="1" height="1" fill="#000080"/><rect x="7" y="5" width="5" height="1" fill="#ffffff"/><rect x="12" y="5" width="1" height="1" fill="#000080"/><rect x="0" y="6" width="1" height="1" fill="#000080"/><rect x="1" y="6" width="5" height="1" fill="#ffffff"/><rect x="6" y="6" width="1" height="1" fill="#000080"/><rect x="7" y="6" width="5" height="1" fill="#ffffff"/><rect x="12" y="6" width="1" height="1" fill="#000080"/><rect x="0" y="7" width="1" height="1" fill="#000080"/><rect x="1" y="7" width="5" height="1" fill="#ffffff"/><rect x="6" y="7" width="1" height="1" fill="#000080"/><rect x="7" y="7" width="5" height="1" fill="#ffffff"/><rect x="12" y="7" width="1" height="1" fill="#000080"/><rect x="0" y="8" width="1" height="1" fill="#000080"/><rect x="1" y="8" width="5" height="1" fill="#ffffff"/><rect x="6" y="8" width="1" height="1" fill="#000080"/><rect x="7" y="8" width="5" height="1" fill="#ffffff"/><rect x="12" y="8" width="1" height="1" fill="#000080"/><rect x="0" y="9" width="1" height="1" fill="#000080"/><rect x="1" y="9" width="5" height="1" fill="#ffffff"/><rect x="6" y="9" width="1" height="1" fill="#000080"/><rect x="7" y="9" width="5" height="1" fill="#ffffff"/><rect x="12" y="9" width="1" height="1" fill="#000080"/><rect x="0" y="10" width="1" height="1" fill="#000080"/><rect x="1" y="10" width="5" height="1" fill="#ffffff"/><rect x="6" y="10" width="1" height="1" fill="#000080"/><rect x="7" y="10" width="5" height="1" fill="#ffffff"/><rect x="12" y="10" width="1" height="1" fill="#000080"/><rect x="0" y="11" width="1" height="1" fill="#000080"/><rect x="1" y="11" width="5" height="1" fill="#ffffff"/><rect x="6" y="11" width="1" height="1" fill="#000080"/><rect x="7" y="11" width="5" height="1" fill="#ffffff"/><rect x="12" y="11" width="1" height="1" fill="#000080"/><rect x="0" y="12" width="13" height="1" fill="#000080"/></svg>
<div class="a" style="left:730px;top:75px;width:129px;height:17px;background:#fff;border-top:1px solid #a0a0a0;border-left:1px solid #a0a0a0"></div>
<div class="t" style="left:730px;top:76px;font-size:13px;line-height:13px">待機中</div>
<div class="a" style="left:0px;top:99px;width:180px;height:689px;background:#f0f0f0"></div>
<div class="a" style="left:2px;top:103px;width:164px;height:1px;background:#fff"></div>
<div class="a" style="left:2px;top:104px;width:164px;height:1px;background:#a0a0a0"></div>
<div class="a" style="left:2px;top:106px;width:164px;height:1px;background:#fff"></div>
<div class="a" style="left:2px;top:107px;width:164px;height:1px;background:#a0a0a0"></div>
<div class="a" style="left:166px;top:102px;width:1px;height:6px;background:#a0a0a0"></div>
<div class="a" style="left:169px;top:100px;width:10px;height:10px;border-right:1px solid #696969;border-bottom:1px solid #696969;border-left:1px solid #fff;border-top:1px solid #fff"></div>
<svg class="a" style="left:170px;top:101px" width="8" height="8"><path d="M1.5 1.5L6.5 6.5M6.5 1.5L1.5 6.5" stroke="#000" stroke-width="1.2"/></svg>
<div class="a" style="left:0px;top:116px;width:178px;height:1px;background:#a0a0a0"></div>
<div class="a" style="left:1px;top:117px;width:177px;height:1px;background:#fff"></div>
<div class="a" style="left:0px;top:116px;width:1px;height:671px;background:#a0a0a0"></div>
<div class="a" style="left:1px;top:117px;width:1px;height:670px;background:#fff"></div>
<div class="a" style="left:178px;top:116px;width:1px;height:671px;background:#a0a0a0"></div>
<div class="a" style="left:179px;top:116px;width:1px;height:671px;background:#fff"></div>
<div class="a" style="left:0px;top:786px;width:179px;height:1px;background:#a0a0a0"></div>
<div class="a" style="left:0px;top:787px;width:180px;height:1px;background:#fff"></div>
<div class="a" style="left:6px;top:110px;width:101px;height:12px;background:#f0f0f0"></div>
<div class="t" style="left:7px;top:112.84px;font-size:12px;line-height:12px;color:#000;transform:scaleX(0.7576);transform-origin:0 0;"><span class="m" id="m8">プロジェクトマネージャ</span></div>
<div class="a" style="left:2px;top:126px;width:175px;height:660px;background:#fff"></div>
<div class="a" style="left:2px;top:126px;width:175px;height:1px;background:#a0a0a0"></div>
<div class="a" style="left:3px;top:127px;width:174px;height:1px;background:#696969"></div>
<div class="a" style="left:2px;top:126px;width:1px;height:660px;background:#a0a0a0"></div>
<div class="a" style="left:3px;top:127px;width:1px;height:659px;background:#696969"></div>
<div class="a" style="left:176px;top:127px;width:1px;height:659px;background:#e3e3e3"></div>
<div class="a" style="left:3px;top:785px;width:174px;height:1px;background:#e3e3e3"></div>
<div class="a" style="left:4px;top:128px;width:172px;height:640px;overflow:hidden"><div class="a" style="left:-4px;top:-128px;width:200px;height:800px"><div class="a" style="left:32px;top:144px;width:1px;height:193px;background:repeating-linear-gradient(180deg,#a0a0a0 0 1px,transparent 1px 2px)"></div>
<div class="a" style="left:52px;top:198px;width:1px;height:13px;background:repeating-linear-gradient(180deg,#a0a0a0 0 1px,transparent 1px 2px)"></div>
<div class="a" style="left:72px;top:234px;width:1px;height:49px;background:repeating-linear-gradient(180deg,#a0a0a0 0 1px,transparent 1px 2px)"></div>
<div class="a" style="left:52px;top:306px;width:1px;height:13px;background:repeating-linear-gradient(180deg,#a0a0a0 0 1px,transparent 1px 2px)"></div>
<div class="a" style="left:52px;top:342px;width:1px;height:49px;background:repeating-linear-gradient(180deg,#a0a0a0 0 1px,transparent 1px 2px)"></div>
<div class="a" style="left:17px;top:138px;width:7px;height:1px;background:repeating-linear-gradient(90deg,#a0a0a0 0 1px,transparent 1px 2px)"></div>
<div class="a" style="left:8px;top:134px;width:9px;height:9px;border:1px solid #919191;background:#fff"></div><div class="a" style="left:10px;top:138px;width:5px;height:1px;background:#000"></div>
<svg class="a" style="left:24px;top:128px" width="16" height="16" viewBox="0 0 16 16"><rect x="0" y="0" width="16" height="16" fill="#c4c4c4"/><path d="M15.5 0V16M0 15.5H16" stroke="#808080"/><path d="M0.5 0V16M0 0.5H16" stroke="#a0a0a0"/><rect x="2.0" y="2.0" width="2" height="2" fill="#f0a8c8"/><rect x="4.6" y="2.0" width="2" height="2" fill="#ff0000"/><rect x="7.2" y="2.0" width="2" height="2" fill="#20a050"/><rect x="9.8" y="2.0" width="2" height="2" fill="#ffff00"/><rect x="12.4" y="2.0" width="2" height="2" fill="#c8f0f0"/><rect x="2.0" y="4.6" width="2" height="2" fill="#000"/><rect x="4.6" y="4.6" width="2" height="2" fill="#f0a8c8"/><rect x="7.2" y="4.6" width="2" height="2" fill="#c8f0f0"/><rect x="9.8" y="4.6" width="2" height="2" fill="#ff0000"/><rect x="12.4" y="4.6" width="2" height="2" fill="#20a050"/><rect x="2.0" y="7.2" width="2" height="2" fill="#000"/><rect x="4.6" y="7.2" width="2" height="2" fill="#ffff00"/><rect x="7.2" y="7.2" width="2" height="2" fill="#f0a8c8"/><rect x="9.8" y="7.2" width="2" height="2" fill="#c8f0f0"/><rect x="12.4" y="7.2" width="2" height="2" fill="#c8f0f0"/><rect x="2.0" y="9.8" width="2" height="2" fill="#f0a8c8"/><rect x="4.6" y="9.8" width="2" height="2" fill="#c8f0f0"/><rect x="7.2" y="9.8" width="2" height="2" fill="#000"/><rect x="9.8" y="9.8" width="2" height="2" fill="#c8f0f0"/><rect x="12.4" y="9.8" width="2" height="2" fill="#20a050"/><rect x="2.0" y="12.4" width="2" height="2" fill="#c8f0f0"/><rect x="4.6" y="12.4" width="2" height="2" fill="#ff0000"/><rect x="7.2" y="12.4" width="2" height="2" fill="#c8f0f0"/><rect x="9.8" y="12.4" width="2" height="2" fill="#ffff00"/><rect x="12.4" y="12.4" width="2" height="2" fill="#c8f0f0"/></svg>
<div class="t" style="left:45px;top:130.84px;font-size:12px;line-height:12px;color:#000;transform:scaleX(0.7812);transform-origin:0 0;"><span class="m" id="m9">新規プロジェクト</span></div>
<div class="a" style="left:32px;top:156px;width:12px;height:1px;background:repeating-linear-gradient(90deg,#a0a0a0 0 1px,transparent 1px 2px)"></div>
<svg class="a" style="left:44px;top:146px" width="16" height="16" viewBox="0 0 16 16"><path d="M9 1H15V8L13 10H9Z" fill="#fff" stroke="#909090"/><path d="M7 2H13V9L11 11H7Z" fill="#f8f8f8" stroke="#909090"/><path d="M1 4H4L5 5H10L8 15H1Z" fill="#f8c830" stroke="#b08000"/><path d="M1 15L3 8H12L9 15Z" fill="#ffd848" stroke="#b08000"/></svg>
<div class="t" style="left:65px;top:148.84px;font-size:12px;line-height:12px;color:#000;transform:scaleX(0.8056);transform-origin:0 0;"><span class="m" id="m10">各種ファイル</span></div>
<div class="a" style="left:32px;top:174px;width:12px;height:1px;background:repeating-linear-gradient(90deg,#a0a0a0 0 1px,transparent 1px 2px)"></div>
<svg class="a" style="left:44px;top:164px" width="16" height="16" viewBox="0 0 16 16"><rect x="2" y="3" width="12" height="10" fill="#000"/><rect x="3" y="4" width="10" height="8" fill="#ffff00"/><rect x="4" y="5" width="9" height="7" fill="#808000"/><path d="M0 8H2M14 8H16" stroke="#000" stroke-width="1.2"/><rect x="12" y="6" width="1" height="1" fill="#f00"/><rect x="12" y="7" width="1" height="1" fill="#0f0"/></svg>
<div class="t" style="left:65px;top:166.84px;font-size:12px;line-height:12px;color:#000;transform:scaleX(0.8376);transform-origin:0 0;"><span class="m" id="m11">JTAGケーブル(ssmaj)</span></div>
<div class="a" style="left:37px;top:192px;width:7px;height:1px;background:repeating-linear-gradient(90deg,#a0a0a0 0 1px,transparent 1px 2px)"></div>
<div class="a" style="left:28px;top:188px;width:9px;height:9px;border:1px solid #919191;background:#fff"></div><div class="a" style="left:30px;top:192px;width:5px;height:1px;background:#000"></div>
<svg class="a" style="left:44px;top:182px" width="16" height="16" viewBox="0 0 16 16"><rect x="2" y="0.5" width="5" height="5" rx="1" fill="#707070" stroke="#505050" stroke-width="0.6"/><rect x="9" y="0.5" width="5" height="5" rx="1" fill="#707070" stroke="#505050" stroke-width="0.6"/><rect x="2.5" y="9.5" width="5" height="5" rx="1" fill="#707070" stroke="#505050" stroke-width="0.6"/><rect x="9.5" y="9.5" width="5" height="5" rx="1" fill="#707070" stroke="#505050" stroke-width="0.6"/><path d="M0 3H2M7 3H9M14 3H15V7H1V11H2.5M7.5 12H9.5M14.5 12H16" stroke="#909090" fill="none"/></svg>
<div class="t" style="left:65px;top:184.84px;font-size:12px;line-height:12px;color:#000;transform:scaleX(0.7692);transform-origin:0 0;"><span class="m" id="m12">JTAGチェーン</span></div>
<div class="a" style="left:57px;top:210px;width:7px;height:1px;background:repeating-linear-gradient(90deg,#a0a0a0 0 1px,transparent 1px 2px)"></div>
<div class="a" style="left:48px;top:206px;width:9px;height:9px;border:1px solid #919191;background:#fff"></div><div class="a" style="left:50px;top:210px;width:5px;height:1px;background:#000"></div>
<svg class="a" style="left:64px;top:200px" width="16" height="16" viewBox="0 0 16 16"><defs><radialGradient id="cbg"><stop offset="0" stop-color="#a0a0a0"/><stop offset="1" stop-color="#202020"/></radialGradient></defs><rect x="0" y="0" width="16" height="16" fill="url(#cbg)"/><rect x="0.8" y="0.8" width="1.4" height="1.4" fill="#ffff00"/><rect x="0.8" y="5" width="1.4" height="1.4" fill="#ffff00"/><rect x="0.8" y="9.6" width="1.4" height="1.4" fill="#ffff00"/><rect x="0.8" y="14" width="1.4" height="1.4" fill="#ffff00"/><rect x="5" y="0.8" width="1.4" height="1.4" fill="#ffff00"/><rect x="5" y="5" width="1.4" height="1.4" fill="#ffff00"/><rect x="5" y="9.6" width="1.4" height="1.4" fill="#ffff00"/><rect x="5" y="14" width="1.4" height="1.4" fill="#ffff00"/><rect x="9.6" y="0.8" width="1.4" height="1.4" fill="#ffff00"/><rect x="9.6" y="5" width="1.4" height="1.4" fill="#ffff00"/><rect x="9.6" y="9.6" width="1.4" height="1.4" fill="#ffff00"/><rect x="9.6" y="14" width="1.4" height="1.4" fill="#ffff00"/><rect x="14" y="0.8" width="1.4" height="1.4" fill="#ffff00"/><rect x="14" y="5" width="1.4" height="1.4" fill="#ffff00"/><rect x="14" y="9.6" width="1.4" height="1.4" fill="#ffff00"/><rect x="14" y="14" width="1.4" height="1.4" fill="#ffff00"/><rect x="3" y="0" width="1" height="1" fill="#ffff00"/><rect x="3" y="15" width="1" height="1" fill="#ffff00"/><rect x="0" y="3" width="1" height="1" fill="#ffff00"/><rect x="15" y="3" width="1" height="1" fill="#ffff00"/><rect x="7" y="0" width="1" height="1" fill="#ffff00"/><rect x="7" y="15" width="1" height="1" fill="#ffff00"/><rect x="0" y="7" width="1" height="1" fill="#ffff00"/><rect x="15" y="7" width="1" height="1" fill="#ffff00"/><rect x="12" y="0" width="1" height="1" fill="#ffff00"/><rect x="12" y="15" width="1" height="1" fill="#ffff00"/><rect x="0" y="12" width="1" height="1" fill="#ffff00"/><rect x="15" y="12" width="1" height="1" fill="#ffff00"/></svg>
<div class="t" style="left:85px;top:202.84px;font-size:12px;line-height:12px;color:#000;transform:scaleX(0.8378);transform-origin:0 0;"><span class="m" id="m13">XC7A100T_CSG324</span></div>
<div class="a" style="left:72px;top:228px;width:12px;height:1px;background:repeating-linear-gradient(90deg,#a0a0a0 0 1px,transparent 1px 2px)"></div>
<svg class="a" style="left:84px;top:218px" width="16" height="16" viewBox="0 0 16 16"><defs><radialGradient id="cbg"><stop offset="0" stop-color="#a0a0a0"/><stop offset="1" stop-color="#202020"/></radialGradient></defs><rect x="0" y="0" width="16" height="16" fill="url(#cbg)"/><rect x="0.8" y="0.8" width="1.4" height="1.4" fill="#ffff00"/><rect x="0.8" y="5" width="1.4" height="1.4" fill="#ffff00"/><rect x="0.8" y="9.6" width="1.4" height="1.4" fill="#ffff00"/><rect x="0.8" y="14" width="1.4" height="1.4" fill="#ffff00"/><rect x="5" y="0.8" width="1.4" height="1.4" fill="#ffff00"/><rect x="5" y="5" width="1.4" height="1.4" fill="#ffff00"/><rect x="5" y="9.6" width="1.4" height="1.4" fill="#ffff00"/><rect x="5" y="14" width="1.4" height="1.4" fill="#ffff00"/><rect x="9.6" y="0.8" width="1.4" height="1.4" fill="#ffff00"/><rect x="9.6" y="5" width="1.4" height="1.4" fill="#ffff00"/><rect x="9.6" y="9.6" width="1.4" height="1.4" fill="#ffff00"/><rect x="9.6" y="14" width="1.4" height="1.4" fill="#ffff00"/><rect x="14" y="0.8" width="1.4" height="1.4" fill="#ffff00"/><rect x="14" y="5" width="1.4" height="1.4" fill="#ffff00"/><rect x="14" y="9.6" width="1.4" height="1.4" fill="#ffff00"/><rect x="14" y="14" width="1.4" height="1.4" fill="#ffff00"/><rect x="3" y="0" width="1" height="1" fill="#ffff00"/><rect x="3" y="15" width="1" height="1" fill="#ffff00"/><rect x="0" y="3" width="1" height="1" fill="#ffff00"/><rect x="15" y="3" width="1" height="1" fill="#ffff00"/><rect x="7" y="0" width="1" height="1" fill="#ffff00"/><rect x="7" y="15" width="1" height="1" fill="#ffff00"/><rect x="0" y="7" width="1" height="1" fill="#ffff00"/><rect x="15" y="7" width="1" height="1" fill="#ffff00"/><rect x="12" y="0" width="1" height="1" fill="#ffff00"/><rect x="12" y="15" width="1" height="1" fill="#ffff00"/><rect x="0" y="12" width="1" height="1" fill="#ffff00"/><rect x="15" y="12" width="1" height="1" fill="#ffff00"/></svg>
<div class="t" style="left:105px;top:220.84px;font-size:12px;line-height:12px;color:#000;transform:scaleX(0.8889);transform-origin:0 0;"><span class="m" id="m14">BGA324</span></div>
<div class="a" style="left:72px;top:246px;width:12px;height:1px;background:repeating-linear-gradient(90deg,#a0a0a0 0 1px,transparent 1px 2px)"></div>
<svg class="a" style="left:84px;top:236px" width="16" height="16" viewBox="0 0 16 16"><path d="M1 1H4V15H1Z" fill="#c4c4c4"/><path d="M4 4L7 1H15V8H4Z" fill="#d4d4d4"/><path d="M4 10H8V14H4Z" fill="#c4c4c4"/><path d="M4 8H15" stroke="#e8e8e8"/></svg>
<div class="t" style="left:105px;top:238.84px;font-size:12px;line-height:12px;color:#000;transform:scaleX(0.9048);transform-origin:0 0;"><span class="m" id="m15">ピン情報未定義</span></div>
<div class="a" style="left:72px;top:264px;width:12px;height:1px;background:repeating-linear-gradient(90deg,#a0a0a0 0 1px,transparent 1px 2px)"></div>
<svg class="a" style="left:84px;top:254px" width="16" height="16" viewBox="0 0 16 16"><defs><linearGradient id="cyg" x1="0" y1="0" x2="1" y2="0"><stop offset="0" stop-color="#a8d040"/><stop offset="0.5" stop-color="#e0f8a0"/><stop offset="1" stop-color="#90c030"/></linearGradient></defs><path d="M0.5 3V13Q8 16.5 15.5 13V3Z" fill="url(#cyg)" stroke="#80a030" stroke-width="0.8"/><ellipse cx="8" cy="3" rx="7.5" ry="2.5" fill="#d8f080" stroke="#80a030" stroke-width="0.8"/></svg>
<div class="t" style="left:105px;top:256.84px;font-size:12px;line-height:12px;color:#000;transform:scaleX(0.9792);transform-origin:0 0;"><span class="m" id="m16">登録済みデバイス</span></div>
<div class="a" style="left:72px;top:282px;width:12px;height:1px;background:repeating-linear-gradient(90deg,#a0a0a0 0 1px,transparent 1px 2px)"></div>
<svg class="a" style="left:84px;top:272px" width="16" height="16" viewBox="0 0 16 16"><rect x="0" y="0" width="16" height="16" fill="#b8b8b8"/><path d="M2 2H8Q11 2 11 6Q11 9 8 10H2Z" fill="#e8e8e8" stroke="#909090" stroke-width="0.8"/><path d="M11 5H16M11 8H16" stroke="#e0e0e0"/><path d="M4 10L14 13L4 16Z" fill="#f0f0f0" stroke="#909090" stroke-width="0.8"/></svg>
<div class="t" style="left:105px;top:274.84px;font-size:12px;line-height:12px;color:#000;transform:scaleX(0.7292);transform-origin:0 0;"><span class="m" id="m17">コンフィグ未設定</span></div>
<div class="a" style="left:37px;top:300px;width:7px;height:1px;background:repeating-linear-gradient(90deg,#a0a0a0 0 1px,transparent 1px 2px)"></div>
<div class="a" style="left:28px;top:296px;width:9px;height:9px;border:1px solid #919191;background:#fff"></div><div class="a" style="left:30px;top:300px;width:5px;height:1px;background:#000"></div>
<svg class="a" style="left:44px;top:290px" width="16" height="16" viewBox="0 0 16 16"><defs><linearGradient id="lgg" x1="0" y1="0" x2="0" y2="1"><stop offset="0" stop-color="#30b030"/><stop offset="1" stop-color="#108010"/></linearGradient></defs><rect x="0.5" y="0.5" width="15" height="15" rx="3" fill="url(#lgg)" stroke="#005000"/><path d="M2.5 7.5V3.5H4.5V7.5H6.5V3.5H8.5V7.5H10.5V3.5H12.5V7.5H13.5M2.5 7.5H5.5V11.5H10.5V7.5H13.5" stroke="#30e030" fill="none" stroke-width="1"/></svg>
<div class="t" style="left:65px;top:292.84px;font-size:12px;line-height:12px;color:#000;transform:scaleX(0.9231);transform-origin:0 0;"><span class="m" id="m18">JTAGロジアナ</span></div>
<div class="a" style="left:52px;top:318px;width:12px;height:1px;background:repeating-linear-gradient(90deg,#a0a0a0 0 1px,transparent 1px 2px)"></div>
<svg class="a" style="left:64px;top:308px" width="16" height="16" viewBox="0 0 16 16"><rect x="0.5" y="0.5" width="15" height="15" rx="2.5" fill="#c8f4c0" stroke="#40a040"/><path d="M1 4.5H3.5V1.5H5.5V4.5H7.5V1.5H9.5V4.5H11.5V1.5H13.5V4.5H15" stroke="#20c020" fill="none" stroke-width="1"/><path d="M7.5 4.5V1.5H9.5V4.5" stroke="#f02020" fill="none" stroke-width="1"/><rect x="0.5" y="8" width="8" height="7.5" fill="#c0c0c0" stroke="#404040" stroke-width="0.8"/><rect x="1" y="8.5" width="2" height="2" fill="#ffff00"/><rect x="8" y="11" width="2" height="2" fill="#ffff00"/><rect x="9" y="14" width="2" height="1.5" fill="#ffff00"/></svg>
<div class="t" style="left:85px;top:310.84px;font-size:12px;line-height:12px;color:#000;transform:scaleX(0.9398);transform-origin:0 0;"><span class="m" id="m19">noname116.jla*</span></div>
<div class="a" style="left:37px;top:336px;width:7px;height:1px;background:repeating-linear-gradient(90deg,#a0a0a0 0 1px,transparent 1px 2px)"></div>
<div class="a" style="left:28px;top:332px;width:9px;height:9px;border:1px solid #919191;background:#fff"></div><div class="a" style="left:30px;top:336px;width:5px;height:1px;background:#000"></div>
<svg class="a" style="left:44px;top:326px" width="16" height="16" viewBox="0 0 16 16"><defs><radialGradient id="ajg"><stop offset="0.3" stop-color="#6a6a40"/><stop offset="1" stop-color="#f0f0e8"/></radialGradient></defs><rect x="0.5" y="0.5" width="15" height="15" fill="url(#ajg)" stroke="#606060"/><path d="M10 3.5V10Q10 12 8 12H5.5V9.5" stroke="#f00" stroke-width="2.2" fill="none"/></svg>
<div class="t" style="left:65px;top:328.84px;font-size:12px;line-height:12px;color:#000;transform:scaleX(0.7379);transform-origin:0 0;"><span class="m" id="m20">AJFGプロジェクト</span></div>
<div class="a" style="left:52px;top:354px;width:12px;height:1px;background:repeating-linear-gradient(90deg,#a0a0a0 0 1px,transparent 1px 2px)"></div>
<svg class="a" style="left:64px;top:344px" width="16" height="16" viewBox="0 0 16 16"><path d="M9 1H15V8L13 10H9Z" fill="#fff" stroke="#909090"/><path d="M7 2H13V9L11 11H7Z" fill="#f8f8f8" stroke="#909090"/><path d="M1 4H4L5 5H10L8 15H1Z" fill="#f8c830" stroke="#b08000"/><path d="M1 15L3 8H12L9 15Z" fill="#ffd848" stroke="#b08000"/></svg>
<div class="t" style="left:85px;top:346.84px;font-size:12px;line-height:12px;color:#000;transform:scaleX(0.8060);transform-origin:0 0;"><span class="m" id="m21">AJFGソース</span></div>
<div class="a" style="left:52px;top:372px;width:12px;height:1px;background:repeating-linear-gradient(90deg,#a0a0a0 0 1px,transparent 1px 2px)"></div>
<svg class="a" style="left:64px;top:362px" width="16" height="16" viewBox="0 0 16 16"><path d="M9 1H15V8L13 10H9Z" fill="#fff" stroke="#909090"/><path d="M7 2H13V9L11 11H7Z" fill="#f8f8f8" stroke="#909090"/><path d="M1 4H4L5 5H10L8 15H1Z" fill="#f8c830" stroke="#b08000"/><path d="M1 15L3 8H12L9 15Z" fill="#ffd848" stroke="#b08000"/></svg>
<div class="t" style="left:85px;top:364.84px;font-size:12px;line-height:12px;color:#000;transform:scaleX(0.6978);transform-origin:0 0;"><span class="m" id="m22">AJFGライブラリファイル</span></div>
<div class="a" style="left:52px;top:390px;width:12px;height:1px;background:repeating-linear-gradient(90deg,#a0a0a0 0 1px,transparent 1px 2px)"></div>
<svg class="a" style="left:64px;top:380px" width="16" height="16" viewBox="0 0 16 16"><path d="M9 1H15V8L13 10H9Z" fill="#fff" stroke="#909090"/><path d="M7 2H13V9L11 11H7Z" fill="#f8f8f8" stroke="#909090"/><path d="M1 4H4L5 5H10L8 15H1Z" fill="#f8c830" stroke="#b08000"/><path d="M1 15L3 8H12L9 15Z" fill="#ffd848" stroke="#b08000"/></svg>
<div class="t" style="left:85px;top:382.84px;font-size:12px;line-height:12px;color:#000;transform:scaleX(0.7250);transform-origin:0 0;"><span class="m" id="m23">ソースベクタファイル</span></div></div></div>
<div class="a" style="left:4px;top:768px;width:172px;height:17px;background:#e9e9e9"></div>
<div class="a" style="left:22px;top:768px;width:124px;height:15px;border:1px solid #979797;border-radius:2px;background:linear-gradient(#f6f6f6,#eaeaea 45%,#d6d6d6 55%,#cdcdcd)"></div>
<div class="a" style="left:80px;top:773px;width:1px;height:6px;background:#505050"></div>
<div class="a" style="left:83px;top:773px;width:1px;height:6px;background:#505050"></div>
<div class="a" style="left:86px;top:773px;width:1px;height:6px;background:#505050"></div>
<svg class="a" style="left:9px;top:772px" width="6" height="8"><path d="M5 0V8L1 4Z" fill="#303030"/></svg>
<svg class="a" style="left:166px;top:772px" width="6" height="8"><path d="M1 0V8L5 4Z" fill="#303030"/></svg>
<div class="a" style="left:180px;top:99px;width:3px;height:689px;background:#a0a0a0"></div>
<div class="a" style="left:183px;top:99px;width:1097px;height:673px;background:#fff"></div>
<svg class="a" style="left:340px;top:140px" width="760" height="521" viewBox="0 0 760 521" shape-rendering="crispEdges">
<defs>
<pattern id="hc" width="8" height="8" patternUnits="userSpaceOnUse"><rect width="8" height="8" fill="#fff"/><path d="M0 1h1v1h-1zM0 4h1v1h-1zM1 0h1v1h-1zM1 5h1v1h-1zM2 6h1v1h-1zM2 7h1v1h-1zM3 6h1v1h-1zM3 7h1v1h-1zM4 0h1v1h-1zM4 5h1v1h-1zM5 1h1v1h-1zM5 4h1v1h-1zM6 2h1v1h-1zM6 3h1v1h-1zM7 2h1v1h-1zM7 3h1v1h-1z" fill="#00ffff"/></pattern><pattern id="hm" width="8" height="8" patternUnits="userSpaceOnUse"><rect width="8" height="8" fill="#fff"/><path d="M0 1h1v1h-1zM0 4h1v1h-1zM1 0h1v1h-1zM1 5h1v1h-1zM2 6h1v1h-1zM2 7h1v1h-1zM3 6h1v1h-1zM3 7h1v1h-1zM4 0h1v1h-1zM4 5h1v1h-1zM5 1h1v1h-1zM5 4h1v1h-1zM6 2h1v1h-1zM6 3h1v1h-1zM7 2h1v1h-1zM7 3h1v1h-1z" fill="#ff00ff"/></pattern>
<path id="c23f" d="M9 0h5v1h-5zM6 1h11v1h-11zM5 2h13v1h-13zM3 3h17v1h-17zM2 4h19v1h-19zM2 5h19v1h-19zM1 6h21v1h-21zM1 7h21v1h-21zM1 8h21v1h-21zM0 9h23v1h-23zM0 10h23v1h-23zM0 11h23v1h-23zM0 12h23v1h-23zM0 13h23v1h-23zM1 14h21v1h-21zM1 15h21v1h-21zM1 16h21v1h-21zM2 17h19v1h-19zM2 18h19v1h-19zM3 19h17v1h-17zM5 20h13v1h-13zM6 21h11v1h-11zM9 22h5v1h-5z"/><path id="c23b" d="M9 0h5v1h-5zM6 1h3v1h-3zM14 1h3v1h-3zM5 2h1v1h-1zM17 2h1v1h-1zM3 3h2v1h-2zM18 3h2v1h-2zM2 4h1v1h-1zM20 4h1v1h-1zM2 5h1v1h-1zM20 5h1v1h-1zM1 6h1v1h-1zM21 6h1v1h-1zM1 7h1v1h-1zM21 7h1v1h-1zM1 8h1v1h-1zM21 8h1v1h-1zM0 9h1v1h-1zM22 9h1v1h-1zM0 10h1v1h-1zM22 10h1v1h-1zM0 11h1v1h-1zM22 11h1v1h-1zM0 12h1v1h-1zM22 12h1v1h-1zM0 13h1v1h-1zM22 13h1v1h-1zM1 14h1v1h-1zM21 14h1v1h-1zM1 15h1v1h-1zM21 15h1v1h-1zM1 16h1v1h-1zM21 16h1v1h-1zM2 17h1v1h-1zM20 17h1v1h-1zM2 18h1v1h-1zM20 18h1v1h-1zM3 19h2v1h-2zM18 19h2v1h-2zM5 20h1v1h-1zM17 20h1v1h-1zM6 21h3v1h-3zM14 21h3v1h-3zM9 22h5v1h-5z"/>
<path id="c15f" d="M5 0h5v1h-5zM3 1h9v1h-9zM2 2h11v1h-11zM1 3h13v1h-13zM1 4h13v1h-13zM0 5h15v1h-15zM0 6h15v1h-15zM0 7h15v1h-15zM0 8h15v1h-15zM0 9h15v1h-15zM1 10h13v1h-13zM1 11h13v1h-13zM2 12h11v1h-11zM3 13h9v1h-9zM5 14h5v1h-5z"/><path id="c15b" d="M5 0h5v1h-5zM3 1h2v1h-2zM10 1h2v1h-2zM2 2h1v1h-1zM12 2h1v1h-1zM1 3h1v1h-1zM13 3h1v1h-1zM1 4h1v1h-1zM13 4h1v1h-1zM0 5h1v1h-1zM14 5h1v1h-1zM0 6h1v1h-1zM14 6h1v1h-1zM0 7h1v1h-1zM14 7h1v1h-1zM0 8h1v1h-1zM14 8h1v1h-1zM0 9h1v1h-1zM14 9h1v1h-1zM1 10h1v1h-1zM13 10h1v1h-1zM1 11h1v1h-1zM13 11h1v1h-1zM2 12h1v1h-1zM12 12h1v1h-1zM3 13h2v1h-2zM10 13h2v1h-2zM5 14h5v1h-5z"/><path id="octf" d="M5 0h6v1h-6zM4 1h8v1h-8zM3 2h10v1h-10zM2 3h12v1h-12zM1 4h14v1h-14zM0 5h16v1h-16zM0 6h16v1h-16zM0 7h16v1h-16zM0 8h16v1h-16zM0 9h16v1h-16zM1 10h14v1h-14zM2 11h12v1h-12zM3 12h10v1h-10zM4 13h8v1h-8zM5 14h6v1h-6z"/><path id="octb" d="M5 0h6v1h-6zM4 1h1v1h-1zM11 1h1v1h-1zM3 2h1v1h-1zM12 2h1v1h-1zM2 3h1v1h-1zM13 3h1v1h-1zM1 4h1v1h-1zM14 4h1v1h-1zM0 5h1v1h-1zM15 5h1v1h-1zM0 6h1v1h-1zM15 6h1v1h-1zM0 7h1v1h-1zM15 7h1v1h-1zM0 8h1v1h-1zM15 8h1v1h-1zM0 9h1v1h-1zM15 9h1v1h-1zM1 10h1v1h-1zM14 10h1v1h-1zM2 11h1v1h-1zM13 11h1v1h-1zM3 12h1v1h-1zM12 12h1v1h-1zM4 13h1v1h-1zM11 13h1v1h-1zM5 14h6v1h-6z"/>
<clipPath id="clh"><use href="#c23f" x="449" y="24"/><use href="#c23f" x="476" y="24"/><use href="#c23f" x="503" y="24"/><use href="#c23f" x="530" y="24"/><use href="#c23f" x="583" y="24"/><use href="#c23f" x="610" y="24"/><use href="#c23f" x="636" y="24"/><use href="#c23f" x="663" y="24"/><use href="#c23f" x="717" y="24"/><use href="#c23f" x="423" y="50"/><use href="#c23f" x="449" y="50"/><use href="#c23f" x="476" y="50"/><use href="#c23f" x="530" y="50"/><use href="#c23f" x="556" y="50"/><use href="#c23f" x="583" y="50"/><use href="#c23f" x="610" y="50"/><use href="#c23f" x="663" y="50"/><use href="#c23f" x="690" y="50"/><use href="#c23f" x="717" y="50"/><use href="#c23f" x="396" y="77"/><use href="#c23f" x="423" y="77"/><use href="#c23f" x="476" y="77"/><use href="#c23f" x="503" y="77"/><use href="#c23f" x="556" y="77"/><use href="#c23f" x="610" y="77"/><use href="#c23f" x="636" y="77"/><use href="#c23f" x="663" y="77"/><use href="#c23f" x="690" y="77"/><use href="#c23f" x="369" y="104"/><use href="#c23f" x="449" y="104"/><use href="#c23f" x="476" y="104"/><use href="#c23f" x="503" y="104"/><use href="#c23f" x="556" y="104"/><use href="#c23f" x="583" y="104"/><use href="#c23f" x="610" y="104"/><use href="#c23f" x="636" y="104"/><use href="#c23f" x="690" y="104"/><use href="#c23f" x="717" y="104"/><use href="#c23f" x="369" y="130"/><use href="#c23f" x="396" y="130"/><use href="#c23f" x="423" y="130"/><use href="#c23f" x="636" y="130"/><use href="#c23f" x="663" y="130"/><use href="#c23f" x="690" y="130"/><use href="#c23f" x="717" y="130"/><use href="#c23f" x="369" y="157"/><use href="#c23f" x="583" y="157"/><use href="#c23f" x="610" y="157"/><use href="#c23f" x="636" y="157"/><use href="#c23f" x="663" y="157"/><use href="#c23f" x="717" y="157"/><use href="#c23f" x="316" y="184"/><use href="#c23f" x="343" y="184"/><use href="#c23f" x="396" y="184"/><use href="#c23f" x="583" y="184"/><use href="#c23f" x="610" y="184"/><use href="#c23f" x="663" y="184"/><use href="#c23f" x="690" y="184"/><use href="#c23f" x="717" y="184"/><use href="#c23f" x="343" y="210"/><use href="#c23f" x="369" y="210"/><use href="#c23f" x="396" y="210"/><use href="#c23f" x="610" y="210"/><use href="#c23f" x="636" y="210"/><use href="#c23f" x="663" y="210"/><use href="#c23f" x="690" y="210"/><use href="#c23f" x="289" y="237"/><use href="#c23f" x="316" y="237"/><use href="#c23f" x="343" y="237"/><use href="#c23f" x="369" y="237"/><use href="#c23f" x="583" y="237"/><use href="#c23f" x="610" y="237"/><use href="#c23f" x="636" y="237"/><use href="#c23f" x="690" y="237"/><use href="#c23f" x="717" y="237"/><use href="#c23f" x="263" y="264"/><use href="#c23f" x="289" y="264"/><use href="#c23f" x="316" y="264"/><use href="#c23f" x="369" y="264"/><use href="#c23f" x="396" y="264"/><use href="#c23f" x="583" y="264"/><use href="#c23f" x="636" y="264"/><use href="#c23f" x="663" y="264"/><use href="#c23f" x="690" y="264"/><use href="#c23f" x="717" y="264"/><use href="#c23f" x="316" y="291"/><use href="#c23f" x="343" y="291"/><use href="#c23f" x="369" y="291"/><use href="#c23f" x="396" y="291"/><use href="#c23f" x="610" y="291"/><use href="#c23f" x="636" y="291"/><use href="#c23f" x="663" y="291"/><use href="#c23f" x="717" y="291"/><use href="#c23f" x="316" y="317"/><use href="#c23f" x="343" y="317"/><use href="#c23f" x="396" y="317"/><use href="#c23f" x="583" y="317"/><use href="#c23f" x="610" y="317"/><use href="#c23f" x="663" y="317"/><use href="#c23f" x="690" y="317"/><use href="#c23f" x="717" y="317"/><use href="#c23f" x="343" y="344"/><use href="#c23f" x="369" y="344"/><use href="#c23f" x="396" y="344"/><use href="#c23f" x="610" y="344"/><use href="#c23f" x="636" y="344"/><use href="#c23f" x="663" y="344"/><use href="#c23f" x="690" y="344"/><use href="#c23f" x="289" y="371"/><use href="#c23f" x="316" y="371"/><use href="#c23f" x="343" y="371"/><use href="#c23f" x="369" y="371"/><use href="#c23f" x="449" y="371"/><use href="#c23f" x="530" y="371"/><use href="#c23f" x="583" y="371"/><use href="#c23f" x="610" y="371"/><use href="#c23f" x="636" y="371"/><use href="#c23f" x="690" y="371"/><use href="#c23f" x="717" y="371"/><use href="#c23f" x="289" y="397"/><use href="#c23f" x="316" y="397"/><use href="#c23f" x="369" y="397"/><use href="#c23f" x="396" y="397"/><use href="#c23f" x="423" y="397"/><use href="#c23f" x="449" y="397"/><use href="#c23f" x="503" y="397"/><use href="#c23f" x="530" y="397"/><use href="#c23f" x="556" y="397"/><use href="#c23f" x="583" y="397"/><use href="#c23f" x="636" y="397"/><use href="#c23f" x="663" y="397"/><use href="#c23f" x="690" y="397"/><use href="#c23f" x="717" y="397"/><use href="#c23f" x="316" y="424"/><use href="#c23f" x="343" y="424"/><use href="#c23f" x="369" y="424"/><use href="#c23f" x="396" y="424"/><use href="#c23f" x="449" y="424"/><use href="#c23f" x="476" y="424"/><use href="#c23f" x="503" y="424"/><use href="#c23f" x="530" y="424"/><use href="#c23f" x="583" y="424"/><use href="#c23f" x="610" y="424"/><use href="#c23f" x="636" y="424"/><use href="#c23f" x="663" y="424"/><use href="#c23f" x="717" y="424"/><use href="#c23f" x="289" y="451"/><use href="#c23f" x="316" y="451"/><use href="#c23f" x="343" y="451"/><use href="#c23f" x="396" y="451"/><use href="#c23f" x="423" y="451"/><use href="#c23f" x="449" y="451"/><use href="#c23f" x="476" y="451"/><use href="#c23f" x="530" y="451"/><use href="#c23f" x="556" y="451"/><use href="#c23f" x="583" y="451"/><use href="#c23f" x="610" y="451"/><use href="#c23f" x="663" y="451"/><use href="#c23f" x="690" y="451"/><use href="#c23f" x="717" y="451"/><use href="#c23f" x="289" y="478"/><use href="#c23f" x="343" y="478"/><use href="#c23f" x="369" y="478"/><use href="#c23f" x="396" y="478"/><use href="#c23f" x="423" y="478"/><use href="#c23f" x="476" y="478"/><use href="#c23f" x="503" y="478"/><use href="#c23f" x="530" y="478"/><use href="#c23f" x="556" y="478"/><use href="#c23f" x="610" y="478"/><use href="#c23f" x="636" y="478"/><use href="#c23f" x="663" y="478"/><use href="#c23f" x="690" y="478"/><use href="#octf" x="152" y="95"/><use href="#octf" x="152" y="141"/><use href="#octf" x="152" y="164"/></clipPath>
<clipPath id="clm"><use href="#c23f" x="369" y="24"/><use href="#c23f" x="530" y="77"/><use href="#c23f" x="423" y="104"/><use href="#c23f" x="476" y="130"/><use href="#c23f" x="396" y="157"/><use href="#c23f" x="583" y="291"/><use href="#c23f" x="289" y="317"/><use href="#c23f" x="423" y="371"/><use href="#c23f" x="503" y="371"/><use href="#c23f" x="556" y="371"/></clipPath>
</defs>
<rect x="7.5" y="34.5" width="167" height="197" fill="#c0c0c0" stroke="#008000"/>
<rect x="45.5" y="11.5" width="91" height="106" fill="#fff" stroke="#808080"/>
<rect x="53.5" y="133.5" width="75" height="75" fill="#fff" stroke="#000"/>
<path d="M175 185.5L243 201M175 217L243 226" stroke="#000" stroke-dasharray="3 3" fill="none" shape-rendering="auto"/>
<rect x="244.5" y="5.5" width="514" height="514" fill="#c0c0c0" stroke="#000"/>
<use href="#c23f" x="263" y="24" fill="#ff00ff"/><use href="#c23f" x="289" y="24" fill="#000000"/><use href="#c23f" x="316" y="24" fill="#ff00ff"/><use href="#c23f" x="343" y="24" fill="#ff00ff"/><use href="#c23f" x="396" y="24" fill="#00ffff"/><use href="#c23f" x="423" y="24" fill="#ff0000"/><use href="#c23f" x="556" y="24" fill="#000000"/><use href="#c23f" x="690" y="24" fill="#ff0000"/><use href="#c23f" x="263" y="50" fill="#ff00ff"/><use href="#c23f" x="289" y="50" fill="#ff00ff"/><use href="#c23f" x="316" y="50" fill="#ff00ff"/><use href="#c23f" x="343" y="50" fill="#ff00ff"/><use href="#c23f" x="369" y="50" fill="#000000"/><use href="#c23f" x="396" y="50" fill="#ff00ff"/><use href="#c23f" x="503" y="50" fill="#ff0000"/><use href="#c23f" x="636" y="50" fill="#000000"/><use href="#c23f" x="263" y="77" fill="#ff00ff"/><use href="#c23f" x="289" y="77" fill="#ff00ff"/><use href="#c23f" x="316" y="77" fill="#ff0000"/><use href="#c23f" x="343" y="77" fill="#ff00ff"/><use href="#c23f" x="369" y="77" fill="#ff00ff"/><use href="#c23f" x="449" y="77" fill="#000000"/><use href="#c23f" x="583" y="77" fill="#ff0000"/><use href="#c23f" x="717" y="77" fill="#000000"/><use href="#c23f" x="263" y="104" fill="#000000"/><use href="#c23f" x="289" y="104" fill="#ff00ff"/><use href="#c23f" x="316" y="104" fill="#ff00ff"/><use href="#c23f" x="343" y="104" fill="#ff00ff"/><use href="#c23f" x="396" y="104" fill="#ff0000"/><use href="#c23f" x="530" y="104" fill="#000000"/><use href="#c23f" x="663" y="104" fill="#ff0000"/><use href="#c23f" x="263" y="130" fill="#ff00ff"/><use href="#c23f" x="289" y="130" fill="#ff00ff"/><use href="#c23f" x="316" y="130" fill="#ff00ff"/><use href="#c23f" x="343" y="130" fill="#000000"/><use href="#c23f" x="449" y="130" fill="#ff0000"/><use href="#c23f" x="503" y="130" fill="#008000"/><use href="#c23f" x="530" y="130" fill="#008000"/><use href="#c23f" x="556" y="130" fill="#008000"/><use href="#c23f" x="583" y="130" fill="#008000"/><use href="#c23f" x="610" y="130" fill="#000000"/><use href="#c23f" x="263" y="157" fill="#ff00ff"/><use href="#c23f" x="289" y="157" fill="#ff0000"/><use href="#c23f" x="316" y="157" fill="#ff00ff"/><use href="#c23f" x="343" y="157" fill="#ff00ff"/><use href="#c23f" x="423" y="157" fill="#000000"/><use href="#c23f" x="449" y="157" fill="#ff0000"/><use href="#c23f" x="476" y="157" fill="#000000"/><use href="#c23f" x="503" y="157" fill="#ff0000"/><use href="#c23f" x="530" y="157" fill="#000000"/><use href="#c23f" x="556" y="157" fill="#ff0000"/><use href="#c23f" x="690" y="157" fill="#000000"/><use href="#c23f" x="263" y="184" fill="#ff00ff"/><use href="#c23f" x="289" y="184" fill="#ff00ff"/><use href="#c23f" x="369" y="184" fill="#ff0000"/><use href="#c23f" x="423" y="184" fill="#ff0000"/><use href="#c23f" x="449" y="184" fill="#000000"/><use href="#c23f" x="476" y="184" fill="#ff0000"/><use href="#c23f" x="503" y="184" fill="#000000"/><use href="#c23f" x="530" y="184" fill="#ff0000"/><use href="#c23f" x="556" y="184" fill="#000000"/><use href="#c23f" x="636" y="184" fill="#ff0000"/><use href="#c23f" x="263" y="210" fill="#ff00ff"/><use href="#c23f" x="289" y="210" fill="#00ffff"/><use href="#c23f" x="316" y="210" fill="#000000"/><use href="#c23f" x="423" y="210" fill="#000000"/><use href="#c23f" x="449" y="210" fill="#ff0000"/><use href="#c23f" x="476" y="210" fill="#000000"/><use href="#c23f" x="503" y="210" fill="#ff0000"/><use href="#c23f" x="530" y="210" fill="#000000"/><use href="#c23f" x="556" y="210" fill="#ff0000"/><use href="#c23f" x="583" y="210" fill="#000000"/><use href="#c23f" x="717" y="210" fill="#ff0000"/><use href="#c23f" x="263" y="237" fill="#ff0000"/><use href="#c23f" x="396" y="237" fill="#000000"/><use href="#c23f" x="423" y="237" fill="#ff0000"/><use href="#c23f" x="449" y="237" fill="#000000"/><use href="#c23f" x="476" y="237" fill="#c0c0c0"/><use href="#c23f" x="503" y="237" fill="#c0c0c0"/><use href="#c23f" x="530" y="237" fill="#ff0000"/><use href="#c23f" x="556" y="237" fill="#000000"/><use href="#c23f" x="663" y="237" fill="#000000"/><use href="#c23f" x="343" y="264" fill="#ff0000"/><use href="#c23f" x="423" y="264" fill="#000000"/><use href="#c23f" x="449" y="264" fill="#ff0000"/><use href="#c23f" x="476" y="264" fill="#c0c0c0"/><use href="#c23f" x="503" y="264" fill="#c0c0c0"/><use href="#c23f" x="530" y="264" fill="#000000"/><use href="#c23f" x="556" y="264" fill="#ff0000"/><use href="#c23f" x="610" y="264" fill="#ff0000"/><use href="#c23f" x="263" y="291" fill="#00ffff"/><use href="#c23f" x="289" y="291" fill="#000000"/><use href="#c23f" x="423" y="291" fill="#ff0000"/><use href="#c23f" x="449" y="291" fill="#000000"/><use href="#c23f" x="476" y="291" fill="#c0c0c0"/><use href="#c23f" x="503" y="291" fill="#c0c0c0"/><use href="#c23f" x="530" y="291" fill="#ff0000"/><use href="#c23f" x="556" y="291" fill="#000000"/><use href="#c23f" x="690" y="291" fill="#ff0000"/><use href="#c23f" x="263" y="317" fill="#00ffff"/><use href="#c23f" x="369" y="317" fill="#000000"/><use href="#c23f" x="423" y="317" fill="#000000"/><use href="#c23f" x="449" y="317" fill="#ff0000"/><use href="#c23f" x="476" y="317" fill="#000000"/><use href="#c23f" x="503" y="317" fill="#ff0000"/><use href="#c23f" x="530" y="317" fill="#000000"/><use href="#c23f" x="556" y="317" fill="#ff0000"/><use href="#c23f" x="636" y="317" fill="#000000"/><use href="#c23f" x="263" y="344" fill="#ff00ff"/><use href="#c23f" x="289" y="344" fill="#00ffff"/><use href="#c23f" x="316" y="344" fill="#ff0000"/><use href="#c23f" x="423" y="344" fill="#ff0000"/><use href="#c23f" x="449" y="344" fill="#000000"/><use href="#c23f" x="476" y="344" fill="#ff0000"/><use href="#c23f" x="503" y="344" fill="#000000"/><use href="#c23f" x="530" y="344" fill="#ff0000"/><use href="#c23f" x="556" y="344" fill="#000000"/><use href="#c23f" x="583" y="344" fill="#ff0000"/><use href="#c23f" x="717" y="344" fill="#000000"/><use href="#c23f" x="263" y="371" fill="#000000"/><use href="#c23f" x="396" y="371" fill="#ff0000"/><use href="#c23f" x="476" y="371" fill="#c0c0c0"/><use href="#c23f" x="663" y="371" fill="#ff0000"/><use href="#c23f" x="263" y="397" fill="#00ffff"/><use href="#c23f" x="343" y="397" fill="#000000"/><use href="#c23f" x="476" y="397" fill="#ff0000"/><use href="#c23f" x="610" y="397" fill="#000000"/><use href="#c23f" x="263" y="424" fill="#00ffff"/><use href="#c23f" x="289" y="424" fill="#ff0000"/><use href="#c23f" x="423" y="424" fill="#000000"/><use href="#c23f" x="556" y="424" fill="#ff0000"/><use href="#c23f" x="690" y="424" fill="#000000"/><use href="#c23f" x="263" y="451" fill="#ff00ff"/><use href="#c23f" x="369" y="451" fill="#ff0000"/><use href="#c23f" x="503" y="451" fill="#000000"/><use href="#c23f" x="636" y="451" fill="#ff0000"/><use href="#c23f" x="263" y="478" fill="#ff00ff"/><use href="#c23f" x="316" y="478" fill="#000000"/><use href="#c23f" x="449" y="478" fill="#ff0000"/><use href="#c23f" x="583" y="478" fill="#000000"/><use href="#c23f" x="717" y="478" fill="#ff0000"/><use href="#c15f" x="15" y="95" fill="#fff"/><use href="#c15f" x="15" y="118" fill="#008000"/><use href="#octf" x="152" y="118" fill="#f00"/><use href="#c15f" x="15" y="141" fill="#008000"/><use href="#c15f" x="15" y="164" fill="#008000"/><use href="#c15f" x="15" y="186" fill="#008000"/><use href="#octf" x="152" y="186" fill="#f0f"/><use href="#c15f" x="15" y="209" fill="#000"/><use href="#octf" x="152" y="209" fill="#f0f"/>
<rect x="0" y="0" width="760" height="521" fill="url(#hc)" clip-path="url(#clh)"/>
<rect x="0" y="0" width="760" height="521" fill="url(#hm)" clip-path="url(#clm)"/>
<use href="#c23b" x="263" y="24"/><use href="#c23b" x="289" y="24"/><use href="#c23b" x="316" y="24"/><use href="#c23b" x="343" y="24"/><use href="#c23b" x="369" y="24"/><use href="#c23b" x="396" y="24"/><use href="#c23b" x="423" y="24"/><use href="#c23b" x="449" y="24"/><use href="#c23b" x="476" y="24"/><use href="#c23b" x="503" y="24"/><use href="#c23b" x="530" y="24"/><use href="#c23b" x="556" y="24"/><use href="#c23b" x="583" y="24"/><use href="#c23b" x="610" y="24"/><use href="#c23b" x="636" y="24"/><use href="#c23b" x="663" y="24"/><use href="#c23b" x="690" y="24"/><use href="#c23b" x="717" y="24"/><use href="#c23b" x="263" y="50"/><use href="#c23b" x="289" y="50"/><use href="#c23b" x="316" y="50"/><use href="#c23b" x="343" y="50"/><use href="#c23b" x="369" y="50"/><use href="#c23b" x="396" y="50"/><use href="#c23b" x="423" y="50"/><use href="#c23b" x="449" y="50"/><use href="#c23b" x="476" y="50"/><use href="#c23b" x="503" y="50"/><use href="#c23b" x="530" y="50"/><use href="#c23b" x="556" y="50"/><use href="#c23b" x="583" y="50"/><use href="#c23b" x="610" y="50"/><use href="#c23b" x="636" y="50"/><use href="#c23b" x="663" y="50"/><use href="#c23b" x="690" y="50"/><use href="#c23b" x="717" y="50"/><use href="#c23b" x="263" y="77"/><use href="#c23b" x="289" y="77"/><use href="#c23b" x="316" y="77"/><use href="#c23b" x="343" y="77"/><use href="#c23b" x="369" y="77"/><use href="#c23b" x="396" y="77"/><use href="#c23b" x="423" y="77"/><use href="#c23b" x="449" y="77"/><use href="#c23b" x="476" y="77"/><use href="#c23b" x="503" y="77"/><use href="#c23b" x="530" y="77"/><use href="#c23b" x="556" y="77"/><use href="#c23b" x="583" y="77"/><use href="#c23b" x="610" y="77"/><use href="#c23b" x="636" y="77"/><use href="#c23b" x="663" y="77"/><use href="#c23b" x="690" y="77"/><use href="#c23b" x="717" y="77"/><use href="#c23b" x="263" y="104"/><use href="#c23b" x="289" y="104"/><use href="#c23b" x="316" y="104"/><use href="#c23b" x="343" y="104"/><use href="#c23b" x="369" y="104"/><use href="#c23b" x="396" y="104"/><use href="#c23b" x="423" y="104"/><use href="#c23b" x="449" y="104"/><use href="#c23b" x="476" y="104"/><use href="#c23b" x="503" y="104"/><use href="#c23b" x="530" y="104"/><use href="#c23b" x="556" y="104"/><use href="#c23b" x="583" y="104"/><use href="#c23b" x="610" y="104"/><use href="#c23b" x="636" y="104"/><use href="#c23b" x="663" y="104"/><use href="#c23b" x="690" y="104"/><use href="#c23b" x="717" y="104"/><use href="#c23b" x="263" y="130"/><use href="#c23b" x="289" y="130"/><use href="#c23b" x="316" y="130"/><use href="#c23b" x="343" y="130"/><use href="#c23b" x="369" y="130"/><use href="#c23b" x="396" y="130"/><use href="#c23b" x="423" y="130"/><use href="#c23b" x="449" y="130"/><use href="#c23b" x="476" y="130"/><use href="#c23b" x="503" y="130"/><use href="#c23b" x="530" y="130"/><use href="#c23b" x="556" y="130"/><use href="#c23b" x="583" y="130"/><use href="#c23b" x="610" y="130"/><use href="#c23b" x="636" y="130"/><use href="#c23b" x="663" y="130"/><use href="#c23b" x="690" y="130"/><use href="#c23b" x="717" y="130"/><use href="#c23b" x="263" y="157"/><use href="#c23b" x="289" y="157"/><use href="#c23b" x="316" y="157"/><use href="#c23b" x="343" y="157"/><use href="#c23b" x="369" y="157"/><use href="#c23b" x="396" y="157"/><use href="#c23b" x="423" y="157"/><use href="#c23b" x="449" y="157"/><use href="#c23b" x="476" y="157"/><use href="#c23b" x="503" y="157"/><use href="#c23b" x="530" y="157"/><use href="#c23b" x="556" y="157"/><use href="#c23b" x="583" y="157"/><use href="#c23b" x="610" y="157"/><use href="#c23b" x="636" y="157"/><use href="#c23b" x="663" y="157"/><use href="#c23b" x="690" y="157"/><use href="#c23b" x="717" y="157"/><use href="#c23b" x="263" y="184"/><use href="#c23b" x="289" y="184"/><use href="#c23b" x="316" y="184"/><use href="#c23b" x="343" y="184"/><use href="#c23b" x="369" y="184"/><use href="#c23b" x="396" y="184"/><use href="#c23b" x="423" y="184"/><use href="#c23b" x="449" y="184"/><use href="#c23b" x="476" y="184"/><use href="#c23b" x="503" y="184"/><use href="#c23b" x="530" y="184"/><use href="#c23b" x="556" y="184"/><use href="#c23b" x="583" y="184"/><use href="#c23b" x="610" y="184"/><use href="#c23b" x="636" y="184"/><use href="#c23b" x="663" y="184"/><use href="#c23b" x="690" y="184"/><use href="#c23b" x="717" y="184"/><use href="#c23b" x="263" y="210"/><use href="#c23b" x="289" y="210"/><use href="#c23b" x="316" y="210"/><use href="#c23b" x="343" y="210"/><use href="#c23b" x="369" y="210"/><use href="#c23b" x="396" y="210"/><use href="#c23b" x="423" y="210"/><use href="#c23b" x="449" y="210"/><use href="#c23b" x="476" y="210"/><use href="#c23b" x="503" y="210"/><use href="#c23b" x="530" y="210"/><use href="#c23b" x="556" y="210"/><use href="#c23b" x="583" y="210"/><use href="#c23b" x="610" y="210"/><use href="#c23b" x="636" y="210"/><use href="#c23b" x="663" y="210"/><use href="#c23b" x="690" y="210"/><use href="#c23b" x="717" y="210"/><use href="#c23b" x="263" y="237"/><use href="#c23b" x="289" y="237"/><use href="#c23b" x="316" y="237"/><use href="#c23b" x="343" y="237"/><use href="#c23b" x="369" y="237"/><use href="#c23b" x="396" y="237"/><use href="#c23b" x="423" y="237"/><use href="#c23b" x="449" y="237"/><use href="#c23b" x="476" y="237"/><use href="#c23b" x="503" y="237"/><use href="#c23b" x="530" y="237"/><use href="#c23b" x="556" y="237"/><use href="#c23b" x="583" y="237"/><use href="#c23b" x="610" y="237"/><use href="#c23b" x="636" y="237"/><use href="#c23b" x="663" y="237"/><use href="#c23b" x="690" y="237"/><use href="#c23b" x="717" y="237"/><use href="#c23b" x="263" y="264"/><use href="#c23b" x="289" y="264"/><use href="#c23b" x="316" y="264"/><use href="#c23b" x="343" y="264"/><use href="#c23b" x="369" y="264"/><use href="#c23b" x="396" y="264"/><use href="#c23b" x="423" y="264"/><use href="#c23b" x="449" y="264"/><use href="#c23b" x="476" y="264"/><use href="#c23b" x="503" y="264"/><use href="#c23b" x="530" y="264"/><use href="#c23b" x="556" y="264"/><use href="#c23b" x="583" y="264"/><use href="#c23b" x="610" y="264"/><use href="#c23b" x="636" y="264"/><use href="#c23b" x="663" y="264"/><use href="#c23b" x="690" y="264"/><use href="#c23b" x="717" y="264"/><use href="#c23b" x="263" y="291"/><use href="#c23b" x="289" y="291"/><use href="#c23b" x="316" y="291"/><use href="#c23b" x="343" y="291"/><use href="#c23b" x="369" y="291"/><use href="#c23b" x="396" y="291"/><use href="#c23b" x="423" y="291"/><use href="#c23b" x="449" y="291"/><use href="#c23b" x="476" y="291"/><use href="#c23b" x="503" y="291"/><use href="#c23b" x="530" y="291"/><use href="#c23b" x="556" y="291"/><use href="#c23b" x="583" y="291"/><use href="#c23b" x="610" y="291"/><use href="#c23b" x="636" y="291"/><use href="#c23b" x="663" y="291"/><use href="#c23b" x="690" y="291"/><use href="#c23b" x="717" y="291"/><use href="#c23b" x="263" y="317"/><use href="#c23b" x="289" y="317"/><use href="#c23b" x="316" y="317"/><use href="#c23b" x="343" y="317"/><use href="#c23b" x="369" y="317"/><use href="#c23b" x="396" y="317"/><use href="#c23b" x="423" y="317"/><use href="#c23b" x="449" y="317"/><use href="#c23b" x="476" y="317"/><use href="#c23b" x="503" y="317"/><use href="#c23b" x="530" y="317"/><use href="#c23b" x="556" y="317"/><use href="#c23b" x="583" y="317"/><use href="#c23b" x="610" y="317"/><use href="#c23b" x="636" y="317"/><use href="#c23b" x="663" y="317"/><use href="#c23b" x="690" y="317"/><use href="#c23b" x="717" y="317"/><use href="#c23b" x="263" y="344"/><use href="#c23b" x="289" y="344"/><use href="#c23b" x="316" y="344"/><use href="#c23b" x="343" y="344"/><use href="#c23b" x="369" y="344"/><use href="#c23b" x="396" y="344"/><use href="#c23b" x="423" y="344"/><use href="#c23b" x="449" y="344"/><use href="#c23b" x="476" y="344"/><use href="#c23b" x="503" y="344"/><use href="#c23b" x="530" y="344"/><use href="#c23b" x="556" y="344"/><use href="#c23b" x="583" y="344"/><use href="#c23b" x="610" y="344"/><use href="#c23b" x="636" y="344"/><use href="#c23b" x="663" y="344"/><use href="#c23b" x="690" y="344"/><use href="#c23b" x="717" y="344"/><use href="#c23b" x="263" y="371"/><use href="#c23b" x="289" y="371"/><use href="#c23b" x="316" y="371"/><use href="#c23b" x="343" y="371"/><use href="#c23b" x="369" y="371"/><use href="#c23b" x="396" y="371"/><use href="#c23b" x="423" y="371"/><use href="#c23b" x="449" y="371"/><use href="#c23b" x="476" y="371"/><use href="#c23b" x="503" y="371"/><use href="#c23b" x="530" y="371"/><use href="#c23b" x="556" y="371"/><use href="#c23b" x="583" y="371"/><use href="#c23b" x="610" y="371"/><use href="#c23b" x="636" y="371"/><use href="#c23b" x="663" y="371"/><use href="#c23b" x="690" y="371"/><use href="#c23b" x="717" y="371"/><use href="#c23b" x="263" y="397"/><use href="#c23b" x="289" y="397"/><use href="#c23b" x="316" y="397"/><use href="#c23b" x="343" y="397"/><use href="#c23b" x="369" y="397"/><use href="#c23b" x="396" y="397"/><use href="#c23b" x="423" y="397"/><use href="#c23b" x="449" y="397"/><use href="#c23b" x="476" y="397"/><use href="#c23b" x="503" y="397"/><use href="#c23b" x="530" y="397"/><use href="#c23b" x="556" y="397"/><use href="#c23b" x="583" y="397"/><use href="#c23b" x="610" y="397"/><use href="#c23b" x="636" y="397"/><use href="#c23b" x="663" y="397"/><use href="#c23b" x="690" y="397"/><use href="#c23b" x="717" y="397"/><use href="#c23b" x="263" y="424"/><use href="#c23b" x="289" y="424"/><use href="#c23b" x="316" y="424"/><use href="#c23b" x="343" y="424"/><use href="#c23b" x="369" y="424"/><use href="#c23b" x="396" y="424"/><use href="#c23b" x="423" y="424"/><use href="#c23b" x="449" y="424"/><use href="#c23b" x="476" y="424"/><use href="#c23b" x="503" y="424"/><use href="#c23b" x="530" y="424"/><use href="#c23b" x="556" y="424"/><use href="#c23b" x="583" y="424"/><use href="#c23b" x="610" y="424"/><use href="#c23b" x="636" y="424"/><use href="#c23b" x="663" y="424"/><use href="#c23b" x="690" y="424"/><use href="#c23b" x="717" y="424"/><use href="#c23b" x="263" y="451"/><use href="#c23b" x="289" y="451"/><use href="#c23b" x="316" y="451"/><use href="#c23b" x="343" y="451"/><use href="#c23b" x="369" y="451"/><use href="#c23b" x="396" y="451"/><use href="#c23b" x="423" y="451"/><use href="#c23b" x="449" y="451"/><use href="#c23b" x="476" y="451"/><use href="#c23b" x="503" y="451"/><use href="#c23b" x="530" y="451"/><use href="#c23b" x="556" y="451"/><use href="#c23b" x="583" y="451"/><use href="#c23b" x="610" y="451"/><use href="#c23b" x="636" y="451"/><use href="#c23b" x="663" y="451"/><use href="#c23b" x="690" y="451"/><use href="#c23b" x="717" y="451"/><use href="#c23b" x="263" y="478"/><use href="#c23b" x="289" y="478"/><use href="#c23b" x="316" y="478"/><use href="#c23b" x="343" y="478"/><use href="#c23b" x="369" y="478"/><use href="#c23b" x="396" y="478"/><use href="#c23b" x="423" y="478"/><use href="#c23b" x="449" y="478"/><use href="#c23b" x="476" y="478"/><use href="#c23b" x="503" y="478"/><use href="#c23b" x="530" y="478"/><use href="#c23b" x="556" y="478"/><use href="#c23b" x="583" y="478"/><use href="#c23b" x="610" y="478"/><use href="#c23b" x="636" y="478"/><use href="#c23b" x="663" y="478"/><use href="#c23b" x="690" y="478"/><use href="#c23b" x="717" y="478"/><use href="#c15b" x="15" y="95"/><use href="#octb" x="152" y="95"/><use href="#c15b" x="15" y="118"/><use href="#octb" x="152" y="118"/><use href="#c15b" x="15" y="141"/><use href="#octb" x="152" y="141"/><use href="#c15b" x="15" y="164"/><use href="#octb" x="152" y="164"/><use href="#c15b" x="15" y="186"/><use href="#octb" x="152" y="186"/><use href="#c15b" x="15" y="209"/><use href="#octb" x="152" y="209"/>
</svg>
<div class="t" style="left:347px;top:396.69px;font-size:11px;line-height:11px;color:#000;transform:scaleX(1.0345);transform-origin:0 0;"><span class="m" id="m24">CableType: ssmaj</span></div>
<div class="t" style="left:347px;top:408.69px;font-size:11px;line-height:11px;color:#000;transform:scaleX(0.9836);transform-origin:0 0;"><span class="m" id="m25">CableName:</span></div>
<div class="t" style="left:347px;top:420.69px;font-size:11px;line-height:11px;color:#000;transform:scaleX(1.0349);transform-origin:0 0;"><span class="m" id="m26">SuperSmartJTAG</span></div>
<div class="t" style="left:584px;top:671.84px;font-size:12px;line-height:12px;color:#000;transform:scaleX(0.9333);transform-origin:0 0;"><span class="m" id="m27">View: TOP VIEW</span></div>
<div class="t" style="left:584px;top:683.84px;font-size:12px;line-height:12px;color:#000;transform:scaleX(0.8814);transform-origin:0 0;"><span class="m" id="m28">Username:</span></div>
<div class="t" style="left:584px;top:695.84px;font-size:12px;line-height:12px;color:#000;transform:scaleX(0.8941);transform-origin:0 0;"><span class="m" id="m29">Partname: XC7A100T_CSG324</span></div>
<div class="t" style="left:584px;top:707.84px;font-size:12px;line-height:12px;color:#000;transform:scaleX(0.9167);transform-origin:0 0;"><span class="m" id="m30">Pkgtype: CSG324</span></div>
<div class="t" style="left:584px;top:719.84px;font-size:12px;line-height:12px;color:#000;transform:scaleX(0.9444);transform-origin:0 0;"><span class="m" id="m31">State: RUN (normal operation)</span></div>
<div class="t" style="left:584px;top:731.84px;font-size:12px;line-height:12px;color:#000;transform:scaleX(0.9497);transform-origin:0 0;"><span class="m" id="m32">Data reg: Boundary scan regisger</span></div>
<div class="a" style="left:1263px;top:99px;width:1px;height:689px;background:#a0a0a0"></div>
<div class="a" style="left:1264px;top:115px;width:16px;height:640px;background-color:#fff;background-image:linear-gradient(45deg,#f0f0f0 25%,transparent 25%,transparent 75%,#f0f0f0 75%),linear-gradient(45deg,#f0f0f0 25%,transparent 25%,transparent 75%,#f0f0f0 75%);background-size:2px 2px;background-position:0 0,1px 1px"></div>
<div class="a" style="left:1264px;top:99px;width:16px;height:16px;background:#f0f0f0;border-top:1px solid #f0f0f0;border-left:1px solid #f0f0f0;border-right:1px solid #696969;border-bottom:1px solid #696969;box-shadow:inset 1px 1px 0 #fff,inset -1px -1px 0 #a0a0a0"></div>
<svg class="a" style="left:1268px;top:104px" width="8" height="5"><path d="M0 4.5H8L4 0.5Z" fill="#000"/></svg>
<div class="a" style="left:1264px;top:755px;width:16px;height:17px;background:#f0f0f0;border-top:1px solid #f0f0f0;border-left:1px solid #f0f0f0;border-right:1px solid #696969;border-bottom:1px solid #696969;box-shadow:inset 1px 1px 0 #fff,inset -1px -1px 0 #a0a0a0"></div>
<svg class="a" style="left:1268px;top:761px" width="8" height="5"><path d="M0 0.5H8L4 4.5Z" fill="#000"/></svg>
<div class="a" style="left:1264px;top:428px;width:16px;height:17px;background:#f0f0f0;border-top:1px solid #f0f0f0;border-left:1px solid #f0f0f0;border-right:1px solid #696969;border-bottom:1px solid #696969;box-shadow:inset 1px 1px 0 #fff,inset -1px -1px 0 #a0a0a0"></div>
<div class="a" style="left:199px;top:772px;width:1048px;height:16px;background-color:#fff;background-image:linear-gradient(45deg,#f0f0f0 25%,transparent 25%,transparent 75%,#f0f0f0 75%),linear-gradient(45deg,#f0f0f0 25%,transparent 25%,transparent 75%,#f0f0f0 75%);background-size:2px 2px;background-position:0 0,1px 1px"></div>
<div class="a" style="left:183px;top:772px;width:17px;height:16px;background:#f0f0f0;border-top:1px solid #f0f0f0;border-left:1px solid #f0f0f0;border-right:1px solid #696969;border-bottom:1px solid #696969;box-shadow:inset 1px 1px 0 #fff,inset -1px -1px 0 #a0a0a0"></div>
<svg class="a" style="left:189px;top:776px" width="5" height="8"><path d="M4.5 0V8L0.5 4Z" fill="#000"/></svg>
<div class="a" style="left:1247px;top:772px;width:17px;height:16px;background:#f0f0f0;border-top:1px solid #f0f0f0;border-left:1px solid #f0f0f0;border-right:1px solid #696969;border-bottom:1px solid #696969;box-shadow:inset 1px 1px 0 #fff,inset -1px -1px 0 #a0a0a0"></div>
<svg class="a" style="left:1253px;top:776px" width="5" height="8"><path d="M0.5 0V8L4.5 4Z" fill="#000"/></svg>
<div class="a" style="left:697px;top:772px;width:17px;height:16px;background:#f0f0f0;border-top:1px solid #f0f0f0;border-left:1px solid #f0f0f0;border-right:1px solid #696969;border-bottom:1px solid #696969;box-shadow:inset 1px 1px 0 #fff,inset -1px -1px 0 #a0a0a0"></div>
<div class="a" style="left:1264px;top:772px;width:16px;height:16px;background:#f0f0f0;border-right:1px solid #a0a0a0;border-bottom:1px solid #a0a0a0"></div>
<div class="a" style="left:0px;top:788px;width:1280px;height:21px;background:#f0f0f0"></div>
<div class="a" style="left:0px;top:808px;width:1280px;height:1px;background:#a0a0a0"></div>
<div class="a" style="left:0px;top:809px;width:1280px;height:1px;background:#fff"></div>
<div class="a" style="left:1px;top:788px;width:71px;height:20px;background:#f0f0f0;border-right:1px solid #696969;border-bottom:1px solid #696969;box-shadow:inset -1px -1px 0 #a0a0a0, inset 1px 0 0 #fff"></div>
<div class="t" style="left:7px;top:793.69px;font-size:11px;line-height:11px;color:#000;transform:scaleX(1.0000);transform-origin:0 0;"><span class="m" id="m33">ProjectTree</span></div>
<div class="a" style="left:185px;top:788px;width:84px;height:20px;background:#f0f0f0;border-right:1px solid #696969;border-bottom:2px solid #696969;box-shadow:inset -1px 0 0 #a0a0a0, inset 1px 0 0 #fff"></div>
<svg class="a" style="left:191px;top:790px" width="16" height="16" viewBox="0 0 16 16"><rect x="0" y="0" width="16" height="16" fill="#c4c4c4"/><path d="M15.5 0V16M0 15.5H16" stroke="#808080"/><path d="M0.5 0V16M0 0.5H16" stroke="#a0a0a0"/><rect x="2.0" y="2.0" width="2" height="2" fill="#f0a8c8"/><rect x="4.6" y="2.0" width="2" height="2" fill="#ff0000"/><rect x="7.2" y="2.0" width="2" height="2" fill="#20a050"/><rect x="9.8" y="2.0" width="2" height="2" fill="#ffff00"/><rect x="12.4" y="2.0" width="2" height="2" fill="#c8f0f0"/><rect x="2.0" y="4.6" width="2" height="2" fill="#000"/><rect x="4.6" y="4.6" width="2" height="2" fill="#f0a8c8"/><rect x="7.2" y="4.6" width="2" height="2" fill="#c8f0f0"/><rect x="9.8" y="4.6" width="2" height="2" fill="#ff0000"/><rect x="12.4" y="4.6" width="2" height="2" fill="#20a050"/><rect x="2.0" y="7.2" width="2" height="2" fill="#000"/><rect x="4.6" y="7.2" width="2" height="2" fill="#ffff00"/><rect x="7.2" y="7.2" width="2" height="2" fill="#f0a8c8"/><rect x="9.8" y="7.2" width="2" height="2" fill="#c8f0f0"/><rect x="12.4" y="7.2" width="2" height="2" fill="#c8f0f0"/><rect x="2.0" y="9.8" width="2" height="2" fill="#f0a8c8"/><rect x="4.6" y="9.8" width="2" height="2" fill="#c8f0f0"/><rect x="7.2" y="9.8" width="2" height="2" fill="#000"/><rect x="9.8" y="9.8" width="2" height="2" fill="#c8f0f0"/><rect x="12.4" y="9.8" width="2" height="2" fill="#20a050"/><rect x="2.0" y="12.4" width="2" height="2" fill="#c8f0f0"/><rect x="4.6" y="12.4" width="2" height="2" fill="#ff0000"/><rect x="7.2" y="12.4" width="2" height="2" fill="#c8f0f0"/><rect x="9.8" y="12.4" width="2" height="2" fill="#ffff00"/><rect x="12.4" y="12.4" width="2" height="2" fill="#c8f0f0"/></svg>
<div class="t" style="left:214px;top:793.69px;font-size:11px;line-height:11px;color:#000;transform:scaleX(0.9792);transform-origin:0 0;"><span class="m" id="m34">MainView</span></div>
<div class="a" style="left:269px;top:788px;width:136px;height:18px;background:#f0f0f0;border-right:1px solid #696969;border-bottom:1px solid #696969;box-shadow:inset -1px -1px 0 #a0a0a0, inset 1px 0 0 #fff"></div>
<svg class="a" style="left:274px;top:789px" width="16" height="16" viewBox="0 0 16 16"><rect x="0.5" y="0.5" width="15" height="15" rx="2.5" fill="#c8f4c0" stroke="#40a040"/><path d="M1 4.5H3.5V1.5H5.5V4.5H7.5V1.5H9.5V4.5H11.5V1.5H13.5V4.5H15" stroke="#20c020" fill="none" stroke-width="1"/><path d="M7.5 4.5V1.5H9.5V4.5" stroke="#f02020" fill="none" stroke-width="1"/><rect x="0.5" y="8" width="8" height="7.5" fill="#c0c0c0" stroke="#404040" stroke-width="0.8"/><rect x="1" y="8.5" width="2" height="2" fill="#ffff00"/><rect x="8" y="11" width="2" height="2" fill="#ffff00"/><rect x="9" y="14" width="2" height="1.5" fill="#ffff00"/></svg>
<div class="t" style="left:295px;top:791.69px;font-size:11px;line-height:11px;color:#000;transform:scaleX(1.0297);transform-origin:0 0;"><span class="m" id="m35">noname116.jla(変更)</span></div>
<div class="a" style="left:0px;top:810px;width:1280px;height:156px;background:#f0f0f0"></div>
<div class="a" style="left:0px;top:816px;width:1278px;height:1px;background:#a0a0a0"></div>
<div class="a" style="left:1px;top:817px;width:1277px;height:1px;background:#fff"></div>
<div class="a" style="left:0px;top:816px;width:1px;height:148px;background:#a0a0a0"></div>
<div class="a" style="left:1px;top:817px;width:1px;height:146px;background:#fff"></div>
<div class="a" style="left:1278px;top:816px;width:1px;height:148px;background:#a0a0a0"></div>
<div class="a" style="left:1279px;top:816px;width:1px;height:148px;background:#fff"></div>
<div class="a" style="left:0px;top:963px;width:1278px;height:1px;background:#a0a0a0"></div>
<div class="a" style="left:0px;top:964px;width:1279px;height:1px;background:#fff"></div>
<div class="a" style="left:6px;top:810px;width:62px;height:12px;background:#f0f0f0"></div>
<div class="t" style="left:7px;top:812.69px;font-size:11px;line-height:11px;color:#000;transform:scaleX(0.9516);transform-origin:0 0;"><span class="m" id="m36">Message log</span></div>
<div class="a" style="left:2px;top:826px;width:1275px;height:137px;background:#fff"></div>
<div class="a" style="left:2px;top:826px;width:1275px;height:1px;background:#a0a0a0"></div>
<div class="a" style="left:3px;top:827px;width:1274px;height:1px;background:#696969"></div>
<div class="a" style="left:2px;top:826px;width:1px;height:137px;background:#a0a0a0"></div>
<div class="a" style="left:3px;top:827px;width:1px;height:136px;background:#696969"></div>
<div class="t" style="left:5px;top:829.69px;font-size:11px;line-height:11px;color:#000;transform:scaleX(1.0211);transform-origin:0 0;"><span class="m" id="m37">2013/07/20 0:33:29</span></div>
<div class="t" style="left:110px;top:829.69px;font-size:11px;line-height:11px;color:#000;transform:scaleX(1.1351);transform-origin:0 0;"><span class="m" id="m38">rlen=32</span></div>
<div class="t" style="left:5px;top:841.69px;font-size:11px;line-height:11px;color:#000;transform:scaleX(1.0211);transform-origin:0 0;"><span class="m" id="m39">2013/07/20 0:33:29</span></div>
<div class="t" style="left:110px;top:841.69px;font-size:11px;line-height:11px;color:#000;transform:scaleX(1.0223);transform-origin:0 0;"><span class="m" id="m40">9BB66D7BB66DDBDFB6DD9E3700C0FFFFB66DDBB66DDBB66DDBB66DDBB66DDBB6</span></div>
<div class="t" style="left:5px;top:853.69px;font-size:11px;line-height:11px;color:#000;transform:scaleX(1.0211);transform-origin:0 0;"><span class="m" id="m41">2013/07/20 0:33:29</span></div>
<div class="t" style="left:110px;top:853.69px;font-size:11px;line-height:11px;color:#000;transform:scaleX(1.1351);transform-origin:0 0;"><span class="m" id="m42">rlen=32</span></div>
<div class="t" style="left:5px;top:865.69px;font-size:11px;line-height:11px;color:#000;transform:scaleX(1.0211);transform-origin:0 0;"><span class="m" id="m43">2013/07/20 0:33:29</span></div>
<div class="t" style="left:110px;top:865.69px;font-size:11px;line-height:11px;color:#000;transform:scaleX(1.0284);transform-origin:0 0;"><span class="m" id="m44">6DDBB66DDBB66DDBB66DDBB66DDBB66DDBB76DDBB66DDBB66DDBB66DDBB66DDB</span></div>
<div class="t" style="left:5px;top:877.69px;font-size:11px;line-height:11px;color:#000;transform:scaleX(1.0211);transform-origin:0 0;"><span class="m" id="m45">2013/07/20 0:33:29</span></div>
<div class="t" style="left:110px;top:877.69px;font-size:11px;line-height:11px;color:#000;transform:scaleX(1.1351);transform-origin:0 0;"><span class="m" id="m46">rlen=28</span></div>
<div class="t" style="left:5px;top:889.69px;font-size:11px;line-height:11px;color:#000;transform:scaleX(1.0211);transform-origin:0 0;"><span class="m" id="m47">2013/07/20 0:33:29</span></div>
<div class="t" style="left:110px;top:889.69px;font-size:11px;line-height:11px;color:#000;transform:scaleX(1.0278);transform-origin:0 0;"><span class="m" id="m48">B66DDBB66DDBB66DDBB66DDBB66DDBB66DDFB66DDBB66DDBB66D1B00</span></div>
<div class="t" style="left:5px;top:901.69px;font-size:11px;line-height:11px;color:#000;transform:scaleX(1.0211);transform-origin:0 0;"><span class="m" id="m49">2013/07/20 0:34:06</span></div>
<div class="t" style="left:110px;top:901.69px;font-size:11px;line-height:11px;color:#000;transform:scaleX(0.9324);transform-origin:0 0;"><span class="m" id="m50">JTAGケーブルを切断しました</span></div>
<div class="t" style="left:5px;top:913.69px;font-size:11px;line-height:11px;color:#000;transform:scaleX(1.0211);transform-origin:0 0;"><span class="m" id="m51">2013/07/20 0:34:18</span></div>
<div class="t" style="left:110px;top:913.69px;font-size:11px;line-height:11px;color:#000;transform:scaleX(0.9763);transform-origin:0 0;"><span class="m" id="m52">NP1064(特電Artix-7ボード)を発見しました</span></div>
<div class="t" style="left:5px;top:925.69px;font-size:11px;line-height:11px;color:#000;transform:scaleX(1.0211);transform-origin:0 0;"><span class="m" id="m53">2013/07/20 0:34:18</span></div>
<div class="t" style="left:110px;top:925.69px;font-size:11px;line-height:11px;color:#000;transform:scaleX(1.0479);transform-origin:0 0;"><span class="m" id="m54">Super SmartJTAG (C)Copyright 2013 Tokushu Denshi Kairo Inc.</span></div>
<div class="a" style="left:1260px;top:828px;width:16px;height:116px;background:linear-gradient(90deg,#e6e6e6,#f2f2f2 30%,#f2f2f2 70%,#e6e6e6)"></div>
<svg class="a" style="left:1264px;top:834px" width="8" height="5"><path d="M0 4.5H7L3.5 0.5Z" fill="#404040"/></svg>
<svg class="a" style="left:1264px;top:933px" width="8" height="5"><path d="M0 0.5H7L3.5 4.5Z" fill="#404040"/></svg>
<div class="a" style="left:1260px;top:910px;width:15px;height:16px;border:1px solid #979797;border-radius:2px;background:linear-gradient(90deg,#f6f6f6,#eaeaea 45%,#d6d6d6 55%,#cdcdcd)"></div>
<div class="a" style="left:4px;top:945px;width:1256px;height:16px;background:linear-gradient(#e6e6e6,#f2f2f2 30%,#f2f2f2 70%,#e6e6e6)"></div>
<svg class="a" style="left:9px;top:949px" width="5" height="8"><path d="M4.5 0V7L0.5 3.5Z" fill="#909090"/></svg>
<svg class="a" style="left:1248px;top:949px" width="5" height="8"><path d="M0.5 0V7L4.5 3.5Z" fill="#909090"/></svg>
<div class="a" style="left:1258px;top:944px;width:18px;height:17px;background:#f0f0f0"></div>
<div class="a" style="left:0px;top:965px;width:1280px;height:19px;background:#f0f0f0"></div>
<div class="a" style="left:0px;top:967px;width:1029px;height:1px;background:#a0a0a0"></div>
<div class="a" style="left:0px;top:967px;width:1px;height:16px;background:#a0a0a0"></div>
<div class="a" style="left:1032px;top:967px;width:148px;height:1px;background:#a0a0a0"></div>
<div class="a" style="left:1032px;top:967px;width:1px;height:16px;background:#a0a0a0"></div>
<div class="a" style="left:1183px;top:967px;width:95px;height:1px;background:#a0a0a0"></div>
<div class="a" style="left:1183px;top:967px;width:1px;height:16px;background:#a0a0a0"></div>
<div class="t" style="left:1185px;top:968.42px;font-size:12.5px;line-height:12.5px;color:#000;transform:scaleX(1.0337);transform-origin:0 0;"><span class="m" id="m55">(375,555) 191%</span></div>
<div class="a" style="left:0px;top:984px;width:1280px;height:8px;background:linear-gradient(90deg,#7d93ad 0px,#a3b8d0 90px,#aec3da 200px,#aec3da 860px,#8aa0b9 880px,#7c92ab 1000px,#7c92ab 1280px)"></div>
<div class="a" style="left:0px;top:984px;width:1280px;height:1px;background:#38485c"></div>
<div class="a" style="left:13px;top:986px;width:28px;height:12px;border-radius:14px;border:1px solid #2c4a70;background:linear-gradient(#d8e4f0,#90aac8)"></div>
<div class="a" style="left:82px;top:987px;width:18px;height:10px;border-radius:9px;border:2px solid #f0c020;border-left-color:#3080e0"></div>
<div class="a" style="left:118px;top:985px;width:48px;height:8px;background:linear-gradient(#f4f8fc,#d8e4f0);border:1px solid #2c3c50;border-bottom:none;border-radius:3px 3px 0 0"></div>
<div class="a" style="left:472px;top:985px;width:55px;height:8px;background:linear-gradient(#f4f8fc,#d8e4f0);border:1px solid #2c3c50;border-bottom:none;border-radius:3px 3px 0 0"></div>
<div class="a" style="left:531px;top:985px;width:55px;height:8px;background:linear-gradient(#f4f8fc,#d8e4f0);border:1px solid #2c3c50;border-bottom:none;border-radius:3px 3px 0 0"></div>
<div class="a" style="left:590px;top:985px;width:55px;height:8px;background:linear-gradient(#f4f8fc,#d8e4f0);border:1px solid #2c3c50;border-bottom:none;border-radius:3px 3px 0 0"></div>
<div class="a" style="left:650px;top:985px;width:55px;height:8px;background:linear-gradient(#f4f8fc,#d8e4f0);border:1px solid #2c3c50;border-bottom:none;border-radius:3px 3px 0 0"></div>
<div class="a" style="left:709px;top:985px;width:47px;height:8px;background:linear-gradient(#f4f8fc,#d8e4f0);border:1px solid #2c3c50;border-bottom:none;border-radius:3px 3px 0 0"></div>
<div class="a" style="left:767px;top:985px;width:55px;height:8px;background:linear-gradient(#f4f8fc,#d8e4f0);border:1px solid #2c3c50;border-bottom:none;border-radius:3px 3px 0 0"></div>
<div class="a" style="left:826px;top:985px;width:54px;height:8px;background:linear-gradient(#f4f8fc,#d8e4f0);border:1px solid #2c3c50;border-bottom:none;border-radius:3px 3px 0 0"></div>
<div class="a" style="left:169px;top:985px;width:1px;height:7px;background:#e8f0f8"></div>
<div class="a" style="left:171px;top:985px;width:1px;height:7px;background:#607890"></div>
<div class="a" style="left:173px;top:985px;width:1px;height:7px;background:#e8f0f8"></div>
<div class="a" style="left:128px;top:988px;width:11px;height:4px;background:#e0c060"></div>
<div class="a" style="left:248px;top:988px;width:29px;height:4px;background:#6a6a6a"></div>
<div class="a" style="left:307px;top:988px;width:30px;height:4px;background:#f0f0f0"></div>
<div class="a" style="left:376px;top:988px;width:19px;height:4px;background:#101010"></div>
<div class="a" style="left:425px;top:988px;width:32px;height:4px;background:#d8c8b0"></div>
<div class="a" style="left:498px;top:988px;width:18px;height:4px;background:#9080d0"></div>
<div class="a" style="left:600px;top:988px;width:30px;height:4px;background:#707070"></div>
<div class="a" style="left:710px;top:988px;width:28px;height:4px;background:#101010"></div>
<div class="a" style="left:780px;top:988px;width:30px;height:4px;background:#d8c8b0"></div>
<div class="a" style="left:840px;top:988px;width:30px;height:4px;background:#ffffff"></div>
<div class="a" style="left:307px;top:987px;width:30px;height:2px;background:#e02020"></div>
<div class="a" style="left:1266px;top:985px;width:14px;height:7px;background:linear-gradient(#a8b8c8,#8898b0);border-left:1px solid #50607a"></div>
<div class="a" style="left:1205px;top:989px;width:50px;height:3px;background:repeating-linear-gradient(90deg,#f0f4f8 0 5px,transparent 5px 9px)"></div>
</body></html>
